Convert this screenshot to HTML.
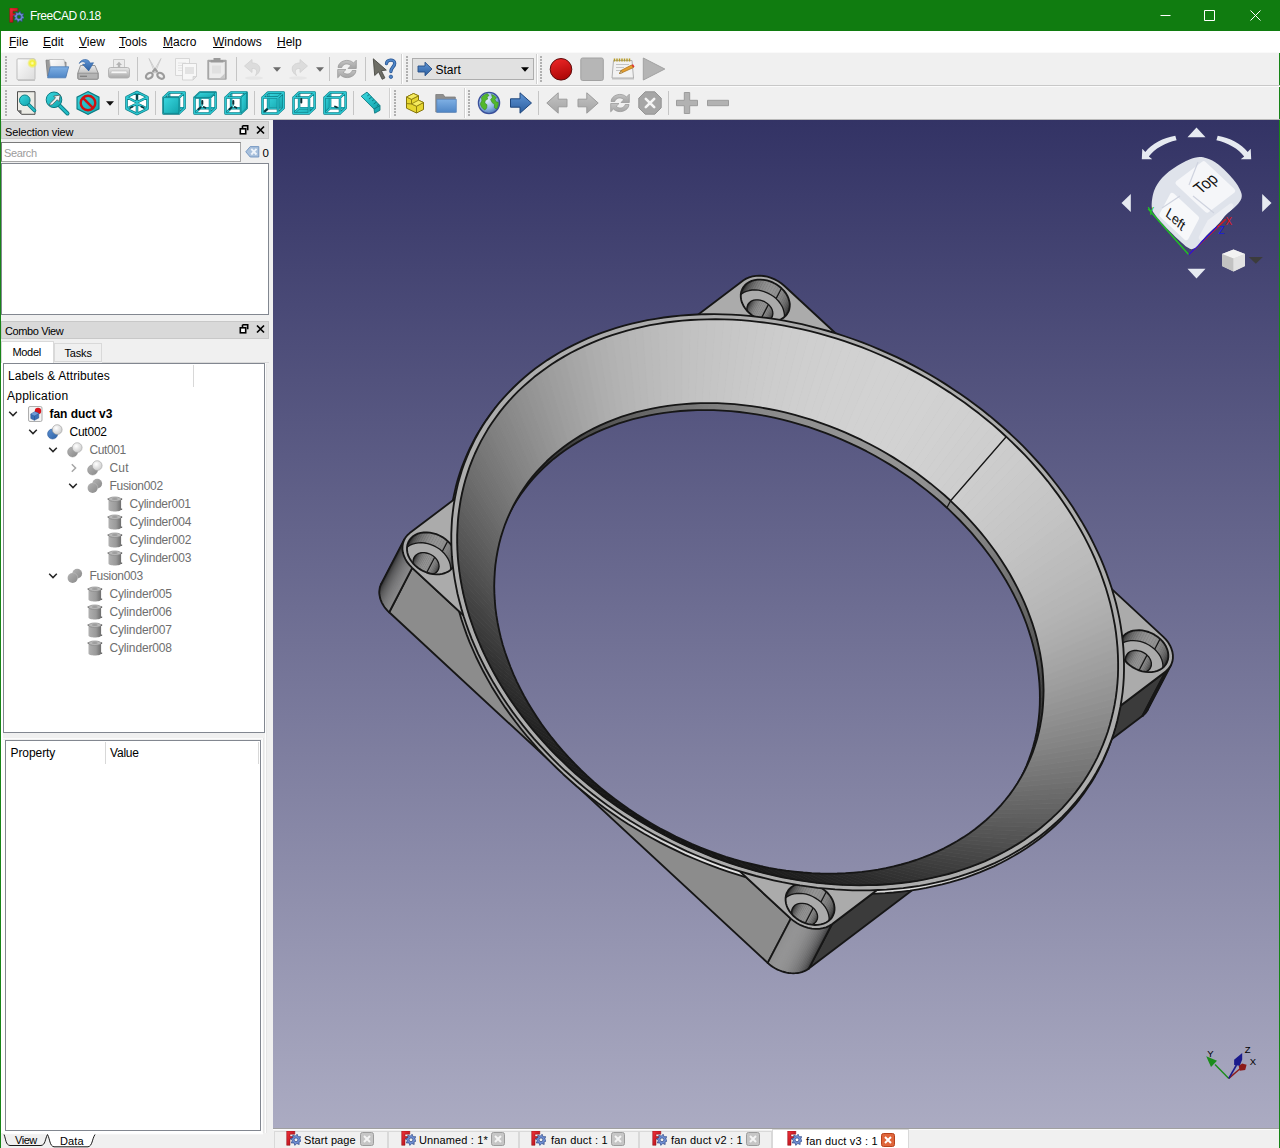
<!DOCTYPE html>
<html><head><meta charset="utf-8"><title>FreeCAD 0.18</title>
<style>
html,body{margin:0;padding:0;}
body{width:1280px;height:1148px;overflow:hidden;background:#f0f0f0;font-family:"Liberation Sans",sans-serif;font-size:12px;color:#000;position:relative;}
.a{position:absolute;}
.t{position:absolute;white-space:nowrap;line-height:14px;height:14px;}
#vp{position:absolute;left:0;top:0;width:1280px;height:1148px;}
u{text-decoration:underline;text-underline-offset:1px;}
.g{color:#6e6e6e;}
.sep{position:absolute;width:1px;background:#c5c5c5;}
.tbsep{position:absolute;width:1px;background:#d0d0d0;box-shadow:1px 0 0 #fff;}
.grip{position:absolute;width:3px;background-image:radial-gradient(circle at 1px 1px,#b0b0b0 0.9px,transparent 1.1px);background-size:3px 3px;}
.ic{position:absolute;width:24px;height:24px;overflow:visible;}
.dock{position:absolute;left:1px;width:268px;height:18px;background:#d9d9d9;border:1px solid #c8c8c8;box-sizing:border-box;}
.frame{position:absolute;background:#fff;border:1px solid #828790;box-sizing:border-box;}
.cl{position:absolute;width:13px;height:13px;top:1132px;border:1px solid #9b9b9b;border-radius:2px;background:#c9c9c9;box-sizing:border-box;}
</style></head><body>
<svg width="0" height="0" style="position:absolute"><defs>
<linearGradient id="gF" x1="0" y1="0" x2="1" y2="1"><stop offset="0" stop-color="#f0303a"/><stop offset="1" stop-color="#a80c14"/></linearGradient>
<radialGradient id="gW" cx="0.4" cy="0.35" r="0.7"><stop offset="0" stop-color="#ffffff"/><stop offset="1" stop-color="#c9c9c9"/></radialGradient>
<linearGradient id="gB" x1="0" y1="0" x2="1" y2="1"><stop offset="0" stop-color="#5b8fd0"/><stop offset="1" stop-color="#2e62a6"/></linearGradient>
<linearGradient id="gG" x1="0" y1="0" x2="1" y2="1"><stop offset="0" stop-color="#b4b4b4"/><stop offset="1" stop-color="#8a8a8a"/></linearGradient>
<linearGradient id="gC" x1="0" y1="0" x2="1" y2="0"><stop offset="0" stop-color="#b0b0b0"/><stop offset="0.6" stop-color="#9a9a9a"/><stop offset="1" stop-color="#6e6e6e"/></linearGradient>
<symbol id="fc" viewBox="0 0 16 16" overflow="visible"><path d="M1.700 0h8.100v3.200H5v2.300h3.600v2.600H5v6.200H1.700z" fill="url(#gF)" stroke="#8a0a12" stroke-width="0.500"/><path d="M12.11 3.21L13.06 5.72L15.74 5.63L14.63 8.08L16.59 9.91L14.08 10.86L14.17 13.54L11.72 12.43L9.89 14.39L8.94 11.88L6.26 11.97L7.37 9.52L5.41 7.69L7.92 6.74L7.83 4.06L10.28 5.17ZM9.10 8.80a1.9 1.9 0 1 0 3.8 0a1.9 1.9 0 1 0 -3.8 0Z" fill="#6f8fd4" fill-rule="evenodd" stroke="#2c4684" stroke-width="0.700" stroke-linejoin="round"/></symbol>
<symbol id="cutc" viewBox="0 0 16 16"><circle cx="5.6" cy="10" r="5" fill="url(#gB)" stroke="#2a5a9c" stroke-width="0.6"/><circle cx="10.2" cy="5.6" r="4.9" fill="url(#gW)" stroke="#9a9a9a" stroke-width="0.6"/></symbol>
<symbol id="cutg" viewBox="0 0 16 16"><circle cx="5.6" cy="10" r="5" fill="url(#gG)" stroke="#8a8a8a" stroke-width="0.5"/><circle cx="10.2" cy="5.6" r="4.9" fill="url(#gW)" stroke="#a4a4a4" stroke-width="0.6"/></symbol>
<symbol id="fus" viewBox="0 0 16 16"><circle cx="5.6" cy="10" r="5" fill="url(#gG)"/><circle cx="10.2" cy="5.6" r="4.9" fill="url(#gG)"/><path d="M5.8 4.9a5 5 0 0 1 5 5.6" stroke="#b8b8b8" stroke-width="0.7" fill="none"/></symbol>
<symbol id="cyl" viewBox="0 0 16 16"><path d="M1.5 3.2v10.2c0 1.3 2.9 2 6.3 2s6.3-.7 6.3-2V3.2z" fill="url(#gC)"/><ellipse cx="7.8" cy="3.2" rx="6.3" ry="2.2" fill="#b9b9b9" stroke="#858585" stroke-width="0.7"/><path d="M1.2 2.2v1.6M14.6 2.2v1.8M14.6 12.5v1.5" stroke="#666" stroke-width="1.1"/><ellipse cx="7.8" cy="3" rx="3" ry="1" fill="#9d9d9d"/></symbol>
</defs></svg>
<!-- 3D view + model -->
<svg id="vp" width="1280" height="1148" viewBox="0 0 1280 1148">
<defs><linearGradient id="bg" gradientUnits="userSpaceOnUse" x1="0" y1="120" x2="0" y2="1128"><stop offset="0" stop-color="#333365"/><stop offset="1" stop-color="#ababc2"/></linearGradient></defs>
<rect x="273" y="120" width="1006" height="1008" fill="url(#bg)"/>
<g>
<path d="M412.2,567.9 L790.8,918.6 L767.7,962.9 L389.2,612.3Z" fill="#8c8c8c" stroke="#161616" stroke-width="1.85" stroke-linejoin="round" stroke-linecap="round"/>
<path d="M831.9,924.2 L1165.7,671.4 L1142.6,715.8 L808.8,968.6Z" fill="#3b3b3b" stroke="#161616" stroke-width="1.85" stroke-linejoin="round" stroke-linecap="round"/>
<path d="M404.4,539.3 L403.8,540.7 L380.7,585.1 L381.3,583.7Z" fill="#111111" stroke="#111111" stroke-width="0.6" stroke-linejoin="round" stroke-linecap="round"/>
<path d="M403.8,540.7 L403.2,542.2 L380.1,586.6 L380.7,585.1Z" fill="#1b1b1b" stroke="#1b1b1b" stroke-width="0.6" stroke-linejoin="round" stroke-linecap="round"/>
<path d="M403.2,542.2 L402.8,543.8 L379.7,588.1 L380.1,586.6Z" fill="#242424" stroke="#242424" stroke-width="0.6" stroke-linejoin="round" stroke-linecap="round"/>
<path d="M402.8,543.8 L402.5,545.3 L379.5,589.7 L379.7,588.1Z" fill="#2d2d2d" stroke="#2d2d2d" stroke-width="0.6" stroke-linejoin="round" stroke-linecap="round"/>
<path d="M402.5,545.3 L402.4,547.0 L379.3,591.3 L379.5,589.7Z" fill="#353535" stroke="#353535" stroke-width="0.6" stroke-linejoin="round" stroke-linecap="round"/>
<path d="M402.4,547.0 L402.4,548.6 L379.3,593.0 L379.3,591.3Z" fill="#3e3e3e" stroke="#3e3e3e" stroke-width="0.6" stroke-linejoin="round" stroke-linecap="round"/>
<path d="M402.4,548.6 L402.5,550.3 L379.5,594.7 L379.3,593.0Z" fill="#474747" stroke="#474747" stroke-width="0.6" stroke-linejoin="round" stroke-linecap="round"/>
<path d="M402.5,550.3 L402.8,552.0 L379.7,596.4 L379.5,594.7Z" fill="#4f4f4f" stroke="#4f4f4f" stroke-width="0.6" stroke-linejoin="round" stroke-linecap="round"/>
<path d="M402.8,552.0 L403.2,553.7 L380.1,598.1 L379.7,596.4Z" fill="#575757" stroke="#575757" stroke-width="0.6" stroke-linejoin="round" stroke-linecap="round"/>
<path d="M403.2,553.7 L403.7,555.4 L380.6,599.7 L380.1,598.1Z" fill="#5e5e5e" stroke="#5e5e5e" stroke-width="0.6" stroke-linejoin="round" stroke-linecap="round"/>
<path d="M403.7,555.4 L404.4,557.1 L381.3,601.4 L380.6,599.7Z" fill="#656565" stroke="#656565" stroke-width="0.6" stroke-linejoin="round" stroke-linecap="round"/>
<path d="M404.4,557.1 L405.2,558.7 L382.1,603.1 L381.3,601.4Z" fill="#6c6c6c" stroke="#6c6c6c" stroke-width="0.6" stroke-linejoin="round" stroke-linecap="round"/>
<path d="M405.2,558.7 L406.1,560.4 L383.0,604.7 L382.1,603.1Z" fill="#727272" stroke="#727272" stroke-width="0.6" stroke-linejoin="round" stroke-linecap="round"/>
<path d="M406.1,560.4 L407.1,562.0 L384.0,606.4 L383.0,604.7Z" fill="#787878" stroke="#787878" stroke-width="0.6" stroke-linejoin="round" stroke-linecap="round"/>
<path d="M407.1,562.0 L408.2,563.5 L385.1,607.9 L384.0,606.4Z" fill="#7d7d7d" stroke="#7d7d7d" stroke-width="0.6" stroke-linejoin="round" stroke-linecap="round"/>
<path d="M408.2,563.5 L409.5,565.1 L386.4,609.4 L385.1,607.9Z" fill="#828282" stroke="#828282" stroke-width="0.6" stroke-linejoin="round" stroke-linecap="round"/>
<path d="M409.5,565.1 L410.8,566.5 L387.7,610.9 L386.4,609.4Z" fill="#868686" stroke="#868686" stroke-width="0.6" stroke-linejoin="round" stroke-linecap="round"/>
<path d="M410.8,566.5 L412.2,567.9 L389.2,612.3 L387.7,610.9Z" fill="#8a8a8a" stroke="#8a8a8a" stroke-width="0.6" stroke-linejoin="round" stroke-linecap="round"/>
<path d="M381.3,583.7 L380.7,585.0 L380.2,586.3 L379.8,587.7 L379.6,589.1 L379.4,590.5 L379.3,592.0 L379.3,593.5 L379.5,595.0 L379.8,596.5 L380.1,598.1 L380.6,599.6 L381.2,601.1 L381.8,602.6 L382.6,604.1 L383.5,605.6 L384.4,607.0 L385.5,608.4 L386.6,609.7 L387.9,611.1 L389.2,612.3" fill="none" stroke="#161616" stroke-width="1.85" stroke-linejoin="round" stroke-linecap="round"/>
<path d="M404.4,539.3 L381.3,583.7" fill="none" stroke="#161616" stroke-width="1.85" stroke-linejoin="round" stroke-linecap="round"/>
<path d="M412.2,567.9 L389.2,612.3" fill="none" stroke="#161616" stroke-width="1.85" stroke-linejoin="round" stroke-linecap="round"/>
<path d="M790.8,918.6 L792.3,919.9 L769.2,964.3 L767.7,962.9Z" fill="#8d8d8d" stroke="#8d8d8d" stroke-width="0.6" stroke-linejoin="round" stroke-linecap="round"/>
<path d="M792.3,919.9 L793.9,921.2 L770.9,965.6 L769.2,964.3Z" fill="#909090" stroke="#909090" stroke-width="0.6" stroke-linejoin="round" stroke-linecap="round"/>
<path d="M793.9,921.2 L795.6,922.4 L772.6,966.8 L770.9,965.6Z" fill="#929292" stroke="#929292" stroke-width="0.6" stroke-linejoin="round" stroke-linecap="round"/>
<path d="M795.6,922.4 L797.4,923.5 L774.3,967.9 L772.6,966.8Z" fill="#939393" stroke="#939393" stroke-width="0.6" stroke-linejoin="round" stroke-linecap="round"/>
<path d="M797.4,923.5 L799.2,924.5 L776.1,968.9 L774.3,967.9Z" fill="#949494" stroke="#949494" stroke-width="0.6" stroke-linejoin="round" stroke-linecap="round"/>
<path d="M799.2,924.5 L801.1,925.4 L778.0,969.8 L776.1,968.9Z" fill="#949494" stroke="#949494" stroke-width="0.6" stroke-linejoin="round" stroke-linecap="round"/>
<path d="M801.1,925.4 L803.0,926.2 L779.9,970.6 L778.0,969.8Z" fill="#939393" stroke="#939393" stroke-width="0.6" stroke-linejoin="round" stroke-linecap="round"/>
<path d="M803.0,926.2 L804.9,926.9 L781.9,971.3 L779.9,970.6Z" fill="#929292" stroke="#929292" stroke-width="0.6" stroke-linejoin="round" stroke-linecap="round"/>
<path d="M804.9,926.9 L806.9,927.6 L783.8,971.9 L781.9,971.3Z" fill="#909090" stroke="#909090" stroke-width="0.6" stroke-linejoin="round" stroke-linecap="round"/>
<path d="M806.9,927.6 L808.9,928.0 L785.8,972.4 L783.8,971.9Z" fill="#8e8e8e" stroke="#8e8e8e" stroke-width="0.6" stroke-linejoin="round" stroke-linecap="round"/>
<path d="M808.9,928.0 L810.9,928.4 L787.8,972.8 L785.8,972.4Z" fill="#8b8b8b" stroke="#8b8b8b" stroke-width="0.6" stroke-linejoin="round" stroke-linecap="round"/>
<path d="M810.9,928.4 L812.9,928.7 L789.8,973.1 L787.8,972.8Z" fill="#878787" stroke="#878787" stroke-width="0.6" stroke-linejoin="round" stroke-linecap="round"/>
<path d="M812.9,928.7 L814.8,928.9 L791.7,973.2 L789.8,973.1Z" fill="#838383" stroke="#838383" stroke-width="0.6" stroke-linejoin="round" stroke-linecap="round"/>
<path d="M814.8,928.9 L816.8,928.9 L793.7,973.3 L791.7,973.2Z" fill="#7e7e7e" stroke="#7e7e7e" stroke-width="0.6" stroke-linejoin="round" stroke-linecap="round"/>
<path d="M816.8,928.9 L818.7,928.8 L795.6,973.2 L793.7,973.3Z" fill="#797979" stroke="#797979" stroke-width="0.6" stroke-linejoin="round" stroke-linecap="round"/>
<path d="M818.7,928.8 L820.6,928.6 L797.5,973.0 L795.6,973.2Z" fill="#737373" stroke="#737373" stroke-width="0.6" stroke-linejoin="round" stroke-linecap="round"/>
<path d="M820.6,928.6 L822.4,928.3 L799.3,972.7 L797.5,973.0Z" fill="#6d6d6d" stroke="#6d6d6d" stroke-width="0.6" stroke-linejoin="round" stroke-linecap="round"/>
<path d="M822.4,928.3 L824.2,927.9 L801.1,972.3 L799.3,972.7Z" fill="#666666" stroke="#666666" stroke-width="0.6" stroke-linejoin="round" stroke-linecap="round"/>
<path d="M824.2,927.9 L825.9,927.4 L802.8,971.8 L801.1,972.3Z" fill="#5f5f5f" stroke="#5f5f5f" stroke-width="0.6" stroke-linejoin="round" stroke-linecap="round"/>
<path d="M825.9,927.4 L827.5,926.7 L804.4,971.1 L802.8,971.8Z" fill="#575757" stroke="#575757" stroke-width="0.6" stroke-linejoin="round" stroke-linecap="round"/>
<path d="M827.5,926.7 L829.0,926.0 L806.0,970.4 L804.4,971.1Z" fill="#4f4f4f" stroke="#4f4f4f" stroke-width="0.6" stroke-linejoin="round" stroke-linecap="round"/>
<path d="M829.0,926.0 L830.5,925.1 L807.4,969.5 L806.0,970.4Z" fill="#474747" stroke="#474747" stroke-width="0.6" stroke-linejoin="round" stroke-linecap="round"/>
<path d="M830.5,925.1 L831.9,924.2 L808.8,968.6 L807.4,969.5Z" fill="#3f3f3f" stroke="#3f3f3f" stroke-width="0.6" stroke-linejoin="round" stroke-linecap="round"/>
<path d="M767.7,962.9 L769.5,964.5 L771.4,965.9 L773.3,967.3 L775.4,968.5 L777.5,969.6 L779.7,970.5 L782.0,971.4 L784.2,972.0 L786.5,972.6 L788.8,973.0 L791.1,973.2 L793.3,973.3 L795.5,973.2 L797.7,973.0 L799.8,972.6 L801.8,972.1 L803.7,971.4 L805.5,970.6 L807.2,969.7 L808.8,968.6" fill="none" stroke="#161616" stroke-width="1.85" stroke-linejoin="round" stroke-linecap="round"/>
<path d="M790.8,918.6 L767.7,962.9" fill="none" stroke="#161616" stroke-width="1.85" stroke-linejoin="round" stroke-linecap="round"/>
<path d="M831.9,924.2 L808.8,968.6" fill="none" stroke="#161616" stroke-width="1.85" stroke-linejoin="round" stroke-linecap="round"/>
<path d="M1165.7,671.4 L1166.9,670.3 L1143.9,714.7 L1142.6,715.8Z" fill="#363636" stroke="#363636" stroke-width="0.6" stroke-linejoin="round" stroke-linecap="round"/>
<path d="M1166.9,670.3 L1168.1,669.2 L1145.0,713.6 L1143.9,714.7Z" fill="#2d2d2d" stroke="#2d2d2d" stroke-width="0.6" stroke-linejoin="round" stroke-linecap="round"/>
<path d="M1168.1,669.2 L1169.2,668.0 L1146.1,712.3 L1145.0,713.6Z" fill="#242424" stroke="#242424" stroke-width="0.6" stroke-linejoin="round" stroke-linecap="round"/>
<path d="M1169.2,668.0 L1170.1,666.6 L1147.0,711.0 L1146.1,712.3Z" fill="#1b1b1b" stroke="#1b1b1b" stroke-width="0.6" stroke-linejoin="round" stroke-linecap="round"/>
<path d="M1170.1,666.6 L1170.9,665.2 L1147.8,709.6 L1147.0,711.0Z" fill="#111111" stroke="#111111" stroke-width="0.6" stroke-linejoin="round" stroke-linecap="round"/>
<path d="M1142.6,715.8 L1142.9,715.5 L1143.2,715.3 L1143.6,715.0 L1143.9,714.7 L1144.2,714.4 L1144.5,714.2 L1144.8,713.9 L1145.0,713.6 L1145.3,713.3 L1145.6,713.0 L1145.8,712.6 L1146.1,712.3 L1146.3,712.0 L1146.6,711.7 L1146.8,711.4 L1147.0,711.0 L1147.2,710.7 L1147.4,710.3 L1147.6,710.0 L1147.8,709.6" fill="none" stroke="#161616" stroke-width="1.85" stroke-linejoin="round" stroke-linecap="round"/>
<path d="M1165.7,671.4 L1142.6,715.8" fill="none" stroke="#161616" stroke-width="1.85" stroke-linejoin="round" stroke-linecap="round"/>
<path d="M1170.9,665.2 L1147.8,709.6" fill="none" stroke="#161616" stroke-width="1.85" stroke-linejoin="round" stroke-linecap="round"/>
<linearGradient id="slg" gradientUnits="userSpaceOnUse" x1="515" y1="724" x2="1107" y2="785"><stop offset="0" stop-color="#9c9c9c"/><stop offset="0.35" stop-color="#e2e2e2"/><stop offset="0.7" stop-color="#dcdcdc"/><stop offset="1" stop-color="#8c8c8c"/></linearGradient>
<path d="M1008.8,436.7 L1002.1,430.6 L995.3,424.7 L988.3,418.9 L981.2,413.2 L973.9,407.6 L966.5,402.2 L959.0,396.9 L951.4,391.7 L943.7,386.7 L935.8,381.9 L927.9,377.2 L919.8,372.6 L911.7,368.3 L903.5,364.0 L895.2,360.0 L886.8,356.1 L878.3,352.4 L869.8,348.8 L861.2,345.5 L852.6,342.3 L844.0,339.3 L835.3,336.5 L826.5,333.8 L817.7,331.4 L809.0,329.1 L800.1,327.0 L791.3,325.1 L782.5,323.4 L773.7,321.9 L764.9,320.6 L756.1,319.5 L747.3,318.6 L738.6,317.9 L729.9,317.4 L721.2,317.0 L712.6,316.9 L704.0,317.0 L695.4,317.3 L687.0,317.7 L678.6,318.4 L670.3,319.2 L662.0,320.3 L653.9,321.6 L645.8,323.0 L637.8,324.6 L630.0,326.5 L622.2,328.5 L614.6,330.7 L607.0,333.1 L599.6,335.7 L592.3,338.5 L585.2,341.4 L578.2,344.6 L571.3,347.9 L564.6,351.4 L558.0,355.0 L551.6,358.9 L545.3,362.9 L539.3,367.1 L533.3,371.4 L527.6,375.9 L522.0,380.6 L516.6,385.4 L511.4,390.3 L506.4,395.4 L501.6,400.7 L497.0,406.1 L492.5,411.6 L488.3,417.3 L484.3,423.1 L480.5,429.0 L476.8,435.0 L473.5,441.2 L470.3,447.4 L467.3,453.8 L464.6,460.3 L462.0,466.9 L459.7,473.5 L457.6,480.3 L455.8,487.1 L454.2,494.1 L452.7,501.1 L451.6,508.1 L450.6,515.3 L449.9,522.5 L449.4,529.8 L449.2,537.1 L449.1,544.4 L449.4,551.8 L449.8,559.3 L450.5,566.7 L451.4,574.2 L452.5,581.8 L453.8,589.3 L455.4,596.8 L457.2,604.4 L459.3,611.9 L461.5,619.5 L464.0,627.0 L466.7,634.6 L469.6,642.1 L472.8,649.5 L476.1,657.0 L479.7,664.4 L483.5,671.8 L487.5,679.1 L491.6,686.4 L496.0,693.6 L500.6,700.8 L505.4,707.9 L510.4,714.9 L515.5,721.8 L520.9,728.7 L526.4,735.5 L532.1,742.2 L538.0,748.8 L544.1,755.3 L550.3,761.7 L556.7,768.0 L563.2,774.2 L569.9,780.3 L576.7,786.2 L583.7,792.0 L590.8,797.7 L598.1,803.3 L605.5,808.7 L613.0,814.0 L620.6,819.2 L628.3,824.2 L636.2,829.0 L644.1,833.7 L652.2,838.2 L660.3,842.6 L668.6,846.8 L676.9,850.9 L685.2,854.8 L693.7,858.5 L702.2,862.0 L710.8,865.4 L719.4,868.6 L728.1,871.6 L736.8,874.4 L745.5,877.1 L754.3,879.5 L763.1,881.8 L771.9,883.9 L780.7,885.7 L789.5,887.4 L798.3,888.9 L807.1,890.2 L815.9,891.4 L824.7,892.3 L833.4,893.0 L842.2,893.5 L850.8,893.8 L859.5,894.0 L868.1,893.9 L876.6,893.6 L885.0,893.2 L893.4,892.5 L901.8,891.6 L910.0,890.6 L918.2,889.3 L926.2,887.9 L934.2,886.2 L942.1,884.4 L949.8,882.4 L957.5,880.2 L965.0,877.8 L972.4,875.2 L979.7,872.4 L986.8,869.4 L993.9,866.3 L1000.7,863.0 L1007.4,859.5 L1014.0,855.8 L1020.4,852.0 L1026.7,848.0 L1032.8,843.8 L1038.7,839.5 L1044.4,835.0 L1050.0,830.3 L1055.4,825.5 L1060.6,820.6 L1065.6,815.4 L1070.4,810.2 L1075.1,804.8 L1079.5,799.3 L1083.7,793.6 L1087.7,787.8 L1091.6,781.9 L1095.2,775.9 L1098.6,769.7 L1101.8,763.5 L1104.7,757.1 L1107.5,750.6 L1110.0,744.0 L1112.3,737.4 L1114.4,730.6 L1116.2,723.7 L1117.9,716.8 L1119.3,709.8 L1120.4,702.7 L1121.4,695.6 L1122.1,688.4 L1122.6,681.1 L1122.9,673.8 L1122.9,666.4 L1122.7,659.0 L1122.2,651.6 L1121.6,644.1 L1120.7,636.6 L1119.5,629.1 L1118.2,621.6 L1116.6,614.0 L1114.8,606.5 L1112.8,598.9 L1110.5,591.4 L1108.0,583.8 L1105.3,576.3 L1102.4,568.8 L1099.2,561.3 L1095.9,553.9 L1092.3,546.5 L1088.6,539.1 L1084.6,531.8 L1080.4,524.5 L1076.0,517.3 L1071.4,510.1 L1066.6,503.0 L1061.6,496.0 L1056.5,489.0 L1051.1,482.2 L1045.6,475.4 L1039.9,468.7 L1034.0,462.1 L1028.0,455.6 L1021.7,449.2 L1015.4,442.9 L1008.8,436.7Z" fill="url(#slg)" stroke="#161616" stroke-width="1.85" stroke-linejoin="round" stroke-linecap="round"/>
<path d="M784.5,286.0 L781.5,283.5 L778.2,281.2 L774.7,279.4 L771.0,277.8 L767.3,276.7 L763.5,276.0 L759.7,275.6 L756.0,275.8 L752.5,276.3 L749.2,277.3 L746.2,278.6 L743.5,280.3 L409.7,533.1 L407.3,535.2 L405.4,537.6 L404.0,540.3 L403.0,543.1 L402.5,546.2 L402.4,549.4 L402.9,552.6 L403.9,555.9 L405.4,559.1 L407.2,562.2 L409.6,565.2 L412.2,567.9 L790.8,918.6 L793.8,921.1 L797.1,923.3 L800.6,925.2 L804.3,926.7 L808.1,927.9 L811.9,928.6 L815.6,928.9 L819.3,928.8 L822.8,928.2 L826.1,927.3 L829.2,925.9 L831.9,924.2 L1165.7,671.4 L1168.0,669.3 L1169.9,666.9 L1171.4,664.3 L1172.4,661.4 L1172.9,658.3 L1172.9,655.2 L1172.4,651.9 L1171.4,648.7 L1170.0,645.4 L1168.1,642.3 L1165.8,639.4 L1163.1,636.6Z" fill="#ababab" stroke="#161616" stroke-width="1.85" stroke-linejoin="round" stroke-linecap="round"/>
<clipPath id="hc1"><path d="M781.5,288.3 L779.0,286.2 L776.2,284.3 L773.2,282.7 L770.1,281.4 L767.0,280.4 L763.7,279.8 L760.6,279.6 L757.5,279.7 L754.5,280.1 L751.7,280.9 L749.2,282.1 L746.9,283.5 L744.9,285.3 L743.3,287.3 L742.1,289.5 L741.2,291.9 L740.8,294.5 L740.8,297.2 L741.2,299.9 L742.0,302.7 L743.3,305.4 L744.9,308.0 L746.8,310.5 L749.1,312.8 L751.6,315.0 L754.4,316.8 L757.3,318.4 L760.4,319.7 L763.6,320.7 L766.8,321.3 L770.0,321.5 L773.1,321.4 L776.1,321.0 L778.9,320.2 L781.4,319.0 L783.7,317.6 L785.6,315.8 L787.2,313.8 L788.5,311.6 L789.3,309.2 L789.7,306.6 L789.8,303.9 L789.3,301.2 L788.5,298.4 L787.3,295.7 L785.7,293.1 L783.8,290.6 L781.5,288.3Z"/></clipPath>
<g clip-path="url(#hc1)">
<path d="M781.5,288.3 L779.0,286.2 L776.2,284.3 L773.2,282.7 L770.1,281.4 L767.0,280.4 L763.7,279.8 L760.6,279.6 L757.5,279.7 L754.5,280.1 L751.7,280.9 L749.2,282.1 L746.9,283.5 L744.9,285.3 L743.3,287.3 L742.1,289.5 L741.2,291.9 L740.8,294.5 L740.8,297.2 L741.2,299.9 L742.0,302.7 L743.3,305.4 L744.9,308.0 L746.8,310.5 L749.1,312.8 L751.6,315.0 L754.4,316.8 L757.3,318.4 L760.4,319.7 L763.6,320.7 L766.8,321.3 L770.0,321.5 L773.1,321.4 L776.1,321.0 L778.9,320.2 L781.4,319.0 L783.7,317.6 L785.6,315.8 L787.2,313.8 L788.5,311.6 L789.3,309.2 L789.7,306.6 L789.8,303.9 L789.3,301.2 L788.5,298.4 L787.3,295.7 L785.7,293.1 L783.8,290.6 L781.5,288.3Z" fill="#191919"/>
<path d="M788.1,312.4 L788.9,310.5 L782.6,322.6 L781.8,324.5Z" fill="#141414" stroke="#141414" stroke-width="0.6" stroke-linejoin="round" stroke-linecap="round"/>
<path d="M788.9,310.5 L789.5,308.5 L783.2,320.7 L782.6,322.6Z" fill="#222222" stroke="#222222" stroke-width="0.6" stroke-linejoin="round" stroke-linecap="round"/>
<path d="M789.5,308.5 L789.8,306.5 L783.5,318.6 L783.2,320.7Z" fill="#303030" stroke="#303030" stroke-width="0.6" stroke-linejoin="round" stroke-linecap="round"/>
<path d="M789.8,306.5 L789.8,304.3 L783.5,316.4 L783.5,318.6Z" fill="#3d3d3d" stroke="#3d3d3d" stroke-width="0.6" stroke-linejoin="round" stroke-linecap="round"/>
<path d="M789.8,304.3 L789.5,302.2 L783.2,314.3 L783.5,316.4Z" fill="#4a4a4a" stroke="#4a4a4a" stroke-width="0.6" stroke-linejoin="round" stroke-linecap="round"/>
<path d="M789.5,302.2 L789.0,300.0 L782.7,312.1 L783.2,314.3Z" fill="#565656" stroke="#565656" stroke-width="0.6" stroke-linejoin="round" stroke-linecap="round"/>
<path d="M789.0,300.0 L788.3,297.8 L782.0,309.9 L782.7,312.1Z" fill="#626262" stroke="#626262" stroke-width="0.6" stroke-linejoin="round" stroke-linecap="round"/>
<path d="M788.3,297.8 L787.2,295.6 L780.9,307.7 L782.0,309.9Z" fill="#6c6c6c" stroke="#6c6c6c" stroke-width="0.6" stroke-linejoin="round" stroke-linecap="round"/>
<path d="M787.2,295.6 L786.0,293.5 L779.7,305.6 L780.9,307.7Z" fill="#767676" stroke="#767676" stroke-width="0.6" stroke-linejoin="round" stroke-linecap="round"/>
<path d="M786.0,293.5 L784.5,291.5 L778.2,303.6 L779.7,305.6Z" fill="#7e7e7e" stroke="#7e7e7e" stroke-width="0.6" stroke-linejoin="round" stroke-linecap="round"/>
<path d="M784.5,291.5 L782.8,289.5 L776.5,301.6 L778.2,303.6Z" fill="#858585" stroke="#858585" stroke-width="0.6" stroke-linejoin="round" stroke-linecap="round"/>
<path d="M782.8,289.5 L780.9,287.7 L774.6,299.8 L776.5,301.6Z" fill="#8b8b8b" stroke="#8b8b8b" stroke-width="0.6" stroke-linejoin="round" stroke-linecap="round"/>
<path d="M780.9,287.7 L778.8,286.1 L772.5,298.2 L774.6,299.8Z" fill="#8f8f8f" stroke="#8f8f8f" stroke-width="0.6" stroke-linejoin="round" stroke-linecap="round"/>
<path d="M778.8,286.1 L776.6,284.6 L770.3,296.7 L772.5,298.2Z" fill="#929292" stroke="#929292" stroke-width="0.6" stroke-linejoin="round" stroke-linecap="round"/>
<path d="M776.6,284.6 L774.3,283.2 L768.0,295.3 L770.3,296.7Z" fill="#949494" stroke="#949494" stroke-width="0.6" stroke-linejoin="round" stroke-linecap="round"/>
<path d="M774.3,283.2 L771.9,282.1 L765.6,294.2 L768.0,295.3Z" fill="#949494" stroke="#949494" stroke-width="0.6" stroke-linejoin="round" stroke-linecap="round"/>
<path d="M771.9,282.1 L769.4,281.1 L763.1,293.2 L765.6,294.2Z" fill="#929292" stroke="#929292" stroke-width="0.6" stroke-linejoin="round" stroke-linecap="round"/>
<path d="M769.4,281.1 L766.8,280.4 L760.5,292.5 L763.1,293.2Z" fill="#8f8f8f" stroke="#8f8f8f" stroke-width="0.6" stroke-linejoin="round" stroke-linecap="round"/>
<path d="M766.8,280.4 L764.2,279.9 L757.9,292.0 L760.5,292.5Z" fill="#8b8b8b" stroke="#8b8b8b" stroke-width="0.6" stroke-linejoin="round" stroke-linecap="round"/>
<path d="M764.2,279.9 L761.7,279.6 L755.4,291.7 L757.9,292.0Z" fill="#858585" stroke="#858585" stroke-width="0.6" stroke-linejoin="round" stroke-linecap="round"/>
<path d="M761.7,279.6 L759.2,279.6 L752.9,291.7 L755.4,291.7Z" fill="#7e7e7e" stroke="#7e7e7e" stroke-width="0.6" stroke-linejoin="round" stroke-linecap="round"/>
<path d="M759.2,279.6 L756.7,279.7 L750.4,291.8 L752.9,291.7Z" fill="#767676" stroke="#767676" stroke-width="0.6" stroke-linejoin="round" stroke-linecap="round"/>
<path d="M756.7,279.7 L754.4,280.1 L748.1,292.3 L750.4,291.8Z" fill="#6c6c6c" stroke="#6c6c6c" stroke-width="0.6" stroke-linejoin="round" stroke-linecap="round"/>
<path d="M754.4,280.1 L752.1,280.8 L745.8,292.9 L748.1,292.3Z" fill="#626262" stroke="#626262" stroke-width="0.6" stroke-linejoin="round" stroke-linecap="round"/>
<path d="M752.1,280.8 L750.0,281.6 L743.7,293.7 L745.8,292.9Z" fill="#565656" stroke="#565656" stroke-width="0.6" stroke-linejoin="round" stroke-linecap="round"/>
<path d="M750.0,281.6 L748.1,282.7 L741.8,294.8 L743.7,293.7Z" fill="#4a4a4a" stroke="#4a4a4a" stroke-width="0.6" stroke-linejoin="round" stroke-linecap="round"/>
<path d="M748.1,282.7 L746.4,283.9 L740.1,296.0 L741.8,294.8Z" fill="#3d3d3d" stroke="#3d3d3d" stroke-width="0.6" stroke-linejoin="round" stroke-linecap="round"/>
<path d="M746.4,283.9 L744.9,285.4 L738.6,297.5 L740.1,296.0Z" fill="#303030" stroke="#303030" stroke-width="0.6" stroke-linejoin="round" stroke-linecap="round"/>
<path d="M744.9,285.4 L743.5,287.0 L737.3,299.1 L738.6,297.5Z" fill="#222222" stroke="#222222" stroke-width="0.6" stroke-linejoin="round" stroke-linecap="round"/>
<path d="M743.5,287.0 L742.5,288.7 L736.2,300.8 L737.3,299.1Z" fill="#141414" stroke="#141414" stroke-width="0.6" stroke-linejoin="round" stroke-linecap="round"/>
<path d="M781.5,288.3 L776.1,298.6" fill="none" stroke="#161616" stroke-width="1.2" stroke-linejoin="round" stroke-linecap="round"/>
<path d="M776.1,298.6 L773.6,296.5 L770.8,294.7 L767.8,293.1 L764.7,291.8 L761.6,290.8 L758.4,290.2 L755.2,289.9 L752.1,290.0 L749.1,290.5 L746.3,291.3 L743.8,292.4 L741.5,293.9 L739.5,295.6 L737.9,297.7 L736.7,299.9 L735.9,302.3 L735.4,304.9 L735.4,307.6 L735.8,310.3 L736.6,313.0 L737.9,315.8 L739.5,318.4 L741.4,320.9 L743.7,323.2 L746.2,325.3 L749.0,327.2 L751.9,328.8 L755.0,330.1 L758.2,331.0 L761.4,331.7 L764.6,331.9 L767.7,331.8 L770.7,331.4 L773.5,330.6 L776.0,329.4 L778.3,328.0 L780.2,326.2 L781.9,324.2 L783.1,322.0 L783.9,319.5 L784.4,317.0 L784.4,314.3 L783.9,311.6 L783.1,308.8 L781.9,306.1 L780.3,303.5 L778.4,301.0 L776.1,298.6Z" fill="#ababab" stroke="#161616" stroke-width="1.3" stroke-linejoin="round" stroke-linecap="round"/>
<clipPath id="tc1"><path d="M768.5,304.4 L766.6,303.0 L764.6,301.7 L762.5,300.8 L760.2,300.2 L757.9,299.8 L755.8,299.9 L753.7,300.2 L751.8,300.9 L750.2,301.9 L748.8,303.2 L747.8,304.7 L747.2,306.4 L746.9,308.2 L747.1,310.1 L747.6,312.1 L748.5,314.0 L749.7,315.8 L751.3,317.4 L753.1,318.9 L755.2,320.1 L757.3,321.1 L759.6,321.7 L761.8,322.0 L764.0,322.0 L766.1,321.6 L768.0,320.9 L769.6,319.9 L771.0,318.7 L772.0,317.2 L772.6,315.5 L772.9,313.7 L772.7,311.7 L772.2,309.8 L771.3,307.9 L770.0,306.1 L768.5,304.4Z"/></clipPath>
<g clip-path="url(#tc1)">
<path d="M768.5,304.4 L766.6,303.0 L764.6,301.7 L762.5,300.8 L760.2,300.2 L757.9,299.8 L755.8,299.9 L753.7,300.2 L751.8,300.9 L750.2,301.9 L748.8,303.2 L747.8,304.7 L747.2,306.4 L746.9,308.2 L747.1,310.1 L747.6,312.1 L748.5,314.0 L749.7,315.8 L751.3,317.4 L753.1,318.9 L755.2,320.1 L757.3,321.1 L759.6,321.7 L761.8,322.0 L764.0,322.0 L766.1,321.6 L768.0,320.9 L769.6,319.9 L771.0,318.7 L772.0,317.2 L772.6,315.5 L772.9,313.7 L772.7,311.7 L772.2,309.8 L771.3,307.9 L770.0,306.1 L768.5,304.4Z" fill="#111111"/>
<path d="M772.0,317.2 L772.5,316.0 L754.8,350.0 L754.3,351.2Z" fill="#161616" stroke="#161616" stroke-width="0.6" stroke-linejoin="round" stroke-linecap="round"/>
<path d="M772.5,316.0 L772.8,314.6 L755.1,348.6 L754.8,350.0Z" fill="#272727" stroke="#272727" stroke-width="0.6" stroke-linejoin="round" stroke-linecap="round"/>
<path d="M772.8,314.6 L772.9,313.2 L755.2,347.2 L755.1,348.6Z" fill="#383838" stroke="#383838" stroke-width="0.6" stroke-linejoin="round" stroke-linecap="round"/>
<path d="M772.9,313.2 L772.7,311.8 L755.0,345.8 L755.2,347.2Z" fill="#484848" stroke="#484848" stroke-width="0.6" stroke-linejoin="round" stroke-linecap="round"/>
<path d="M772.7,311.8 L772.4,310.3 L754.7,344.3 L755.0,345.8Z" fill="#585858" stroke="#585858" stroke-width="0.6" stroke-linejoin="round" stroke-linecap="round"/>
<path d="M772.4,310.3 L771.8,308.9 L754.1,342.9 L754.7,344.3Z" fill="#666666" stroke="#666666" stroke-width="0.6" stroke-linejoin="round" stroke-linecap="round"/>
<path d="M771.8,308.9 L771.0,307.5 L753.3,341.5 L754.1,342.9Z" fill="#727272" stroke="#727272" stroke-width="0.6" stroke-linejoin="round" stroke-linecap="round"/>
<path d="M771.0,307.5 L770.1,306.1 L752.4,340.1 L753.3,341.5Z" fill="#7d7d7d" stroke="#7d7d7d" stroke-width="0.6" stroke-linejoin="round" stroke-linecap="round"/>
<path d="M770.1,306.1 L768.9,304.9 L751.2,338.9 L752.4,340.1Z" fill="#868686" stroke="#868686" stroke-width="0.6" stroke-linejoin="round" stroke-linecap="round"/>
<path d="M768.9,304.9 L767.6,303.7 L749.9,337.7 L751.2,338.9Z" fill="#8d8d8d" stroke="#8d8d8d" stroke-width="0.6" stroke-linejoin="round" stroke-linecap="round"/>
<path d="M767.6,303.7 L766.2,302.7 L748.5,336.7 L749.9,337.7Z" fill="#919191" stroke="#919191" stroke-width="0.6" stroke-linejoin="round" stroke-linecap="round"/>
<path d="M766.2,302.7 L764.7,301.8 L747.0,335.8 L748.5,336.7Z" fill="#939393" stroke="#939393" stroke-width="0.6" stroke-linejoin="round" stroke-linecap="round"/>
<path d="M764.7,301.8 L763.0,301.0 L745.4,335.0 L747.0,335.8Z" fill="#939393" stroke="#939393" stroke-width="0.6" stroke-linejoin="round" stroke-linecap="round"/>
<path d="M763.0,301.0 L761.4,300.4 L743.7,334.5 L745.4,335.0Z" fill="#919191" stroke="#919191" stroke-width="0.6" stroke-linejoin="round" stroke-linecap="round"/>
<path d="M761.4,300.4 L759.7,300.1 L742.0,334.1 L743.7,334.5Z" fill="#8d8d8d" stroke="#8d8d8d" stroke-width="0.6" stroke-linejoin="round" stroke-linecap="round"/>
<path d="M759.7,300.1 L758.0,299.8 L740.3,333.9 L742.0,334.1Z" fill="#868686" stroke="#868686" stroke-width="0.6" stroke-linejoin="round" stroke-linecap="round"/>
<path d="M758.0,299.8 L756.3,299.8 L738.6,333.8 L740.3,333.9Z" fill="#7d7d7d" stroke="#7d7d7d" stroke-width="0.6" stroke-linejoin="round" stroke-linecap="round"/>
<path d="M756.3,299.8 L754.7,300.0 L737.0,334.0 L738.6,333.8Z" fill="#727272" stroke="#727272" stroke-width="0.6" stroke-linejoin="round" stroke-linecap="round"/>
<path d="M754.7,300.0 L753.2,300.4 L735.5,334.4 L737.0,334.0Z" fill="#666666" stroke="#666666" stroke-width="0.6" stroke-linejoin="round" stroke-linecap="round"/>
<path d="M753.2,300.4 L751.8,300.9 L734.1,334.9 L735.5,334.4Z" fill="#585858" stroke="#585858" stroke-width="0.6" stroke-linejoin="round" stroke-linecap="round"/>
<path d="M751.8,300.9 L750.6,301.6 L732.9,335.6 L734.1,334.9Z" fill="#484848" stroke="#484848" stroke-width="0.6" stroke-linejoin="round" stroke-linecap="round"/>
<path d="M750.6,301.6 L749.5,302.5 L731.8,336.5 L732.9,335.6Z" fill="#383838" stroke="#383838" stroke-width="0.6" stroke-linejoin="round" stroke-linecap="round"/>
<path d="M749.5,302.5 L748.5,303.5 L730.9,337.5 L731.8,336.5Z" fill="#272727" stroke="#272727" stroke-width="0.6" stroke-linejoin="round" stroke-linecap="round"/>
<path d="M748.5,303.5 L747.8,304.7 L730.1,338.7 L730.9,337.5Z" fill="#161616" stroke="#161616" stroke-width="0.6" stroke-linejoin="round" stroke-linecap="round"/>
<path d="M768.5,304.4 L750.8,338.4" fill="none" stroke="#161616" stroke-width="1.2" stroke-linejoin="round" stroke-linecap="round"/>
</g>
<path d="M768.5,304.4 L766.6,303.0 L764.6,301.7 L762.5,300.8 L760.2,300.2 L757.9,299.8 L755.8,299.9 L753.7,300.2 L751.8,300.9 L750.2,301.9 L748.8,303.2 L747.8,304.7 L747.2,306.4 L746.9,308.2 L747.1,310.1 L747.6,312.1 L748.5,314.0 L749.7,315.8 L751.3,317.4 L753.1,318.9 L755.2,320.1 L757.3,321.1 L759.6,321.7 L761.8,322.0 L764.0,322.0 L766.1,321.6 L768.0,320.9 L769.6,319.9 L771.0,318.7 L772.0,317.2 L772.6,315.5 L772.9,313.7 L772.7,311.7 L772.2,309.8 L771.3,307.9 L770.0,306.1 L768.5,304.4Z" fill="none" stroke="#161616" stroke-width="1.3" stroke-linejoin="round" stroke-linecap="round"/>
</g>
<path d="M781.5,288.3 L779.0,286.2 L776.2,284.3 L773.2,282.7 L770.1,281.4 L767.0,280.4 L763.7,279.8 L760.6,279.6 L757.5,279.7 L754.5,280.1 L751.7,280.9 L749.2,282.1 L746.9,283.5 L744.9,285.3 L743.3,287.3 L742.1,289.5 L741.2,291.9 L740.8,294.5 L740.8,297.2 L741.2,299.9 L742.0,302.7 L743.3,305.4 L744.9,308.0 L746.8,310.5 L749.1,312.8 L751.6,315.0 L754.4,316.8 L757.3,318.4 L760.4,319.7 L763.6,320.7 L766.8,321.3 L770.0,321.5 L773.1,321.4 L776.1,321.0 L778.9,320.2 L781.4,319.0 L783.7,317.6 L785.6,315.8 L787.2,313.8 L788.5,311.6 L789.3,309.2 L789.7,306.6 L789.8,303.9 L789.3,301.2 L788.5,298.4 L787.3,295.7 L785.7,293.1 L783.8,290.6 L781.5,288.3Z" fill="none" stroke="#161616" stroke-width="1.85" stroke-linejoin="round" stroke-linecap="round"/>
<clipPath id="hc2"><path d="M447.7,541.1 L445.2,539.0 L442.4,537.1 L439.4,535.5 L436.3,534.2 L433.2,533.3 L429.9,532.6 L426.8,532.4 L423.7,532.5 L420.7,532.9 L417.9,533.7 L415.4,534.9 L413.1,536.3 L411.1,538.1 L409.5,540.1 L408.3,542.3 L407.4,544.8 L407.0,547.3 L407.0,550.0 L407.4,552.7 L408.2,555.5 L409.5,558.2 L411.1,560.8 L413.0,563.3 L415.3,565.6 L417.8,567.8 L420.6,569.6 L423.5,571.2 L426.6,572.5 L429.8,573.5 L433.0,574.1 L436.2,574.4 L439.3,574.3 L442.3,573.8 L445.1,573.0 L447.6,571.9 L449.9,570.4 L451.8,568.6 L453.4,566.6 L454.7,564.4 L455.5,562.0 L455.9,559.4 L456.0,556.7 L455.5,554.0 L454.7,551.2 L453.5,548.5 L451.9,545.9 L450.0,543.4 L447.7,541.1Z"/></clipPath>
<g clip-path="url(#hc2)">
<path d="M447.7,541.1 L445.2,539.0 L442.4,537.1 L439.4,535.5 L436.3,534.2 L433.2,533.3 L429.9,532.6 L426.8,532.4 L423.7,532.5 L420.7,532.9 L417.9,533.7 L415.4,534.9 L413.1,536.3 L411.1,538.1 L409.5,540.1 L408.3,542.3 L407.4,544.8 L407.0,547.3 L407.0,550.0 L407.4,552.7 L408.2,555.5 L409.5,558.2 L411.1,560.8 L413.0,563.3 L415.3,565.6 L417.8,567.8 L420.6,569.6 L423.5,571.2 L426.6,572.5 L429.8,573.5 L433.0,574.1 L436.2,574.4 L439.3,574.3 L442.3,573.8 L445.1,573.0 L447.6,571.9 L449.9,570.4 L451.8,568.6 L453.4,566.6 L454.7,564.4 L455.5,562.0 L455.9,559.4 L456.0,556.7 L455.5,554.0 L454.7,551.2 L453.5,548.5 L451.9,545.9 L450.0,543.4 L447.7,541.1Z" fill="#191919"/>
<path d="M454.3,565.2 L455.1,563.3 L448.8,575.4 L448.0,577.3Z" fill="#141414" stroke="#141414" stroke-width="0.6" stroke-linejoin="round" stroke-linecap="round"/>
<path d="M455.1,563.3 L455.7,561.4 L449.4,573.5 L448.8,575.4Z" fill="#222222" stroke="#222222" stroke-width="0.6" stroke-linejoin="round" stroke-linecap="round"/>
<path d="M455.7,561.4 L456.0,559.3 L449.7,571.4 L449.4,573.5Z" fill="#303030" stroke="#303030" stroke-width="0.6" stroke-linejoin="round" stroke-linecap="round"/>
<path d="M456.0,559.3 L456.0,557.1 L449.7,569.2 L449.7,571.4Z" fill="#3d3d3d" stroke="#3d3d3d" stroke-width="0.6" stroke-linejoin="round" stroke-linecap="round"/>
<path d="M456.0,557.1 L455.7,555.0 L449.4,567.1 L449.7,569.2Z" fill="#4a4a4a" stroke="#4a4a4a" stroke-width="0.6" stroke-linejoin="round" stroke-linecap="round"/>
<path d="M455.7,555.0 L455.2,552.8 L448.9,564.9 L449.4,567.1Z" fill="#565656" stroke="#565656" stroke-width="0.6" stroke-linejoin="round" stroke-linecap="round"/>
<path d="M455.2,552.8 L454.5,550.6 L448.2,562.7 L448.9,564.9Z" fill="#626262" stroke="#626262" stroke-width="0.6" stroke-linejoin="round" stroke-linecap="round"/>
<path d="M454.5,550.6 L453.4,548.4 L447.1,560.5 L448.2,562.7Z" fill="#6c6c6c" stroke="#6c6c6c" stroke-width="0.6" stroke-linejoin="round" stroke-linecap="round"/>
<path d="M453.4,548.4 L452.2,546.3 L445.9,558.4 L447.1,560.5Z" fill="#767676" stroke="#767676" stroke-width="0.6" stroke-linejoin="round" stroke-linecap="round"/>
<path d="M452.2,546.3 L450.7,544.3 L444.4,556.4 L445.9,558.4Z" fill="#7e7e7e" stroke="#7e7e7e" stroke-width="0.6" stroke-linejoin="round" stroke-linecap="round"/>
<path d="M450.7,544.3 L449.0,542.4 L442.7,554.5 L444.4,556.4Z" fill="#858585" stroke="#858585" stroke-width="0.6" stroke-linejoin="round" stroke-linecap="round"/>
<path d="M449.0,542.4 L447.1,540.5 L440.8,552.6 L442.7,554.5Z" fill="#8b8b8b" stroke="#8b8b8b" stroke-width="0.6" stroke-linejoin="round" stroke-linecap="round"/>
<path d="M447.1,540.5 L445.0,538.9 L438.7,551.0 L440.8,552.6Z" fill="#8f8f8f" stroke="#8f8f8f" stroke-width="0.6" stroke-linejoin="round" stroke-linecap="round"/>
<path d="M445.0,538.9 L442.8,537.4 L436.5,549.5 L438.7,551.0Z" fill="#929292" stroke="#929292" stroke-width="0.6" stroke-linejoin="round" stroke-linecap="round"/>
<path d="M442.8,537.4 L440.5,536.0 L434.2,548.1 L436.5,549.5Z" fill="#949494" stroke="#949494" stroke-width="0.6" stroke-linejoin="round" stroke-linecap="round"/>
<path d="M440.5,536.0 L438.1,534.9 L431.8,547.0 L434.2,548.1Z" fill="#949494" stroke="#949494" stroke-width="0.6" stroke-linejoin="round" stroke-linecap="round"/>
<path d="M438.1,534.9 L435.6,533.9 L429.3,546.0 L431.8,547.0Z" fill="#929292" stroke="#929292" stroke-width="0.6" stroke-linejoin="round" stroke-linecap="round"/>
<path d="M435.6,533.9 L433.0,533.2 L426.7,545.3 L429.3,546.0Z" fill="#8f8f8f" stroke="#8f8f8f" stroke-width="0.6" stroke-linejoin="round" stroke-linecap="round"/>
<path d="M433.0,533.2 L430.4,532.7 L424.1,544.8 L426.7,545.3Z" fill="#8b8b8b" stroke="#8b8b8b" stroke-width="0.6" stroke-linejoin="round" stroke-linecap="round"/>
<path d="M430.4,532.7 L427.9,532.4 L421.6,544.5 L424.1,544.8Z" fill="#858585" stroke="#858585" stroke-width="0.6" stroke-linejoin="round" stroke-linecap="round"/>
<path d="M427.9,532.4 L425.4,532.4 L419.1,544.5 L421.6,544.5Z" fill="#7e7e7e" stroke="#7e7e7e" stroke-width="0.6" stroke-linejoin="round" stroke-linecap="round"/>
<path d="M425.4,532.4 L422.9,532.5 L416.6,544.7 L419.1,544.5Z" fill="#767676" stroke="#767676" stroke-width="0.6" stroke-linejoin="round" stroke-linecap="round"/>
<path d="M422.9,532.5 L420.6,533.0 L414.3,545.1 L416.6,544.7Z" fill="#6c6c6c" stroke="#6c6c6c" stroke-width="0.6" stroke-linejoin="round" stroke-linecap="round"/>
<path d="M420.6,533.0 L418.3,533.6 L412.0,545.7 L414.3,545.1Z" fill="#626262" stroke="#626262" stroke-width="0.6" stroke-linejoin="round" stroke-linecap="round"/>
<path d="M418.3,533.6 L416.2,534.4 L409.9,546.5 L412.0,545.7Z" fill="#565656" stroke="#565656" stroke-width="0.6" stroke-linejoin="round" stroke-linecap="round"/>
<path d="M416.2,534.4 L414.3,535.5 L408.0,547.6 L409.9,546.5Z" fill="#4a4a4a" stroke="#4a4a4a" stroke-width="0.6" stroke-linejoin="round" stroke-linecap="round"/>
<path d="M414.3,535.5 L412.6,536.7 L406.3,548.8 L408.0,547.6Z" fill="#3d3d3d" stroke="#3d3d3d" stroke-width="0.6" stroke-linejoin="round" stroke-linecap="round"/>
<path d="M412.6,536.7 L411.1,538.2 L404.8,550.3 L406.3,548.8Z" fill="#303030" stroke="#303030" stroke-width="0.6" stroke-linejoin="round" stroke-linecap="round"/>
<path d="M411.1,538.2 L409.7,539.8 L403.5,551.9 L404.8,550.3Z" fill="#222222" stroke="#222222" stroke-width="0.6" stroke-linejoin="round" stroke-linecap="round"/>
<path d="M409.7,539.8 L408.7,541.5 L402.4,553.6 L403.5,551.9Z" fill="#141414" stroke="#141414" stroke-width="0.6" stroke-linejoin="round" stroke-linecap="round"/>
<path d="M447.7,541.1 L442.3,551.5" fill="none" stroke="#161616" stroke-width="1.2" stroke-linejoin="round" stroke-linecap="round"/>
<path d="M442.3,551.5 L439.8,549.3 L437.0,547.5 L434.0,545.9 L430.9,544.6 L427.8,543.6 L424.6,543.0 L421.4,542.7 L418.3,542.8 L415.3,543.3 L412.5,544.1 L410.0,545.2 L407.7,546.7 L405.7,548.5 L404.1,550.5 L402.9,552.7 L402.1,555.1 L401.6,557.7 L401.6,560.4 L402.0,563.1 L402.9,565.9 L404.1,568.6 L405.7,571.2 L407.6,573.7 L409.9,576.0 L412.4,578.1 L415.2,580.0 L418.1,581.6 L421.2,582.9 L424.4,583.9 L427.6,584.5 L430.8,584.7 L433.9,584.6 L436.9,584.2 L439.7,583.4 L442.2,582.2 L444.5,580.8 L446.4,579.0 L448.1,577.0 L449.3,574.8 L450.1,572.3 L450.6,569.8 L450.6,567.1 L450.2,564.4 L449.3,561.6 L448.1,558.9 L446.5,556.3 L444.6,553.8 L442.3,551.5Z" fill="#ababab" stroke="#161616" stroke-width="1.3" stroke-linejoin="round" stroke-linecap="round"/>
<clipPath id="tc2"><path d="M434.7,557.2 L432.9,555.8 L430.8,554.5 L428.7,553.6 L426.4,553.0 L424.2,552.7 L422.0,552.7 L419.9,553.0 L418.0,553.7 L416.4,554.7 L415.0,556.0 L414.0,557.5 L413.4,559.2 L413.1,561.0 L413.3,562.9 L413.8,564.9 L414.7,566.8 L415.9,568.6 L417.5,570.2 L419.3,571.7 L421.4,572.9 L423.5,573.9 L425.8,574.5 L428.0,574.8 L430.2,574.8 L432.3,574.4 L434.2,573.7 L435.8,572.8 L437.2,571.5 L438.2,570.0 L438.8,568.3 L439.1,566.5 L438.9,564.6 L438.4,562.6 L437.5,560.7 L436.2,558.9 L434.7,557.2Z"/></clipPath>
<g clip-path="url(#tc2)">
<path d="M434.7,557.2 L432.9,555.8 L430.8,554.5 L428.7,553.6 L426.4,553.0 L424.2,552.7 L422.0,552.7 L419.9,553.0 L418.0,553.7 L416.4,554.7 L415.0,556.0 L414.0,557.5 L413.4,559.2 L413.1,561.0 L413.3,562.9 L413.8,564.9 L414.7,566.8 L415.9,568.6 L417.5,570.2 L419.3,571.7 L421.4,572.9 L423.5,573.9 L425.8,574.5 L428.0,574.8 L430.2,574.8 L432.3,574.4 L434.2,573.7 L435.8,572.8 L437.2,571.5 L438.2,570.0 L438.8,568.3 L439.1,566.5 L438.9,564.6 L438.4,562.6 L437.5,560.7 L436.2,558.9 L434.7,557.2Z" fill="#111111"/>
<path d="M438.2,570.0 L438.7,568.8 L421.0,602.8 L420.5,604.0Z" fill="#161616" stroke="#161616" stroke-width="0.6" stroke-linejoin="round" stroke-linecap="round"/>
<path d="M438.7,568.8 L439.0,567.4 L421.3,601.4 L421.0,602.8Z" fill="#272727" stroke="#272727" stroke-width="0.6" stroke-linejoin="round" stroke-linecap="round"/>
<path d="M439.0,567.4 L439.1,566.0 L421.4,600.0 L421.3,601.4Z" fill="#383838" stroke="#383838" stroke-width="0.6" stroke-linejoin="round" stroke-linecap="round"/>
<path d="M439.1,566.0 L438.9,564.6 L421.2,598.6 L421.4,600.0Z" fill="#484848" stroke="#484848" stroke-width="0.6" stroke-linejoin="round" stroke-linecap="round"/>
<path d="M438.9,564.6 L438.6,563.1 L420.9,597.1 L421.2,598.6Z" fill="#585858" stroke="#585858" stroke-width="0.6" stroke-linejoin="round" stroke-linecap="round"/>
<path d="M438.6,563.1 L438.0,561.7 L420.3,595.7 L420.9,597.1Z" fill="#666666" stroke="#666666" stroke-width="0.6" stroke-linejoin="round" stroke-linecap="round"/>
<path d="M438.0,561.7 L437.2,560.3 L419.5,594.3 L420.3,595.7Z" fill="#727272" stroke="#727272" stroke-width="0.6" stroke-linejoin="round" stroke-linecap="round"/>
<path d="M437.2,560.3 L436.3,558.9 L418.6,592.9 L419.5,594.3Z" fill="#7d7d7d" stroke="#7d7d7d" stroke-width="0.6" stroke-linejoin="round" stroke-linecap="round"/>
<path d="M436.3,558.9 L435.1,557.7 L417.4,591.7 L418.6,592.9Z" fill="#868686" stroke="#868686" stroke-width="0.6" stroke-linejoin="round" stroke-linecap="round"/>
<path d="M435.1,557.7 L433.8,556.5 L416.1,590.5 L417.4,591.7Z" fill="#8d8d8d" stroke="#8d8d8d" stroke-width="0.6" stroke-linejoin="round" stroke-linecap="round"/>
<path d="M433.8,556.5 L432.4,555.5 L414.7,589.5 L416.1,590.5Z" fill="#919191" stroke="#919191" stroke-width="0.6" stroke-linejoin="round" stroke-linecap="round"/>
<path d="M432.4,555.5 L430.9,554.6 L413.2,588.6 L414.7,589.5Z" fill="#939393" stroke="#939393" stroke-width="0.6" stroke-linejoin="round" stroke-linecap="round"/>
<path d="M430.9,554.6 L429.2,553.8 L411.6,587.8 L413.2,588.6Z" fill="#939393" stroke="#939393" stroke-width="0.6" stroke-linejoin="round" stroke-linecap="round"/>
<path d="M429.2,553.8 L427.6,553.3 L409.9,587.3 L411.6,587.8Z" fill="#919191" stroke="#919191" stroke-width="0.6" stroke-linejoin="round" stroke-linecap="round"/>
<path d="M427.6,553.3 L425.9,552.9 L408.2,586.9 L409.9,587.3Z" fill="#8d8d8d" stroke="#8d8d8d" stroke-width="0.6" stroke-linejoin="round" stroke-linecap="round"/>
<path d="M425.9,552.9 L424.2,552.7 L406.5,586.7 L408.2,586.9Z" fill="#868686" stroke="#868686" stroke-width="0.6" stroke-linejoin="round" stroke-linecap="round"/>
<path d="M424.2,552.7 L422.5,552.6 L404.8,586.7 L406.5,586.7Z" fill="#7d7d7d" stroke="#7d7d7d" stroke-width="0.6" stroke-linejoin="round" stroke-linecap="round"/>
<path d="M422.5,552.6 L420.9,552.8 L403.2,586.8 L404.8,586.7Z" fill="#727272" stroke="#727272" stroke-width="0.6" stroke-linejoin="round" stroke-linecap="round"/>
<path d="M420.9,552.8 L419.4,553.2 L401.7,587.2 L403.2,586.8Z" fill="#666666" stroke="#666666" stroke-width="0.6" stroke-linejoin="round" stroke-linecap="round"/>
<path d="M419.4,553.2 L418.0,553.7 L400.3,587.7 L401.7,587.2Z" fill="#585858" stroke="#585858" stroke-width="0.6" stroke-linejoin="round" stroke-linecap="round"/>
<path d="M418.0,553.7 L416.8,554.4 L399.1,588.4 L400.3,587.7Z" fill="#484848" stroke="#484848" stroke-width="0.6" stroke-linejoin="round" stroke-linecap="round"/>
<path d="M416.8,554.4 L415.7,555.3 L398.0,589.3 L399.1,588.4Z" fill="#383838" stroke="#383838" stroke-width="0.6" stroke-linejoin="round" stroke-linecap="round"/>
<path d="M415.7,555.3 L414.7,556.3 L397.1,590.3 L398.0,589.3Z" fill="#272727" stroke="#272727" stroke-width="0.6" stroke-linejoin="round" stroke-linecap="round"/>
<path d="M414.7,556.3 L414.0,557.5 L396.3,591.5 L397.1,590.3Z" fill="#161616" stroke="#161616" stroke-width="0.6" stroke-linejoin="round" stroke-linecap="round"/>
<path d="M434.7,557.2 L417.0,591.2" fill="none" stroke="#161616" stroke-width="1.2" stroke-linejoin="round" stroke-linecap="round"/>
</g>
<path d="M434.7,557.2 L432.9,555.8 L430.8,554.5 L428.7,553.6 L426.4,553.0 L424.2,552.7 L422.0,552.7 L419.9,553.0 L418.0,553.7 L416.4,554.7 L415.0,556.0 L414.0,557.5 L413.4,559.2 L413.1,561.0 L413.3,562.9 L413.8,564.9 L414.7,566.8 L415.9,568.6 L417.5,570.2 L419.3,571.7 L421.4,572.9 L423.5,573.9 L425.8,574.5 L428.0,574.8 L430.2,574.8 L432.3,574.4 L434.2,573.7 L435.8,572.8 L437.2,571.5 L438.2,570.0 L438.8,568.3 L439.1,566.5 L438.9,564.6 L438.4,562.6 L437.5,560.7 L436.2,558.9 L434.7,557.2Z" fill="none" stroke="#161616" stroke-width="1.3" stroke-linejoin="round" stroke-linecap="round"/>
</g>
<path d="M447.7,541.1 L445.2,539.0 L442.4,537.1 L439.4,535.5 L436.3,534.2 L433.2,533.3 L429.9,532.6 L426.8,532.4 L423.7,532.5 L420.7,532.9 L417.9,533.7 L415.4,534.9 L413.1,536.3 L411.1,538.1 L409.5,540.1 L408.3,542.3 L407.4,544.8 L407.0,547.3 L407.0,550.0 L407.4,552.7 L408.2,555.5 L409.5,558.2 L411.1,560.8 L413.0,563.3 L415.3,565.6 L417.8,567.8 L420.6,569.6 L423.5,571.2 L426.6,572.5 L429.8,573.5 L433.0,574.1 L436.2,574.4 L439.3,574.3 L442.3,573.8 L445.1,573.0 L447.6,571.9 L449.9,570.4 L451.8,568.6 L453.4,566.6 L454.7,564.4 L455.5,562.0 L455.9,559.4 L456.0,556.7 L455.5,554.0 L454.7,551.2 L453.5,548.5 L451.9,545.9 L450.0,543.4 L447.7,541.1Z" fill="none" stroke="#161616" stroke-width="1.85" stroke-linejoin="round" stroke-linecap="round"/>
<clipPath id="hc3"><path d="M826.3,891.7 L823.7,889.6 L820.9,887.7 L818.0,886.1 L814.9,884.8 L811.7,883.9 L808.5,883.3 L805.3,883.0 L802.2,883.1 L799.3,883.5 L796.5,884.4 L793.9,885.5 L791.6,887.0 L789.7,888.7 L788.1,890.7 L786.8,892.9 L786.0,895.4 L785.6,897.9 L785.6,900.6 L786.0,903.4 L786.8,906.1 L788.0,908.8 L789.6,911.4 L791.6,913.9 L793.8,916.3 L796.4,918.4 L799.1,920.3 L802.1,921.9 L805.2,923.1 L808.4,924.1 L811.6,924.7 L814.8,925.0 L817.9,924.9 L820.8,924.4 L823.6,923.6 L826.2,922.5 L828.4,921.0 L830.4,919.3 L832.0,917.3 L833.2,915.0 L834.1,912.6 L834.5,910.0 L834.5,907.3 L834.1,904.6 L833.3,901.9 L832.1,899.2 L830.5,896.5 L828.5,894.0 L826.3,891.7Z"/></clipPath>
<g clip-path="url(#hc3)">
<path d="M826.3,891.7 L823.7,889.6 L820.9,887.7 L818.0,886.1 L814.9,884.8 L811.7,883.9 L808.5,883.3 L805.3,883.0 L802.2,883.1 L799.3,883.5 L796.5,884.4 L793.9,885.5 L791.6,887.0 L789.7,888.7 L788.1,890.7 L786.8,892.9 L786.0,895.4 L785.6,897.9 L785.6,900.6 L786.0,903.4 L786.8,906.1 L788.0,908.8 L789.6,911.4 L791.6,913.9 L793.8,916.3 L796.4,918.4 L799.1,920.3 L802.1,921.9 L805.2,923.1 L808.4,924.1 L811.6,924.7 L814.8,925.0 L817.9,924.9 L820.8,924.4 L823.6,923.6 L826.2,922.5 L828.4,921.0 L830.4,919.3 L832.0,917.3 L833.2,915.0 L834.1,912.6 L834.5,910.0 L834.5,907.3 L834.1,904.6 L833.3,901.9 L832.1,899.2 L830.5,896.5 L828.5,894.0 L826.3,891.7Z" fill="#191919"/>
<path d="M832.8,915.8 L833.7,914.0 L827.4,926.1 L826.5,927.9Z" fill="#141414" stroke="#141414" stroke-width="0.6" stroke-linejoin="round" stroke-linecap="round"/>
<path d="M833.7,914.0 L834.2,912.0 L827.9,924.1 L827.4,926.1Z" fill="#222222" stroke="#222222" stroke-width="0.6" stroke-linejoin="round" stroke-linecap="round"/>
<path d="M834.2,912.0 L834.5,909.9 L828.2,922.0 L827.9,924.1Z" fill="#303030" stroke="#303030" stroke-width="0.6" stroke-linejoin="round" stroke-linecap="round"/>
<path d="M834.5,909.9 L834.5,907.8 L828.2,919.9 L828.2,922.0Z" fill="#3d3d3d" stroke="#3d3d3d" stroke-width="0.6" stroke-linejoin="round" stroke-linecap="round"/>
<path d="M834.5,907.8 L834.3,905.6 L828.0,917.7 L828.2,919.9Z" fill="#4a4a4a" stroke="#4a4a4a" stroke-width="0.6" stroke-linejoin="round" stroke-linecap="round"/>
<path d="M834.3,905.6 L833.8,903.4 L827.5,915.5 L828.0,917.7Z" fill="#565656" stroke="#565656" stroke-width="0.6" stroke-linejoin="round" stroke-linecap="round"/>
<path d="M833.8,903.4 L833.0,901.2 L826.7,913.3 L827.5,915.5Z" fill="#626262" stroke="#626262" stroke-width="0.6" stroke-linejoin="round" stroke-linecap="round"/>
<path d="M833.0,901.2 L832.0,899.0 L825.7,911.1 L826.7,913.3Z" fill="#6c6c6c" stroke="#6c6c6c" stroke-width="0.6" stroke-linejoin="round" stroke-linecap="round"/>
<path d="M832.0,899.0 L830.7,896.9 L824.4,909.0 L825.7,911.1Z" fill="#767676" stroke="#767676" stroke-width="0.6" stroke-linejoin="round" stroke-linecap="round"/>
<path d="M830.7,896.9 L829.2,894.9 L822.9,907.0 L824.4,909.0Z" fill="#7e7e7e" stroke="#7e7e7e" stroke-width="0.6" stroke-linejoin="round" stroke-linecap="round"/>
<path d="M829.2,894.9 L827.5,893.0 L821.3,905.1 L822.9,907.0Z" fill="#858585" stroke="#858585" stroke-width="0.6" stroke-linejoin="round" stroke-linecap="round"/>
<path d="M827.5,893.0 L825.7,891.2 L819.4,903.3 L821.3,905.1Z" fill="#8b8b8b" stroke="#8b8b8b" stroke-width="0.6" stroke-linejoin="round" stroke-linecap="round"/>
<path d="M825.7,891.2 L823.6,889.5 L817.3,901.6 L819.4,903.3Z" fill="#8f8f8f" stroke="#8f8f8f" stroke-width="0.6" stroke-linejoin="round" stroke-linecap="round"/>
<path d="M823.6,889.5 L821.4,888.0 L815.1,900.1 L817.3,901.6Z" fill="#929292" stroke="#929292" stroke-width="0.6" stroke-linejoin="round" stroke-linecap="round"/>
<path d="M821.4,888.0 L819.0,886.7 L812.8,898.8 L815.1,900.1Z" fill="#949494" stroke="#949494" stroke-width="0.6" stroke-linejoin="round" stroke-linecap="round"/>
<path d="M819.0,886.7 L816.6,885.5 L810.3,897.6 L812.8,898.8Z" fill="#949494" stroke="#949494" stroke-width="0.6" stroke-linejoin="round" stroke-linecap="round"/>
<path d="M816.6,885.5 L814.1,884.6 L807.8,896.7 L810.3,897.6Z" fill="#929292" stroke="#929292" stroke-width="0.6" stroke-linejoin="round" stroke-linecap="round"/>
<path d="M814.1,884.6 L811.6,883.8 L805.3,895.9 L807.8,896.7Z" fill="#8f8f8f" stroke="#8f8f8f" stroke-width="0.6" stroke-linejoin="round" stroke-linecap="round"/>
<path d="M811.6,883.8 L809.0,883.3 L802.7,895.4 L805.3,895.9Z" fill="#8b8b8b" stroke="#8b8b8b" stroke-width="0.6" stroke-linejoin="round" stroke-linecap="round"/>
<path d="M809.0,883.3 L806.4,883.0 L800.1,895.2 L802.7,895.4Z" fill="#858585" stroke="#858585" stroke-width="0.6" stroke-linejoin="round" stroke-linecap="round"/>
<path d="M806.4,883.0 L803.9,883.0 L797.6,895.1 L800.1,895.2Z" fill="#7e7e7e" stroke="#7e7e7e" stroke-width="0.6" stroke-linejoin="round" stroke-linecap="round"/>
<path d="M803.9,883.0 L801.5,883.2 L795.2,895.3 L797.6,895.1Z" fill="#767676" stroke="#767676" stroke-width="0.6" stroke-linejoin="round" stroke-linecap="round"/>
<path d="M801.5,883.2 L799.1,883.6 L792.8,895.7 L795.2,895.3Z" fill="#6c6c6c" stroke="#6c6c6c" stroke-width="0.6" stroke-linejoin="round" stroke-linecap="round"/>
<path d="M799.1,883.6 L796.9,884.2 L790.6,896.3 L792.8,895.7Z" fill="#626262" stroke="#626262" stroke-width="0.6" stroke-linejoin="round" stroke-linecap="round"/>
<path d="M796.9,884.2 L794.8,885.1 L788.5,897.2 L790.6,896.3Z" fill="#565656" stroke="#565656" stroke-width="0.6" stroke-linejoin="round" stroke-linecap="round"/>
<path d="M794.8,885.1 L792.9,886.1 L786.6,898.2 L788.5,897.2Z" fill="#4a4a4a" stroke="#4a4a4a" stroke-width="0.6" stroke-linejoin="round" stroke-linecap="round"/>
<path d="M792.9,886.1 L791.1,887.4 L784.8,899.5 L786.6,898.2Z" fill="#3d3d3d" stroke="#3d3d3d" stroke-width="0.6" stroke-linejoin="round" stroke-linecap="round"/>
<path d="M791.1,887.4 L789.6,888.8 L783.3,900.9 L784.8,899.5Z" fill="#303030" stroke="#303030" stroke-width="0.6" stroke-linejoin="round" stroke-linecap="round"/>
<path d="M789.6,888.8 L788.3,890.4 L782.0,902.5 L783.3,900.9Z" fill="#222222" stroke="#222222" stroke-width="0.6" stroke-linejoin="round" stroke-linecap="round"/>
<path d="M788.3,890.4 L787.2,892.1 L780.9,904.2 L782.0,902.5Z" fill="#141414" stroke="#141414" stroke-width="0.6" stroke-linejoin="round" stroke-linecap="round"/>
<path d="M826.3,891.7 L820.9,902.1" fill="none" stroke="#161616" stroke-width="1.2" stroke-linejoin="round" stroke-linecap="round"/>
<path d="M820.9,902.1 L818.3,900.0 L815.5,898.1 L812.6,896.5 L809.5,895.2 L806.3,894.2 L803.1,893.6 L799.9,893.4 L796.8,893.5 L793.9,893.9 L791.1,894.7 L788.5,895.9 L786.3,897.3 L784.3,899.1 L782.7,901.1 L781.4,903.3 L780.6,905.7 L780.2,908.3 L780.2,911.0 L780.6,913.7 L781.4,916.5 L782.6,919.2 L784.2,921.8 L786.2,924.3 L788.4,926.6 L791.0,928.8 L793.7,930.6 L796.7,932.2 L799.8,933.5 L803.0,934.5 L806.2,935.1 L809.4,935.4 L812.5,935.3 L815.4,934.8 L818.2,934.0 L820.8,932.9 L823.0,931.4 L825.0,929.6 L826.6,927.6 L827.8,925.4 L828.7,923.0 L829.1,920.4 L829.1,917.7 L828.7,915.0 L827.9,912.2 L826.7,909.5 L825.1,906.9 L823.1,904.4 L820.9,902.1Z" fill="#ababab" stroke="#161616" stroke-width="1.3" stroke-linejoin="round" stroke-linecap="round"/>
<clipPath id="tc3"><path d="M813.2,907.9 L811.4,906.4 L809.4,905.2 L807.2,904.2 L805.0,903.6 L802.7,903.3 L800.5,903.3 L798.4,903.7 L796.5,904.4 L794.9,905.3 L793.6,906.6 L792.6,908.1 L791.9,909.8 L791.7,911.6 L791.8,913.5 L792.3,915.5 L793.2,917.4 L794.5,919.2 L796.1,920.9 L797.9,922.3 L799.9,923.6 L802.1,924.5 L804.3,925.1 L806.6,925.4 L808.8,925.4 L810.9,925.1 L812.7,924.4 L814.4,923.4 L815.7,922.1 L816.7,920.6 L817.4,918.9 L817.6,917.1 L817.5,915.2 L816.9,913.2 L816.0,911.3 L814.8,909.5 L813.2,907.9Z"/></clipPath>
<g clip-path="url(#tc3)">
<path d="M813.2,907.9 L811.4,906.4 L809.4,905.2 L807.2,904.2 L805.0,903.6 L802.7,903.3 L800.5,903.3 L798.4,903.7 L796.5,904.4 L794.9,905.3 L793.6,906.6 L792.6,908.1 L791.9,909.8 L791.7,911.6 L791.8,913.5 L792.3,915.5 L793.2,917.4 L794.5,919.2 L796.1,920.9 L797.9,922.3 L799.9,923.6 L802.1,924.5 L804.3,925.1 L806.6,925.4 L808.8,925.4 L810.9,925.1 L812.7,924.4 L814.4,923.4 L815.7,922.1 L816.7,920.6 L817.4,918.9 L817.6,917.1 L817.5,915.2 L816.9,913.2 L816.0,911.3 L814.8,909.5 L813.2,907.9Z" fill="#111111"/>
<path d="M816.7,920.6 L817.2,919.4 L799.5,953.4 L799.0,954.6Z" fill="#161616" stroke="#161616" stroke-width="0.6" stroke-linejoin="round" stroke-linecap="round"/>
<path d="M817.2,919.4 L817.5,918.0 L799.8,952.1 L799.5,953.4Z" fill="#272727" stroke="#272727" stroke-width="0.6" stroke-linejoin="round" stroke-linecap="round"/>
<path d="M817.5,918.0 L817.6,916.6 L799.9,950.7 L799.8,952.1Z" fill="#383838" stroke="#383838" stroke-width="0.6" stroke-linejoin="round" stroke-linecap="round"/>
<path d="M817.6,916.6 L817.5,915.2 L799.8,949.2 L799.9,950.7Z" fill="#484848" stroke="#484848" stroke-width="0.6" stroke-linejoin="round" stroke-linecap="round"/>
<path d="M817.5,915.2 L817.1,913.8 L799.4,947.8 L799.8,949.2Z" fill="#585858" stroke="#585858" stroke-width="0.6" stroke-linejoin="round" stroke-linecap="round"/>
<path d="M817.1,913.8 L816.5,912.3 L798.9,946.3 L799.4,947.8Z" fill="#666666" stroke="#666666" stroke-width="0.6" stroke-linejoin="round" stroke-linecap="round"/>
<path d="M816.5,912.3 L815.8,910.9 L798.1,944.9 L798.9,946.3Z" fill="#727272" stroke="#727272" stroke-width="0.6" stroke-linejoin="round" stroke-linecap="round"/>
<path d="M815.8,910.9 L814.8,909.6 L797.1,943.6 L798.1,944.9Z" fill="#7d7d7d" stroke="#7d7d7d" stroke-width="0.6" stroke-linejoin="round" stroke-linecap="round"/>
<path d="M814.8,909.6 L813.7,908.3 L796.0,942.3 L797.1,943.6Z" fill="#868686" stroke="#868686" stroke-width="0.6" stroke-linejoin="round" stroke-linecap="round"/>
<path d="M813.7,908.3 L812.4,907.1 L794.7,941.1 L796.0,942.3Z" fill="#8d8d8d" stroke="#8d8d8d" stroke-width="0.6" stroke-linejoin="round" stroke-linecap="round"/>
<path d="M812.4,907.1 L810.9,906.1 L793.3,940.1 L794.7,941.1Z" fill="#919191" stroke="#919191" stroke-width="0.6" stroke-linejoin="round" stroke-linecap="round"/>
<path d="M810.9,906.1 L809.4,905.2 L791.7,939.2 L793.3,940.1Z" fill="#939393" stroke="#939393" stroke-width="0.6" stroke-linejoin="round" stroke-linecap="round"/>
<path d="M809.4,905.2 L807.8,904.4 L790.1,938.5 L791.7,939.2Z" fill="#939393" stroke="#939393" stroke-width="0.6" stroke-linejoin="round" stroke-linecap="round"/>
<path d="M807.8,904.4 L806.1,903.9 L788.4,937.9 L790.1,938.5Z" fill="#919191" stroke="#919191" stroke-width="0.6" stroke-linejoin="round" stroke-linecap="round"/>
<path d="M806.1,903.9 L804.4,903.5 L786.7,937.5 L788.4,937.9Z" fill="#8d8d8d" stroke="#8d8d8d" stroke-width="0.6" stroke-linejoin="round" stroke-linecap="round"/>
<path d="M804.4,903.5 L802.7,903.3 L785.1,937.3 L786.7,937.5Z" fill="#868686" stroke="#868686" stroke-width="0.6" stroke-linejoin="round" stroke-linecap="round"/>
<path d="M802.7,903.3 L801.1,903.3 L783.4,937.3 L785.1,937.3Z" fill="#7d7d7d" stroke="#7d7d7d" stroke-width="0.6" stroke-linejoin="round" stroke-linecap="round"/>
<path d="M801.1,903.3 L799.5,903.4 L781.8,937.4 L783.4,937.3Z" fill="#727272" stroke="#727272" stroke-width="0.6" stroke-linejoin="round" stroke-linecap="round"/>
<path d="M799.5,903.4 L798.0,903.8 L780.3,937.8 L781.8,937.4Z" fill="#666666" stroke="#666666" stroke-width="0.6" stroke-linejoin="round" stroke-linecap="round"/>
<path d="M798.0,903.8 L796.6,904.3 L778.9,938.3 L780.3,937.8Z" fill="#585858" stroke="#585858" stroke-width="0.6" stroke-linejoin="round" stroke-linecap="round"/>
<path d="M796.6,904.3 L795.3,905.1 L777.6,939.1 L778.9,938.3Z" fill="#484848" stroke="#484848" stroke-width="0.6" stroke-linejoin="round" stroke-linecap="round"/>
<path d="M795.3,905.1 L794.2,905.9 L776.5,939.9 L777.6,939.1Z" fill="#383838" stroke="#383838" stroke-width="0.6" stroke-linejoin="round" stroke-linecap="round"/>
<path d="M794.2,905.9 L793.3,906.9 L775.6,941.0 L776.5,939.9Z" fill="#272727" stroke="#272727" stroke-width="0.6" stroke-linejoin="round" stroke-linecap="round"/>
<path d="M793.3,906.9 L792.6,908.1 L774.9,942.1 L775.6,941.0Z" fill="#161616" stroke="#161616" stroke-width="0.6" stroke-linejoin="round" stroke-linecap="round"/>
<path d="M813.2,907.9 L795.5,941.9" fill="none" stroke="#161616" stroke-width="1.2" stroke-linejoin="round" stroke-linecap="round"/>
</g>
<path d="M813.2,907.9 L811.4,906.4 L809.4,905.2 L807.2,904.2 L805.0,903.6 L802.7,903.3 L800.5,903.3 L798.4,903.7 L796.5,904.4 L794.9,905.3 L793.6,906.6 L792.6,908.1 L791.9,909.8 L791.7,911.6 L791.8,913.5 L792.3,915.5 L793.2,917.4 L794.5,919.2 L796.1,920.9 L797.9,922.3 L799.9,923.6 L802.1,924.5 L804.3,925.1 L806.6,925.4 L808.8,925.4 L810.9,925.1 L812.7,924.4 L814.4,923.4 L815.7,922.1 L816.7,920.6 L817.4,918.9 L817.6,917.1 L817.5,915.2 L816.9,913.2 L816.0,911.3 L814.8,909.5 L813.2,907.9Z" fill="none" stroke="#161616" stroke-width="1.3" stroke-linejoin="round" stroke-linecap="round"/>
</g>
<path d="M826.3,891.7 L823.7,889.6 L820.9,887.7 L818.0,886.1 L814.9,884.8 L811.7,883.9 L808.5,883.3 L805.3,883.0 L802.2,883.1 L799.3,883.5 L796.5,884.4 L793.9,885.5 L791.6,887.0 L789.7,888.7 L788.1,890.7 L786.8,892.9 L786.0,895.4 L785.6,897.9 L785.6,900.6 L786.0,903.4 L786.8,906.1 L788.0,908.8 L789.6,911.4 L791.6,913.9 L793.8,916.3 L796.4,918.4 L799.1,920.3 L802.1,921.9 L805.2,923.1 L808.4,924.1 L811.6,924.7 L814.8,925.0 L817.9,924.9 L820.8,924.4 L823.6,923.6 L826.2,922.5 L828.4,921.0 L830.4,919.3 L832.0,917.3 L833.2,915.0 L834.1,912.6 L834.5,910.0 L834.5,907.3 L834.1,904.6 L833.3,901.9 L832.1,899.2 L830.5,896.5 L828.5,894.0 L826.3,891.7Z" fill="none" stroke="#161616" stroke-width="1.85" stroke-linejoin="round" stroke-linecap="round"/>
<clipPath id="hc4"><path d="M1160.1,638.9 L1157.5,636.8 L1154.7,634.9 L1151.8,633.3 L1148.7,632.0 L1145.5,631.1 L1142.3,630.4 L1139.1,630.2 L1136.0,630.3 L1133.1,630.7 L1130.3,631.5 L1127.7,632.7 L1125.4,634.1 L1123.5,635.9 L1121.9,637.9 L1120.6,640.1 L1119.8,642.6 L1119.4,645.1 L1119.4,647.8 L1119.8,650.6 L1120.6,653.3 L1121.8,656.0 L1123.4,658.6 L1125.4,661.1 L1127.6,663.5 L1130.2,665.6 L1132.9,667.4 L1135.9,669.0 L1139.0,670.3 L1142.2,671.3 L1145.4,671.9 L1148.6,672.2 L1151.7,672.1 L1154.6,671.6 L1157.4,670.8 L1160.0,669.7 L1162.2,668.2 L1164.2,666.5 L1165.8,664.5 L1167.0,662.2 L1167.9,659.8 L1168.3,657.2 L1168.3,654.5 L1167.9,651.8 L1167.1,649.1 L1165.9,646.3 L1164.3,643.7 L1162.3,641.2 L1160.1,638.9Z"/></clipPath>
<g clip-path="url(#hc4)">
<path d="M1160.1,638.9 L1157.5,636.8 L1154.7,634.9 L1151.8,633.3 L1148.7,632.0 L1145.5,631.1 L1142.3,630.4 L1139.1,630.2 L1136.0,630.3 L1133.1,630.7 L1130.3,631.5 L1127.7,632.7 L1125.4,634.1 L1123.5,635.9 L1121.9,637.9 L1120.6,640.1 L1119.8,642.6 L1119.4,645.1 L1119.4,647.8 L1119.8,650.6 L1120.6,653.3 L1121.8,656.0 L1123.4,658.6 L1125.4,661.1 L1127.6,663.5 L1130.2,665.6 L1132.9,667.4 L1135.9,669.0 L1139.0,670.3 L1142.2,671.3 L1145.4,671.9 L1148.6,672.2 L1151.7,672.1 L1154.6,671.6 L1157.4,670.8 L1160.0,669.7 L1162.2,668.2 L1164.2,666.5 L1165.8,664.5 L1167.0,662.2 L1167.9,659.8 L1168.3,657.2 L1168.3,654.5 L1167.9,651.8 L1167.1,649.1 L1165.9,646.3 L1164.3,643.7 L1162.3,641.2 L1160.1,638.9Z" fill="#191919"/>
<path d="M1166.6,663.0 L1167.5,661.2 L1161.2,673.3 L1160.3,675.1Z" fill="#141414" stroke="#141414" stroke-width="0.6" stroke-linejoin="round" stroke-linecap="round"/>
<path d="M1167.5,661.2 L1168.0,659.2 L1161.7,671.3 L1161.2,673.3Z" fill="#222222" stroke="#222222" stroke-width="0.6" stroke-linejoin="round" stroke-linecap="round"/>
<path d="M1168.0,659.2 L1168.3,657.1 L1162.0,669.2 L1161.7,671.3Z" fill="#303030" stroke="#303030" stroke-width="0.6" stroke-linejoin="round" stroke-linecap="round"/>
<path d="M1168.3,657.1 L1168.3,655.0 L1162.0,667.1 L1162.0,669.2Z" fill="#3d3d3d" stroke="#3d3d3d" stroke-width="0.6" stroke-linejoin="round" stroke-linecap="round"/>
<path d="M1168.3,655.0 L1168.1,652.8 L1161.8,664.9 L1162.0,667.1Z" fill="#4a4a4a" stroke="#4a4a4a" stroke-width="0.6" stroke-linejoin="round" stroke-linecap="round"/>
<path d="M1168.1,652.8 L1167.6,650.6 L1161.3,662.7 L1161.8,664.9Z" fill="#565656" stroke="#565656" stroke-width="0.6" stroke-linejoin="round" stroke-linecap="round"/>
<path d="M1167.6,650.6 L1166.8,648.4 L1160.5,660.5 L1161.3,662.7Z" fill="#626262" stroke="#626262" stroke-width="0.6" stroke-linejoin="round" stroke-linecap="round"/>
<path d="M1166.8,648.4 L1165.8,646.2 L1159.5,658.3 L1160.5,660.5Z" fill="#6c6c6c" stroke="#6c6c6c" stroke-width="0.6" stroke-linejoin="round" stroke-linecap="round"/>
<path d="M1165.8,646.2 L1164.5,644.1 L1158.2,656.2 L1159.5,658.3Z" fill="#767676" stroke="#767676" stroke-width="0.6" stroke-linejoin="round" stroke-linecap="round"/>
<path d="M1164.5,644.1 L1163.0,642.1 L1156.7,654.2 L1158.2,656.2Z" fill="#7e7e7e" stroke="#7e7e7e" stroke-width="0.6" stroke-linejoin="round" stroke-linecap="round"/>
<path d="M1163.0,642.1 L1161.3,640.2 L1155.1,652.3 L1156.7,654.2Z" fill="#858585" stroke="#858585" stroke-width="0.6" stroke-linejoin="round" stroke-linecap="round"/>
<path d="M1161.3,640.2 L1159.5,638.4 L1153.2,650.5 L1155.1,652.3Z" fill="#8b8b8b" stroke="#8b8b8b" stroke-width="0.6" stroke-linejoin="round" stroke-linecap="round"/>
<path d="M1159.5,638.4 L1157.4,636.7 L1151.1,648.8 L1153.2,650.5Z" fill="#8f8f8f" stroke="#8f8f8f" stroke-width="0.6" stroke-linejoin="round" stroke-linecap="round"/>
<path d="M1157.4,636.7 L1155.2,635.2 L1148.9,647.3 L1151.1,648.8Z" fill="#929292" stroke="#929292" stroke-width="0.6" stroke-linejoin="round" stroke-linecap="round"/>
<path d="M1155.2,635.2 L1152.8,633.8 L1146.6,645.9 L1148.9,647.3Z" fill="#949494" stroke="#949494" stroke-width="0.6" stroke-linejoin="round" stroke-linecap="round"/>
<path d="M1152.8,633.8 L1150.4,632.7 L1144.1,644.8 L1146.6,645.9Z" fill="#949494" stroke="#949494" stroke-width="0.6" stroke-linejoin="round" stroke-linecap="round"/>
<path d="M1150.4,632.7 L1147.9,631.8 L1141.6,643.9 L1144.1,644.8Z" fill="#929292" stroke="#929292" stroke-width="0.6" stroke-linejoin="round" stroke-linecap="round"/>
<path d="M1147.9,631.8 L1145.4,631.0 L1139.1,643.1 L1141.6,643.9Z" fill="#8f8f8f" stroke="#8f8f8f" stroke-width="0.6" stroke-linejoin="round" stroke-linecap="round"/>
<path d="M1145.4,631.0 L1142.8,630.5 L1136.5,642.6 L1139.1,643.1Z" fill="#8b8b8b" stroke="#8b8b8b" stroke-width="0.6" stroke-linejoin="round" stroke-linecap="round"/>
<path d="M1142.8,630.5 L1140.2,630.2 L1133.9,642.3 L1136.5,642.6Z" fill="#858585" stroke="#858585" stroke-width="0.6" stroke-linejoin="round" stroke-linecap="round"/>
<path d="M1140.2,630.2 L1137.7,630.2 L1131.4,642.3 L1133.9,642.3Z" fill="#7e7e7e" stroke="#7e7e7e" stroke-width="0.6" stroke-linejoin="round" stroke-linecap="round"/>
<path d="M1137.7,630.2 L1135.3,630.4 L1129.0,642.5 L1131.4,642.3Z" fill="#767676" stroke="#767676" stroke-width="0.6" stroke-linejoin="round" stroke-linecap="round"/>
<path d="M1135.3,630.4 L1132.9,630.8 L1126.6,642.9 L1129.0,642.5Z" fill="#6c6c6c" stroke="#6c6c6c" stroke-width="0.6" stroke-linejoin="round" stroke-linecap="round"/>
<path d="M1132.9,630.8 L1130.7,631.4 L1124.4,643.5 L1126.6,642.9Z" fill="#626262" stroke="#626262" stroke-width="0.6" stroke-linejoin="round" stroke-linecap="round"/>
<path d="M1130.7,631.4 L1128.6,632.2 L1122.3,644.3 L1124.4,643.5Z" fill="#565656" stroke="#565656" stroke-width="0.6" stroke-linejoin="round" stroke-linecap="round"/>
<path d="M1128.6,632.2 L1126.7,633.3 L1120.4,645.4 L1122.3,644.3Z" fill="#4a4a4a" stroke="#4a4a4a" stroke-width="0.6" stroke-linejoin="round" stroke-linecap="round"/>
<path d="M1126.7,633.3 L1124.9,634.5 L1118.6,646.6 L1120.4,645.4Z" fill="#3d3d3d" stroke="#3d3d3d" stroke-width="0.6" stroke-linejoin="round" stroke-linecap="round"/>
<path d="M1124.9,634.5 L1123.4,636.0 L1117.1,648.1 L1118.6,646.6Z" fill="#303030" stroke="#303030" stroke-width="0.6" stroke-linejoin="round" stroke-linecap="round"/>
<path d="M1123.4,636.0 L1122.1,637.6 L1115.8,649.7 L1117.1,648.1Z" fill="#222222" stroke="#222222" stroke-width="0.6" stroke-linejoin="round" stroke-linecap="round"/>
<path d="M1122.1,637.6 L1121.0,639.3 L1114.7,651.4 L1115.8,649.7Z" fill="#141414" stroke="#141414" stroke-width="0.6" stroke-linejoin="round" stroke-linecap="round"/>
<path d="M1160.1,638.9 L1154.7,649.3" fill="none" stroke="#161616" stroke-width="1.2" stroke-linejoin="round" stroke-linecap="round"/>
<path d="M1154.7,649.3 L1152.1,647.2 L1149.3,645.3 L1146.4,643.7 L1143.3,642.4 L1140.1,641.4 L1136.9,640.8 L1133.7,640.6 L1130.6,640.7 L1127.7,641.1 L1124.9,641.9 L1122.3,643.1 L1120.1,644.5 L1118.1,646.3 L1116.5,648.3 L1115.2,650.5 L1114.4,652.9 L1114.0,655.5 L1114.0,658.2 L1114.4,660.9 L1115.2,663.7 L1116.4,666.4 L1118.0,669.0 L1120.0,671.5 L1122.2,673.8 L1124.8,676.0 L1127.5,677.8 L1130.5,679.4 L1133.6,680.7 L1136.8,681.7 L1140.0,682.3 L1143.2,682.5 L1146.3,682.4 L1149.2,682.0 L1152.0,681.2 L1154.6,680.0 L1156.8,678.6 L1158.8,676.8 L1160.4,674.8 L1161.6,672.6 L1162.5,670.2 L1162.9,667.6 L1162.9,664.9 L1162.5,662.2 L1161.7,659.4 L1160.5,656.7 L1158.9,654.1 L1156.9,651.6 L1154.7,649.3Z" fill="#ababab" stroke="#161616" stroke-width="1.3" stroke-linejoin="round" stroke-linecap="round"/>
<clipPath id="tc4"><path d="M1147.0,655.1 L1145.2,653.6 L1143.2,652.4 L1141.0,651.4 L1138.8,650.8 L1136.5,650.5 L1134.3,650.5 L1132.2,650.9 L1130.3,651.5 L1128.7,652.5 L1127.4,653.8 L1126.4,655.3 L1125.7,657.0 L1125.5,658.8 L1125.6,660.7 L1126.1,662.7 L1127.0,664.6 L1128.3,666.4 L1129.9,668.1 L1131.7,669.5 L1133.7,670.7 L1135.9,671.7 L1138.1,672.3 L1140.4,672.6 L1142.6,672.6 L1144.7,672.2 L1146.5,671.6 L1148.2,670.6 L1149.5,669.3 L1150.5,667.8 L1151.2,666.1 L1151.4,664.3 L1151.3,662.4 L1150.7,660.4 L1149.8,658.5 L1148.6,656.7 L1147.0,655.1Z"/></clipPath>
<g clip-path="url(#tc4)">
<path d="M1147.0,655.1 L1145.2,653.6 L1143.2,652.4 L1141.0,651.4 L1138.8,650.8 L1136.5,650.5 L1134.3,650.5 L1132.2,650.9 L1130.3,651.5 L1128.7,652.5 L1127.4,653.8 L1126.4,655.3 L1125.7,657.0 L1125.5,658.8 L1125.6,660.7 L1126.1,662.7 L1127.0,664.6 L1128.3,666.4 L1129.9,668.1 L1131.7,669.5 L1133.7,670.7 L1135.9,671.7 L1138.1,672.3 L1140.4,672.6 L1142.6,672.6 L1144.7,672.2 L1146.5,671.6 L1148.2,670.6 L1149.5,669.3 L1150.5,667.8 L1151.2,666.1 L1151.4,664.3 L1151.3,662.4 L1150.7,660.4 L1149.8,658.5 L1148.6,656.7 L1147.0,655.1Z" fill="#111111"/>
<path d="M1150.5,667.8 L1151.0,666.6 L1133.3,700.6 L1132.8,701.8Z" fill="#161616" stroke="#161616" stroke-width="0.6" stroke-linejoin="round" stroke-linecap="round"/>
<path d="M1151.0,666.6 L1151.3,665.2 L1133.6,699.2 L1133.3,700.6Z" fill="#272727" stroke="#272727" stroke-width="0.6" stroke-linejoin="round" stroke-linecap="round"/>
<path d="M1151.3,665.2 L1151.4,663.8 L1133.7,697.8 L1133.6,699.2Z" fill="#383838" stroke="#383838" stroke-width="0.6" stroke-linejoin="round" stroke-linecap="round"/>
<path d="M1151.4,663.8 L1151.3,662.4 L1133.6,696.4 L1133.7,697.8Z" fill="#484848" stroke="#484848" stroke-width="0.6" stroke-linejoin="round" stroke-linecap="round"/>
<path d="M1151.3,662.4 L1150.9,660.9 L1133.2,695.0 L1133.6,696.4Z" fill="#585858" stroke="#585858" stroke-width="0.6" stroke-linejoin="round" stroke-linecap="round"/>
<path d="M1150.9,660.9 L1150.3,659.5 L1132.7,693.5 L1133.2,695.0Z" fill="#666666" stroke="#666666" stroke-width="0.6" stroke-linejoin="round" stroke-linecap="round"/>
<path d="M1150.3,659.5 L1149.6,658.1 L1131.9,692.1 L1132.7,693.5Z" fill="#727272" stroke="#727272" stroke-width="0.6" stroke-linejoin="round" stroke-linecap="round"/>
<path d="M1149.6,658.1 L1148.6,656.7 L1130.9,690.8 L1131.9,692.1Z" fill="#7d7d7d" stroke="#7d7d7d" stroke-width="0.6" stroke-linejoin="round" stroke-linecap="round"/>
<path d="M1148.6,656.7 L1147.5,655.5 L1129.8,689.5 L1130.9,690.8Z" fill="#868686" stroke="#868686" stroke-width="0.6" stroke-linejoin="round" stroke-linecap="round"/>
<path d="M1147.5,655.5 L1146.2,654.3 L1128.5,688.3 L1129.8,689.5Z" fill="#8d8d8d" stroke="#8d8d8d" stroke-width="0.6" stroke-linejoin="round" stroke-linecap="round"/>
<path d="M1146.2,654.3 L1144.7,653.3 L1127.1,687.3 L1128.5,688.3Z" fill="#919191" stroke="#919191" stroke-width="0.6" stroke-linejoin="round" stroke-linecap="round"/>
<path d="M1144.7,653.3 L1143.2,652.4 L1125.5,686.4 L1127.1,687.3Z" fill="#939393" stroke="#939393" stroke-width="0.6" stroke-linejoin="round" stroke-linecap="round"/>
<path d="M1143.2,652.4 L1141.6,651.6 L1123.9,685.6 L1125.5,686.4Z" fill="#939393" stroke="#939393" stroke-width="0.6" stroke-linejoin="round" stroke-linecap="round"/>
<path d="M1141.6,651.6 L1139.9,651.1 L1122.2,685.1 L1123.9,685.6Z" fill="#919191" stroke="#919191" stroke-width="0.6" stroke-linejoin="round" stroke-linecap="round"/>
<path d="M1139.9,651.1 L1138.2,650.7 L1120.5,684.7 L1122.2,685.1Z" fill="#8d8d8d" stroke="#8d8d8d" stroke-width="0.6" stroke-linejoin="round" stroke-linecap="round"/>
<path d="M1138.2,650.7 L1136.5,650.5 L1118.9,684.5 L1120.5,684.7Z" fill="#868686" stroke="#868686" stroke-width="0.6" stroke-linejoin="round" stroke-linecap="round"/>
<path d="M1136.5,650.5 L1134.9,650.5 L1117.2,684.5 L1118.9,684.5Z" fill="#7d7d7d" stroke="#7d7d7d" stroke-width="0.6" stroke-linejoin="round" stroke-linecap="round"/>
<path d="M1134.9,650.5 L1133.3,650.6 L1115.6,684.6 L1117.2,684.5Z" fill="#727272" stroke="#727272" stroke-width="0.6" stroke-linejoin="round" stroke-linecap="round"/>
<path d="M1133.3,650.6 L1131.8,651.0 L1114.1,685.0 L1115.6,684.6Z" fill="#666666" stroke="#666666" stroke-width="0.6" stroke-linejoin="round" stroke-linecap="round"/>
<path d="M1131.8,651.0 L1130.4,651.5 L1112.7,685.5 L1114.1,685.0Z" fill="#585858" stroke="#585858" stroke-width="0.6" stroke-linejoin="round" stroke-linecap="round"/>
<path d="M1130.4,651.5 L1129.1,652.2 L1111.4,686.3 L1112.7,685.5Z" fill="#484848" stroke="#484848" stroke-width="0.6" stroke-linejoin="round" stroke-linecap="round"/>
<path d="M1129.1,652.2 L1128.0,653.1 L1110.3,687.1 L1111.4,686.3Z" fill="#383838" stroke="#383838" stroke-width="0.6" stroke-linejoin="round" stroke-linecap="round"/>
<path d="M1128.0,653.1 L1127.1,654.1 L1109.4,688.1 L1110.3,687.1Z" fill="#272727" stroke="#272727" stroke-width="0.6" stroke-linejoin="round" stroke-linecap="round"/>
<path d="M1127.1,654.1 L1126.4,655.3 L1108.7,689.3 L1109.4,688.1Z" fill="#161616" stroke="#161616" stroke-width="0.6" stroke-linejoin="round" stroke-linecap="round"/>
<path d="M1147.0,655.1 L1129.3,689.1" fill="none" stroke="#161616" stroke-width="1.2" stroke-linejoin="round" stroke-linecap="round"/>
</g>
<path d="M1147.0,655.1 L1145.2,653.6 L1143.2,652.4 L1141.0,651.4 L1138.8,650.8 L1136.5,650.5 L1134.3,650.5 L1132.2,650.9 L1130.3,651.5 L1128.7,652.5 L1127.4,653.8 L1126.4,655.3 L1125.7,657.0 L1125.5,658.8 L1125.6,660.7 L1126.1,662.7 L1127.0,664.6 L1128.3,666.4 L1129.9,668.1 L1131.7,669.5 L1133.7,670.7 L1135.9,671.7 L1138.1,672.3 L1140.4,672.6 L1142.6,672.6 L1144.7,672.2 L1146.5,671.6 L1148.2,670.6 L1149.5,669.3 L1150.5,667.8 L1151.2,666.1 L1151.4,664.3 L1151.3,662.4 L1150.7,660.4 L1149.8,658.5 L1148.6,656.7 L1147.0,655.1Z" fill="none" stroke="#161616" stroke-width="1.3" stroke-linejoin="round" stroke-linecap="round"/>
</g>
<path d="M1160.1,638.9 L1157.5,636.8 L1154.7,634.9 L1151.8,633.3 L1148.7,632.0 L1145.5,631.1 L1142.3,630.4 L1139.1,630.2 L1136.0,630.3 L1133.1,630.7 L1130.3,631.5 L1127.7,632.7 L1125.4,634.1 L1123.5,635.9 L1121.9,637.9 L1120.6,640.1 L1119.8,642.6 L1119.4,645.1 L1119.4,647.8 L1119.8,650.6 L1120.6,653.3 L1121.8,656.0 L1123.4,658.6 L1125.4,661.1 L1127.6,663.5 L1130.2,665.6 L1132.9,667.4 L1135.9,669.0 L1139.0,670.3 L1142.2,671.3 L1145.4,671.9 L1148.6,672.2 L1151.7,672.1 L1154.6,671.6 L1157.4,670.8 L1160.0,669.7 L1162.2,668.2 L1164.2,666.5 L1165.8,664.5 L1167.0,662.2 L1167.9,659.8 L1168.3,657.2 L1168.3,654.5 L1167.9,651.8 L1167.1,649.1 L1165.9,646.3 L1164.3,643.7 L1162.3,641.2 L1160.1,638.9Z" fill="none" stroke="#161616" stroke-width="1.85" stroke-linejoin="round" stroke-linecap="round"/>
<path d="M1010.2,433.8 L1003.5,427.7 L996.6,421.8 L989.7,415.9 L982.6,410.3 L975.3,404.7 L967.9,399.3 L960.4,394.0 L952.8,388.9 L945.1,383.9 L937.3,379.0 L929.3,374.3 L921.3,369.8 L913.2,365.4 L904.9,361.2 L896.7,357.2 L888.3,353.3 L879.8,349.6 L871.3,346.0 L862.8,342.7 L854.2,339.5 L845.5,336.5 L836.8,333.7 L828.1,331.0 L819.3,328.6 L810.6,326.3 L801.8,324.2 L793.0,322.4 L784.2,320.7 L775.4,319.2 L766.6,317.9 L757.8,316.8 L749.0,315.8 L740.3,315.1 L731.6,314.6 L722.9,314.3 L714.3,314.2 L705.7,314.2 L697.2,314.5 L688.8,315.0 L680.4,315.6 L672.1,316.5 L663.8,317.5 L655.7,318.8 L647.6,320.2 L639.7,321.9 L631.8,323.7 L624.1,325.7 L616.4,327.9 L608.9,330.3 L601.5,332.9 L594.3,335.7 L587.1,338.6 L580.1,341.8 L573.3,345.1 L566.5,348.6 L560.0,352.2 L553.6,356.1 L547.3,360.1 L541.3,364.2 L535.3,368.6 L529.6,373.1 L524.0,377.7 L518.7,382.5 L513.5,387.5 L508.5,392.6 L503.6,397.8 L499.0,403.2 L494.6,408.7 L490.4,414.4 L486.4,420.1 L482.5,426.0 L478.9,432.1 L475.5,438.2 L472.4,444.5 L469.4,450.8 L466.7,457.3 L464.1,463.9 L461.8,470.5 L459.8,477.3 L457.9,484.1 L456.3,491.1 L454.9,498.0 L453.7,505.1 L452.8,512.2 L452.0,519.4 L451.6,526.7 L451.3,534.0 L451.3,541.3 L451.5,548.7 L451.9,556.2 L452.6,563.6 L453.5,571.1 L454.6,578.6 L456.0,586.2 L457.5,593.7 L459.4,601.2 L461.4,608.8 L463.6,616.3 L466.1,623.8 L468.8,631.4 L471.7,638.8 L474.9,646.3 L478.2,653.8 L481.8,661.2 L485.5,668.5 L489.5,675.8 L493.7,683.1 L498.1,690.3 L502.7,697.5 L507.4,704.5 L512.4,711.6 L517.6,718.5 L522.9,725.4 L528.4,732.1 L534.1,738.8 L540.0,745.4 L546.1,751.9 L552.3,758.3 L558.6,764.6 L565.2,770.8 L571.9,776.8 L578.7,782.8 L585.7,788.6 L592.8,794.3 L600.0,799.8 L607.4,805.3 L614.9,810.5 L622.5,815.7 L630.2,820.7 L638.1,825.5 L646.0,830.2 L654.0,834.7 L662.2,839.1 L670.4,843.3 L678.7,847.4 L687.0,851.3 L695.5,855.0 L704.0,858.5 L712.5,861.9 L721.1,865.1 L729.8,868.1 L738.5,870.9 L747.2,873.5 L756.0,876.0 L764.7,878.2 L773.5,880.3 L782.3,882.2 L791.2,883.9 L800.0,885.4 L808.8,886.7 L817.5,887.8 L826.3,888.7 L835.0,889.4 L843.7,889.9 L852.4,890.3 L861.0,890.4 L869.6,890.3 L878.1,890.0 L886.5,889.6 L894.9,888.9 L903.2,888.1 L911.5,887.0 L919.6,885.8 L927.7,884.3 L935.6,882.7 L943.5,880.8 L951.2,878.8 L958.9,876.6 L966.4,874.2 L973.8,871.6 L981.1,868.9 L988.2,865.9 L995.2,862.8 L1002.1,859.5 L1008.8,856.0 L1015.3,852.3 L1021.7,848.5 L1028.0,844.5 L1034.1,840.3 L1040.0,836.0 L1045.7,831.5 L1051.3,826.8 L1056.7,822.0 L1061.9,817.1 L1066.9,812.0 L1071.7,806.7 L1076.3,801.4 L1080.7,795.8 L1084.9,790.2 L1089.0,784.4 L1092.8,778.5 L1096.4,772.5 L1099.8,766.3 L1103.0,760.1 L1105.9,753.7 L1108.7,747.2 L1111.2,740.7 L1113.5,734.0 L1115.6,727.2 L1117.4,720.4 L1119.0,713.5 L1120.5,706.5 L1121.6,699.4 L1122.6,692.3 L1123.3,685.1 L1123.8,677.8 L1124.0,670.5 L1124.0,663.2 L1123.8,655.8 L1123.4,648.4 L1122.7,640.9 L1121.8,633.4 L1120.7,625.9 L1119.4,618.4 L1117.8,610.9 L1116.0,603.3 L1113.9,595.8 L1111.7,588.2 L1109.2,580.7 L1106.5,573.2 L1103.6,565.7 L1100.5,558.2 L1097.1,550.8 L1093.5,543.4 L1089.8,536.0 L1085.8,528.7 L1081.6,521.4 L1077.2,514.2 L1072.7,507.1 L1067.9,500.0 L1062.9,493.0 L1057.7,486.0 L1052.4,479.2 L1046.9,472.4 L1041.2,465.7 L1035.3,459.1 L1029.3,452.6 L1023.1,446.2 L1016.7,439.9 L1010.2,433.8Z" fill="#adadad" stroke="#161616" stroke-width="1.85" stroke-linejoin="round" stroke-linecap="round"/>
<path d="M1006.2,436.7 L999.7,430.8 L945.1,495.8 L950.6,500.8Z" fill="#cecece" stroke="#cecece" stroke-width="0.7" stroke-linejoin="round" stroke-linecap="round"/>
<path d="M999.7,430.8 L993.0,424.9 L939.5,491.0 L945.1,495.8Z" fill="#cecece" stroke="#cecece" stroke-width="0.7" stroke-linejoin="round" stroke-linecap="round"/>
<path d="M993.0,424.9 L986.1,419.2 L933.8,486.2 L939.5,491.0Z" fill="#cfcfcf" stroke="#cfcfcf" stroke-width="0.7" stroke-linejoin="round" stroke-linecap="round"/>
<path d="M986.1,419.2 L979.1,413.6 L928.0,481.6 L933.8,486.2Z" fill="#cfcfcf" stroke="#cfcfcf" stroke-width="0.7" stroke-linejoin="round" stroke-linecap="round"/>
<path d="M979.1,413.6 L972.0,408.2 L922.1,477.0 L928.0,481.6Z" fill="#d0d0d0" stroke="#d0d0d0" stroke-width="0.7" stroke-linejoin="round" stroke-linecap="round"/>
<path d="M972.0,408.2 L964.8,402.8 L916.1,472.6 L922.1,477.0Z" fill="#d0d0d0" stroke="#d0d0d0" stroke-width="0.7" stroke-linejoin="round" stroke-linecap="round"/>
<path d="M964.8,402.8 L957.4,397.7 L910.0,468.3 L916.1,472.6Z" fill="#d1d1d1" stroke="#d1d1d1" stroke-width="0.7" stroke-linejoin="round" stroke-linecap="round"/>
<path d="M957.4,397.7 L949.9,392.6 L903.8,464.1 L910.0,468.3Z" fill="#d1d1d1" stroke="#d1d1d1" stroke-width="0.7" stroke-linejoin="round" stroke-linecap="round"/>
<path d="M949.9,392.6 L942.3,387.7 L897.4,460.0 L903.8,464.1Z" fill="#d1d1d1" stroke="#d1d1d1" stroke-width="0.7" stroke-linejoin="round" stroke-linecap="round"/>
<path d="M942.3,387.7 L934.6,382.9 L891.1,456.1 L897.4,460.0Z" fill="#d2d2d2" stroke="#d2d2d2" stroke-width="0.7" stroke-linejoin="round" stroke-linecap="round"/>
<path d="M934.6,382.9 L926.8,378.3 L884.6,452.2 L891.1,456.1Z" fill="#d2d2d2" stroke="#d2d2d2" stroke-width="0.7" stroke-linejoin="round" stroke-linecap="round"/>
<path d="M926.8,378.3 L918.9,373.9 L878.0,448.5 L884.6,452.2Z" fill="#d2d2d2" stroke="#d2d2d2" stroke-width="0.7" stroke-linejoin="round" stroke-linecap="round"/>
<path d="M918.9,373.9 L911.0,369.6 L871.4,445.0 L878.0,448.5Z" fill="#d2d2d2" stroke="#d2d2d2" stroke-width="0.7" stroke-linejoin="round" stroke-linecap="round"/>
<path d="M911.0,369.6 L902.9,365.4 L864.7,441.5 L871.4,445.0Z" fill="#d2d2d2" stroke="#d2d2d2" stroke-width="0.7" stroke-linejoin="round" stroke-linecap="round"/>
<path d="M902.9,365.4 L894.7,361.5 L857.9,438.2 L864.7,441.5Z" fill="#d2d2d2" stroke="#d2d2d2" stroke-width="0.7" stroke-linejoin="round" stroke-linecap="round"/>
<path d="M894.7,361.5 L886.5,357.7 L851.1,435.0 L857.9,438.2Z" fill="#d2d2d2" stroke="#d2d2d2" stroke-width="0.7" stroke-linejoin="round" stroke-linecap="round"/>
<path d="M886.5,357.7 L878.2,354.0 L844.2,432.0 L851.1,435.0Z" fill="#d2d2d2" stroke="#d2d2d2" stroke-width="0.7" stroke-linejoin="round" stroke-linecap="round"/>
<path d="M878.2,354.0 L869.9,350.5 L837.2,429.1 L844.2,432.0Z" fill="#d1d1d1" stroke="#d1d1d1" stroke-width="0.7" stroke-linejoin="round" stroke-linecap="round"/>
<path d="M869.9,350.5 L861.5,347.2 L830.2,426.4 L837.2,429.1Z" fill="#d1d1d1" stroke="#d1d1d1" stroke-width="0.7" stroke-linejoin="round" stroke-linecap="round"/>
<path d="M861.5,347.2 L853.0,344.1 L823.2,423.8 L830.2,426.4Z" fill="#d1d1d1" stroke="#d1d1d1" stroke-width="0.7" stroke-linejoin="round" stroke-linecap="round"/>
<path d="M853.0,344.1 L844.5,341.2 L816.1,421.3 L823.2,423.8Z" fill="#d1d1d1" stroke="#d1d1d1" stroke-width="0.7" stroke-linejoin="round" stroke-linecap="round"/>
<path d="M844.5,341.2 L836.0,338.4 L809.0,419.0 L816.1,421.3Z" fill="#d0d0d0" stroke="#d0d0d0" stroke-width="0.7" stroke-linejoin="round" stroke-linecap="round"/>
<path d="M836.0,338.4 L827.4,335.8 L801.9,416.9 L809.0,419.0Z" fill="#d0d0d0" stroke="#d0d0d0" stroke-width="0.7" stroke-linejoin="round" stroke-linecap="round"/>
<path d="M827.4,335.8 L818.8,333.4 L794.8,414.9 L801.9,416.9Z" fill="#cfcfcf" stroke="#cfcfcf" stroke-width="0.7" stroke-linejoin="round" stroke-linecap="round"/>
<path d="M818.8,333.4 L810.2,331.2 L787.6,413.0 L794.8,414.9Z" fill="#cfcfcf" stroke="#cfcfcf" stroke-width="0.7" stroke-linejoin="round" stroke-linecap="round"/>
<path d="M810.2,331.2 L801.5,329.1 L780.4,411.3 L787.6,413.0Z" fill="#cecece" stroke="#cecece" stroke-width="0.7" stroke-linejoin="round" stroke-linecap="round"/>
<path d="M801.5,329.1 L792.9,327.3 L773.2,409.8 L780.4,411.3Z" fill="#cdcdcd" stroke="#cdcdcd" stroke-width="0.7" stroke-linejoin="round" stroke-linecap="round"/>
<path d="M792.9,327.3 L784.2,325.6 L766.0,408.4 L773.2,409.8Z" fill="#cdcdcd" stroke="#cdcdcd" stroke-width="0.7" stroke-linejoin="round" stroke-linecap="round"/>
<path d="M784.2,325.6 L775.6,324.1 L758.9,407.2 L766.0,408.4Z" fill="#cccccc" stroke="#cccccc" stroke-width="0.7" stroke-linejoin="round" stroke-linecap="round"/>
<path d="M775.6,324.1 L766.9,322.9 L751.7,406.1 L758.9,407.2Z" fill="#cbcbcb" stroke="#cbcbcb" stroke-width="0.7" stroke-linejoin="round" stroke-linecap="round"/>
<path d="M766.9,322.9 L758.3,321.8 L744.5,405.2 L751.7,406.1Z" fill="#cacaca" stroke="#cacaca" stroke-width="0.7" stroke-linejoin="round" stroke-linecap="round"/>
<path d="M758.3,321.8 L749.7,320.9 L737.4,404.5 L744.5,405.2Z" fill="#c9c9c9" stroke="#c9c9c9" stroke-width="0.7" stroke-linejoin="round" stroke-linecap="round"/>
<path d="M749.7,320.9 L741.1,320.2 L730.2,403.9 L737.4,404.5Z" fill="#c8c8c8" stroke="#c8c8c8" stroke-width="0.7" stroke-linejoin="round" stroke-linecap="round"/>
<path d="M741.1,320.2 L732.6,319.7 L723.1,403.5 L730.2,403.9Z" fill="#c7c7c7" stroke="#c7c7c7" stroke-width="0.7" stroke-linejoin="round" stroke-linecap="round"/>
<path d="M732.6,319.7 L724.1,319.3 L716.0,403.2 L723.1,403.5Z" fill="#c6c6c6" stroke="#c6c6c6" stroke-width="0.7" stroke-linejoin="round" stroke-linecap="round"/>
<path d="M724.1,319.3 L715.6,319.2 L709.0,403.1 L716.0,403.2Z" fill="#c5c5c5" stroke="#c5c5c5" stroke-width="0.7" stroke-linejoin="round" stroke-linecap="round"/>
<path d="M715.6,319.2 L707.2,319.3 L702.0,403.2 L709.0,403.1Z" fill="#c4c4c4" stroke="#c4c4c4" stroke-width="0.7" stroke-linejoin="round" stroke-linecap="round"/>
<path d="M707.2,319.3 L698.8,319.6 L695.1,403.4 L702.0,403.2Z" fill="#c3c3c3" stroke="#c3c3c3" stroke-width="0.7" stroke-linejoin="round" stroke-linecap="round"/>
<path d="M698.8,319.6 L690.5,320.0 L688.2,403.8 L695.1,403.4Z" fill="#c2c2c2" stroke="#c2c2c2" stroke-width="0.7" stroke-linejoin="round" stroke-linecap="round"/>
<path d="M690.5,320.0 L682.3,320.7 L681.3,404.3 L688.2,403.8Z" fill="#c1c1c1" stroke="#c1c1c1" stroke-width="0.7" stroke-linejoin="round" stroke-linecap="round"/>
<path d="M682.3,320.7 L674.1,321.5 L674.5,405.0 L681.3,404.3Z" fill="#bfbfbf" stroke="#bfbfbf" stroke-width="0.7" stroke-linejoin="round" stroke-linecap="round"/>
<path d="M674.1,321.5 L666.0,322.5 L667.8,405.9 L674.5,405.0Z" fill="#bebebe" stroke="#bebebe" stroke-width="0.7" stroke-linejoin="round" stroke-linecap="round"/>
<path d="M666.0,322.5 L658.0,323.8 L661.2,406.9 L667.8,405.9Z" fill="#bdbdbd" stroke="#bdbdbd" stroke-width="0.7" stroke-linejoin="round" stroke-linecap="round"/>
<path d="M658.0,323.8 L650.1,325.2 L654.6,408.1 L661.2,406.9Z" fill="#bbbbbb" stroke="#bbbbbb" stroke-width="0.7" stroke-linejoin="round" stroke-linecap="round"/>
<path d="M650.1,325.2 L642.3,326.8 L648.1,409.4 L654.6,408.1Z" fill="#bababa" stroke="#bababa" stroke-width="0.7" stroke-linejoin="round" stroke-linecap="round"/>
<path d="M642.3,326.8 L634.6,328.6 L641.7,410.9 L648.1,409.4Z" fill="#b8b8b8" stroke="#b8b8b8" stroke-width="0.7" stroke-linejoin="round" stroke-linecap="round"/>
<path d="M634.6,328.6 L627.0,330.6 L635.3,412.6 L641.7,410.9Z" fill="#b7b7b7" stroke="#b7b7b7" stroke-width="0.7" stroke-linejoin="round" stroke-linecap="round"/>
<path d="M627.0,330.6 L619.5,332.8 L629.1,414.4 L635.3,412.6Z" fill="#b5b5b5" stroke="#b5b5b5" stroke-width="0.7" stroke-linejoin="round" stroke-linecap="round"/>
<path d="M619.5,332.8 L612.1,335.1 L623.0,416.3 L629.1,414.4Z" fill="#b4b4b4" stroke="#b4b4b4" stroke-width="0.7" stroke-linejoin="round" stroke-linecap="round"/>
<path d="M612.1,335.1 L604.8,337.7 L616.9,418.4 L623.0,416.3Z" fill="#b2b2b2" stroke="#b2b2b2" stroke-width="0.7" stroke-linejoin="round" stroke-linecap="round"/>
<path d="M604.8,337.7 L597.7,340.4 L611.0,420.7 L616.9,418.4Z" fill="#b0b0b0" stroke="#b0b0b0" stroke-width="0.7" stroke-linejoin="round" stroke-linecap="round"/>
<path d="M597.7,340.4 L590.6,343.3 L605.1,423.1 L611.0,420.7Z" fill="#aeaeae" stroke="#aeaeae" stroke-width="0.7" stroke-linejoin="round" stroke-linecap="round"/>
<path d="M590.6,343.3 L583.8,346.4 L599.4,425.7 L605.1,423.1Z" fill="#acacac" stroke="#acacac" stroke-width="0.7" stroke-linejoin="round" stroke-linecap="round"/>
<path d="M583.8,346.4 L577.0,349.6 L593.8,428.4 L599.4,425.7Z" fill="#a9a9a9" stroke="#a9a9a9" stroke-width="0.7" stroke-linejoin="round" stroke-linecap="round"/>
<path d="M577.0,349.6 L570.4,353.0 L588.4,431.2 L593.8,428.4Z" fill="#a7a7a7" stroke="#a7a7a7" stroke-width="0.7" stroke-linejoin="round" stroke-linecap="round"/>
<path d="M570.4,353.0 L564.0,356.6 L583.0,434.2 L588.4,431.2Z" fill="#a5a5a5" stroke="#a5a5a5" stroke-width="0.7" stroke-linejoin="round" stroke-linecap="round"/>
<path d="M564.0,356.6 L557.7,360.4 L577.8,437.3 L583.0,434.2Z" fill="#a2a2a2" stroke="#a2a2a2" stroke-width="0.7" stroke-linejoin="round" stroke-linecap="round"/>
<path d="M557.7,360.4 L551.6,364.3 L572.7,440.6 L577.8,437.3Z" fill="#a0a0a0" stroke="#a0a0a0" stroke-width="0.7" stroke-linejoin="round" stroke-linecap="round"/>
<path d="M551.6,364.3 L545.6,368.4 L567.7,444.0 L572.7,440.6Z" fill="#9e9e9e" stroke="#9e9e9e" stroke-width="0.7" stroke-linejoin="round" stroke-linecap="round"/>
<path d="M545.6,368.4 L539.8,372.7 L562.9,447.5 L567.7,444.0Z" fill="#9b9b9b" stroke="#9b9b9b" stroke-width="0.7" stroke-linejoin="round" stroke-linecap="round"/>
<path d="M539.8,372.7 L534.1,377.1 L558.2,451.2 L562.9,447.5Z" fill="#999999" stroke="#999999" stroke-width="0.7" stroke-linejoin="round" stroke-linecap="round"/>
<path d="M534.1,377.1 L528.7,381.7 L553.7,455.0 L558.2,451.2Z" fill="#969696" stroke="#969696" stroke-width="0.7" stroke-linejoin="round" stroke-linecap="round"/>
<path d="M528.7,381.7 L523.4,386.4 L549.3,458.9 L553.7,455.0Z" fill="#949494" stroke="#949494" stroke-width="0.7" stroke-linejoin="round" stroke-linecap="round"/>
<path d="M523.4,386.4 L518.3,391.2 L545.0,463.0 L549.3,458.9Z" fill="#919191" stroke="#919191" stroke-width="0.7" stroke-linejoin="round" stroke-linecap="round"/>
<path d="M518.3,391.2 L513.4,396.2 L540.9,467.1 L545.0,463.0Z" fill="#8f8f8f" stroke="#8f8f8f" stroke-width="0.7" stroke-linejoin="round" stroke-linecap="round"/>
<path d="M513.4,396.2 L508.6,401.4 L537.0,471.4 L540.9,467.1Z" fill="#8c8c8c" stroke="#8c8c8c" stroke-width="0.7" stroke-linejoin="round" stroke-linecap="round"/>
<path d="M508.6,401.4 L504.1,406.7 L533.2,475.8 L537.0,471.4Z" fill="#8a8a8a" stroke="#8a8a8a" stroke-width="0.7" stroke-linejoin="round" stroke-linecap="round"/>
<path d="M504.1,406.7 L499.7,412.1 L529.6,480.3 L533.2,475.8Z" fill="#878787" stroke="#878787" stroke-width="0.7" stroke-linejoin="round" stroke-linecap="round"/>
<path d="M499.7,412.1 L495.6,417.7 L526.2,484.9 L529.6,480.3Z" fill="#858585" stroke="#858585" stroke-width="0.7" stroke-linejoin="round" stroke-linecap="round"/>
<path d="M495.6,417.7 L491.7,423.3 L522.9,489.6 L526.2,484.9Z" fill="#828282" stroke="#828282" stroke-width="0.7" stroke-linejoin="round" stroke-linecap="round"/>
<path d="M491.7,423.3 L487.9,429.1 L519.8,494.5 L522.9,489.6Z" fill="#808080" stroke="#808080" stroke-width="0.7" stroke-linejoin="round" stroke-linecap="round"/>
<path d="M487.9,429.1 L484.4,435.1 L516.8,499.4 L519.8,494.5Z" fill="#7d7d7d" stroke="#7d7d7d" stroke-width="0.7" stroke-linejoin="round" stroke-linecap="round"/>
<path d="M484.4,435.1 L481.0,441.1 L514.1,504.4 L516.8,499.4Z" fill="#7a7a7a" stroke="#7a7a7a" stroke-width="0.7" stroke-linejoin="round" stroke-linecap="round"/>
<path d="M481.0,441.1 L477.9,447.3 L511.5,509.5 L514.1,504.4Z" fill="#787878" stroke="#787878" stroke-width="0.7" stroke-linejoin="round" stroke-linecap="round"/>
<path d="M477.9,447.3 L475.0,453.5 L509.0,514.7 L511.5,509.5Z" fill="#757575" stroke="#757575" stroke-width="0.7" stroke-linejoin="round" stroke-linecap="round"/>
<path d="M475.0,453.5 L472.3,459.9 L506.8,520.0 L509.0,514.7Z" fill="#737373" stroke="#737373" stroke-width="0.7" stroke-linejoin="round" stroke-linecap="round"/>
<path d="M472.3,459.9 L469.8,466.3 L504.7,525.4 L506.8,520.0Z" fill="#707070" stroke="#707070" stroke-width="0.7" stroke-linejoin="round" stroke-linecap="round"/>
<path d="M469.8,466.3 L467.6,472.9 L502.9,530.8 L504.7,525.4Z" fill="#6e6e6e" stroke="#6e6e6e" stroke-width="0.7" stroke-linejoin="round" stroke-linecap="round"/>
<path d="M467.6,472.9 L465.5,479.5 L501.2,536.3 L502.9,530.8Z" fill="#6b6b6b" stroke="#6b6b6b" stroke-width="0.7" stroke-linejoin="round" stroke-linecap="round"/>
<path d="M465.5,479.5 L463.7,486.2 L499.6,541.9 L501.2,536.3Z" fill="#686868" stroke="#686868" stroke-width="0.7" stroke-linejoin="round" stroke-linecap="round"/>
<path d="M463.7,486.2 L462.1,493.0 L498.3,547.5 L499.6,541.9Z" fill="#666666" stroke="#666666" stroke-width="0.7" stroke-linejoin="round" stroke-linecap="round"/>
<path d="M462.1,493.0 L460.7,499.9 L497.2,553.3 L498.3,547.5Z" fill="#636363" stroke="#636363" stroke-width="0.7" stroke-linejoin="round" stroke-linecap="round"/>
<path d="M460.7,499.9 L459.6,506.8 L496.2,559.0 L497.2,553.3Z" fill="#616161" stroke="#616161" stroke-width="0.7" stroke-linejoin="round" stroke-linecap="round"/>
<path d="M459.6,506.8 L458.6,513.8 L495.4,564.8 L496.2,559.0Z" fill="#5e5e5e" stroke="#5e5e5e" stroke-width="0.7" stroke-linejoin="round" stroke-linecap="round"/>
<path d="M458.6,513.8 L457.9,520.9 L494.9,570.7 L495.4,564.8Z" fill="#5c5c5c" stroke="#5c5c5c" stroke-width="0.7" stroke-linejoin="round" stroke-linecap="round"/>
<path d="M457.9,520.9 L457.5,528.0 L494.5,576.6 L494.9,570.7Z" fill="#595959" stroke="#595959" stroke-width="0.7" stroke-linejoin="round" stroke-linecap="round"/>
<path d="M457.5,528.0 L457.2,535.2 L494.3,582.6 L494.5,576.6Z" fill="#575757" stroke="#575757" stroke-width="0.7" stroke-linejoin="round" stroke-linecap="round"/>
<path d="M457.2,535.2 L457.2,542.4 L494.2,588.6 L494.3,582.6Z" fill="#555555" stroke="#555555" stroke-width="0.7" stroke-linejoin="round" stroke-linecap="round"/>
<path d="M457.2,542.4 L457.4,549.7 L494.4,594.6 L494.2,588.6Z" fill="#525252" stroke="#525252" stroke-width="0.7" stroke-linejoin="round" stroke-linecap="round"/>
<path d="M457.4,549.7 L457.8,557.0 L494.8,600.7 L494.4,594.6Z" fill="#505050" stroke="#505050" stroke-width="0.7" stroke-linejoin="round" stroke-linecap="round"/>
<path d="M457.8,557.0 L458.5,564.3 L495.3,606.8 L494.8,600.7Z" fill="#4e4e4e" stroke="#4e4e4e" stroke-width="0.7" stroke-linejoin="round" stroke-linecap="round"/>
<path d="M458.5,564.3 L459.4,571.7 L496.0,612.9 L495.3,606.8Z" fill="#4b4b4b" stroke="#4b4b4b" stroke-width="0.7" stroke-linejoin="round" stroke-linecap="round"/>
<path d="M459.4,571.7 L460.5,579.0 L497.0,619.0 L496.0,612.9Z" fill="#494949" stroke="#494949" stroke-width="0.7" stroke-linejoin="round" stroke-linecap="round"/>
<path d="M460.5,579.0 L461.8,586.4 L498.1,625.2 L497.0,619.0Z" fill="#474747" stroke="#474747" stroke-width="0.7" stroke-linejoin="round" stroke-linecap="round"/>
<path d="M461.8,586.4 L463.3,593.8 L499.4,631.3 L498.1,625.2Z" fill="#444444" stroke="#444444" stroke-width="0.7" stroke-linejoin="round" stroke-linecap="round"/>
<path d="M463.3,593.8 L465.1,601.2 L500.8,637.5 L499.4,631.3Z" fill="#424242" stroke="#424242" stroke-width="0.7" stroke-linejoin="round" stroke-linecap="round"/>
<path d="M465.1,601.2 L467.1,608.7 L502.5,643.7 L500.8,637.5Z" fill="#404040" stroke="#404040" stroke-width="0.7" stroke-linejoin="round" stroke-linecap="round"/>
<path d="M467.1,608.7 L469.3,616.1 L504.3,649.8 L502.5,643.7Z" fill="#3e3e3e" stroke="#3e3e3e" stroke-width="0.7" stroke-linejoin="round" stroke-linecap="round"/>
<path d="M469.3,616.1 L471.8,623.5 L506.4,656.0 L504.3,649.8Z" fill="#3c3c3c" stroke="#3c3c3c" stroke-width="0.7" stroke-linejoin="round" stroke-linecap="round"/>
<path d="M471.8,623.5 L474.4,630.8 L508.6,662.1 L506.4,656.0Z" fill="#3a3a3a" stroke="#3a3a3a" stroke-width="0.7" stroke-linejoin="round" stroke-linecap="round"/>
<path d="M474.4,630.8 L477.3,638.2 L510.9,668.2 L508.6,662.1Z" fill="#383838" stroke="#383838" stroke-width="0.7" stroke-linejoin="round" stroke-linecap="round"/>
<path d="M477.3,638.2 L480.4,645.5 L513.5,674.3 L510.9,668.2Z" fill="#363636" stroke="#363636" stroke-width="0.7" stroke-linejoin="round" stroke-linecap="round"/>
<path d="M480.4,645.5 L483.7,652.8 L516.2,680.4 L513.5,674.3Z" fill="#343434" stroke="#343434" stroke-width="0.7" stroke-linejoin="round" stroke-linecap="round"/>
<path d="M483.7,652.8 L487.2,660.1 L519.1,686.4 L516.2,680.4Z" fill="#323232" stroke="#323232" stroke-width="0.7" stroke-linejoin="round" stroke-linecap="round"/>
<path d="M487.2,660.1 L490.9,667.4 L522.2,692.4 L519.1,686.4Z" fill="#313131" stroke="#313131" stroke-width="0.7" stroke-linejoin="round" stroke-linecap="round"/>
<path d="M490.9,667.4 L494.8,674.5 L525.5,698.4 L522.2,692.4Z" fill="#2f2f2f" stroke="#2f2f2f" stroke-width="0.7" stroke-linejoin="round" stroke-linecap="round"/>
<path d="M494.8,674.5 L498.9,681.7 L528.9,704.4 L525.5,698.4Z" fill="#2d2d2d" stroke="#2d2d2d" stroke-width="0.7" stroke-linejoin="round" stroke-linecap="round"/>
<path d="M498.9,681.7 L503.2,688.8 L532.5,710.2 L528.9,704.4Z" fill="#2c2c2c" stroke="#2c2c2c" stroke-width="0.7" stroke-linejoin="round" stroke-linecap="round"/>
<path d="M503.2,688.8 L507.7,695.8 L536.2,716.1 L532.5,710.2Z" fill="#2a2a2a" stroke="#2a2a2a" stroke-width="0.7" stroke-linejoin="round" stroke-linecap="round"/>
<path d="M507.7,695.8 L512.4,702.8 L540.1,721.9 L536.2,716.1Z" fill="#282828" stroke="#282828" stroke-width="0.7" stroke-linejoin="round" stroke-linecap="round"/>
<path d="M512.4,702.8 L517.3,709.6 L544.2,727.6 L540.1,721.9Z" fill="#272727" stroke="#272727" stroke-width="0.7" stroke-linejoin="round" stroke-linecap="round"/>
<path d="M517.3,709.6 L522.3,716.5 L548.4,733.3 L544.2,727.6Z" fill="#262626" stroke="#262626" stroke-width="0.7" stroke-linejoin="round" stroke-linecap="round"/>
<path d="M522.3,716.5 L527.6,723.2 L552.7,738.9 L548.4,733.3Z" fill="#242424" stroke="#242424" stroke-width="0.7" stroke-linejoin="round" stroke-linecap="round"/>
<path d="M527.6,723.2 L533.0,729.9 L557.2,744.4 L552.7,738.9Z" fill="#232323" stroke="#232323" stroke-width="0.7" stroke-linejoin="round" stroke-linecap="round"/>
<path d="M533.0,729.9 L538.6,736.4 L561.9,749.9 L557.2,744.4Z" fill="#222222" stroke="#222222" stroke-width="0.7" stroke-linejoin="round" stroke-linecap="round"/>
<path d="M538.6,736.4 L544.4,742.9 L566.7,755.2 L561.9,749.9Z" fill="#202020" stroke="#202020" stroke-width="0.7" stroke-linejoin="round" stroke-linecap="round"/>
<path d="M544.4,742.9 L550.3,749.3 L571.6,760.5 L566.7,755.2Z" fill="#1f1f1f" stroke="#1f1f1f" stroke-width="0.7" stroke-linejoin="round" stroke-linecap="round"/>
<path d="M550.3,749.3 L556.4,755.6 L576.7,765.8 L571.6,760.5Z" fill="#1e1e1e" stroke="#1e1e1e" stroke-width="0.7" stroke-linejoin="round" stroke-linecap="round"/>
<path d="M556.4,755.6 L562.7,761.7 L581.9,770.9 L576.7,765.8Z" fill="#1d1d1d" stroke="#1d1d1d" stroke-width="0.7" stroke-linejoin="round" stroke-linecap="round"/>
<path d="M562.7,761.7 L569.1,767.8 L587.2,775.9 L581.9,770.9Z" fill="#1c1c1c" stroke="#1c1c1c" stroke-width="0.7" stroke-linejoin="round" stroke-linecap="round"/>
<path d="M569.1,767.8 L575.6,773.8 L592.7,780.9 L587.2,775.9Z" fill="#1b1b1b" stroke="#1b1b1b" stroke-width="0.7" stroke-linejoin="round" stroke-linecap="round"/>
<path d="M575.6,773.8 L582.4,779.6 L598.3,785.7 L592.7,780.9Z" fill="#1b1b1b" stroke="#1b1b1b" stroke-width="0.7" stroke-linejoin="round" stroke-linecap="round"/>
<path d="M582.4,779.6 L589.2,785.3 L604.0,790.5 L598.3,785.7Z" fill="#1a1a1a" stroke="#1a1a1a" stroke-width="0.7" stroke-linejoin="round" stroke-linecap="round"/>
<path d="M589.2,785.3 L596.2,790.9 L609.8,795.1 L604.0,790.5Z" fill="#191919" stroke="#191919" stroke-width="0.7" stroke-linejoin="round" stroke-linecap="round"/>
<path d="M596.2,790.9 L603.3,796.4 L615.7,799.7 L609.8,795.1Z" fill="#191919" stroke="#191919" stroke-width="0.7" stroke-linejoin="round" stroke-linecap="round"/>
<path d="M603.3,796.4 L610.6,801.7 L621.7,804.1 L615.7,799.7Z" fill="#181818" stroke="#181818" stroke-width="0.7" stroke-linejoin="round" stroke-linecap="round"/>
<path d="M610.6,801.7 L617.9,806.9 L627.8,808.4 L621.7,804.1Z" fill="#181818" stroke="#181818" stroke-width="0.7" stroke-linejoin="round" stroke-linecap="round"/>
<path d="M617.9,806.9 L625.4,811.9 L634.0,812.6 L627.8,808.4Z" fill="#171717" stroke="#171717" stroke-width="0.7" stroke-linejoin="round" stroke-linecap="round"/>
<path d="M625.4,811.9 L633.0,816.8 L640.3,816.7 L634.0,812.6Z" fill="#171717" stroke="#171717" stroke-width="0.7" stroke-linejoin="round" stroke-linecap="round"/>
<path d="M633.0,816.8 L640.7,821.6 L646.7,820.6 L640.3,816.7Z" fill="#161616" stroke="#161616" stroke-width="0.7" stroke-linejoin="round" stroke-linecap="round"/>
<path d="M640.7,821.6 L648.5,826.2 L653.2,824.5 L646.7,820.6Z" fill="#161616" stroke="#161616" stroke-width="0.7" stroke-linejoin="round" stroke-linecap="round"/>
<path d="M648.5,826.2 L656.4,830.7 L659.8,828.2 L653.2,824.5Z" fill="#161616" stroke="#161616" stroke-width="0.7" stroke-linejoin="round" stroke-linecap="round"/>
<path d="M656.4,830.7 L664.4,835.0 L666.4,831.7 L659.8,828.2Z" fill="#161616" stroke="#161616" stroke-width="0.7" stroke-linejoin="round" stroke-linecap="round"/>
<path d="M664.4,835.0 L672.4,839.1 L673.1,835.2 L666.4,831.7Z" fill="#161616" stroke="#161616" stroke-width="0.7" stroke-linejoin="round" stroke-linecap="round"/>
<path d="M672.4,839.1 L680.6,843.1 L679.9,838.5 L673.1,835.2Z" fill="#161616" stroke="#161616" stroke-width="0.7" stroke-linejoin="round" stroke-linecap="round"/>
<path d="M680.6,843.1 L688.8,846.9 L686.7,841.7 L679.9,838.5Z" fill="#161616" stroke="#161616" stroke-width="0.7" stroke-linejoin="round" stroke-linecap="round"/>
<path d="M688.8,846.9 L697.1,850.5 L693.6,844.7 L686.7,841.7Z" fill="#161616" stroke="#161616" stroke-width="0.7" stroke-linejoin="round" stroke-linecap="round"/>
<path d="M697.1,850.5 L705.4,854.0 L700.6,847.6 L693.6,844.7Z" fill="#171717" stroke="#171717" stroke-width="0.7" stroke-linejoin="round" stroke-linecap="round"/>
<path d="M705.4,854.0 L713.8,857.3 L707.6,850.3 L700.6,847.6Z" fill="#171717" stroke="#171717" stroke-width="0.7" stroke-linejoin="round" stroke-linecap="round"/>
<path d="M713.8,857.3 L722.3,860.4 L714.6,852.9 L707.6,850.3Z" fill="#171717" stroke="#171717" stroke-width="0.7" stroke-linejoin="round" stroke-linecap="round"/>
<path d="M722.3,860.4 L730.8,863.4 L721.6,855.4 L714.6,852.9Z" fill="#181818" stroke="#181818" stroke-width="0.7" stroke-linejoin="round" stroke-linecap="round"/>
<path d="M730.8,863.4 L739.4,866.2 L728.7,857.7 L721.6,855.4Z" fill="#181818" stroke="#181818" stroke-width="0.7" stroke-linejoin="round" stroke-linecap="round"/>
<path d="M739.4,866.2 L747.9,868.7 L735.9,859.8 L728.7,857.7Z" fill="#191919" stroke="#191919" stroke-width="0.7" stroke-linejoin="round" stroke-linecap="round"/>
<path d="M747.9,868.7 L756.5,871.2 L743.0,861.8 L735.9,859.8Z" fill="#1a1a1a" stroke="#1a1a1a" stroke-width="0.7" stroke-linejoin="round" stroke-linecap="round"/>
<path d="M756.5,871.2 L765.2,873.4 L750.2,863.7 L743.0,861.8Z" fill="#1a1a1a" stroke="#1a1a1a" stroke-width="0.7" stroke-linejoin="round" stroke-linecap="round"/>
<path d="M765.2,873.4 L773.8,875.4 L757.4,865.4 L750.2,863.7Z" fill="#1b1b1b" stroke="#1b1b1b" stroke-width="0.7" stroke-linejoin="round" stroke-linecap="round"/>
<path d="M773.8,875.4 L782.4,877.3 L764.6,866.9 L757.4,865.4Z" fill="#1c1c1c" stroke="#1c1c1c" stroke-width="0.7" stroke-linejoin="round" stroke-linecap="round"/>
<path d="M782.4,877.3 L791.1,878.9 L771.8,868.3 L764.6,866.9Z" fill="#1d1d1d" stroke="#1d1d1d" stroke-width="0.7" stroke-linejoin="round" stroke-linecap="round"/>
<path d="M791.1,878.9 L799.7,880.4 L778.9,869.5 L771.8,868.3Z" fill="#1e1e1e" stroke="#1e1e1e" stroke-width="0.7" stroke-linejoin="round" stroke-linecap="round"/>
<path d="M799.7,880.4 L808.4,881.7 L786.1,870.6 L778.9,869.5Z" fill="#1f1f1f" stroke="#1f1f1f" stroke-width="0.7" stroke-linejoin="round" stroke-linecap="round"/>
<path d="M808.4,881.7 L817.0,882.8 L793.3,871.5 L786.1,870.6Z" fill="#202020" stroke="#202020" stroke-width="0.7" stroke-linejoin="round" stroke-linecap="round"/>
<path d="M817.0,882.8 L825.6,883.7 L800.4,872.2 L793.3,871.5Z" fill="#212121" stroke="#212121" stroke-width="0.7" stroke-linejoin="round" stroke-linecap="round"/>
<path d="M825.6,883.7 L834.2,884.4 L807.6,872.8 L800.4,872.2Z" fill="#222222" stroke="#222222" stroke-width="0.7" stroke-linejoin="round" stroke-linecap="round"/>
<path d="M834.2,884.4 L842.7,884.9 L814.7,873.2 L807.6,872.8Z" fill="#242424" stroke="#242424" stroke-width="0.7" stroke-linejoin="round" stroke-linecap="round"/>
<path d="M842.7,884.9 L851.3,885.2 L821.8,873.5 L814.7,873.2Z" fill="#252525" stroke="#252525" stroke-width="0.7" stroke-linejoin="round" stroke-linecap="round"/>
<path d="M851.3,885.2 L859.7,885.3 L828.8,873.6 L821.8,873.5Z" fill="#262626" stroke="#262626" stroke-width="0.7" stroke-linejoin="round" stroke-linecap="round"/>
<path d="M859.7,885.3 L868.1,885.2 L835.8,873.5 L828.8,873.6Z" fill="#282828" stroke="#282828" stroke-width="0.7" stroke-linejoin="round" stroke-linecap="round"/>
<path d="M868.1,885.2 L876.5,885.0 L842.7,873.3 L835.8,873.5Z" fill="#292929" stroke="#292929" stroke-width="0.7" stroke-linejoin="round" stroke-linecap="round"/>
<path d="M876.5,885.0 L884.8,884.5 L849.6,872.9 L842.7,873.3Z" fill="#2b2b2b" stroke="#2b2b2b" stroke-width="0.7" stroke-linejoin="round" stroke-linecap="round"/>
<path d="M884.8,884.5 L893.0,883.9 L856.5,872.4 L849.6,872.9Z" fill="#2c2c2c" stroke="#2c2c2c" stroke-width="0.7" stroke-linejoin="round" stroke-linecap="round"/>
<path d="M893.0,883.9 L901.2,883.0 L863.3,871.7 L856.5,872.4Z" fill="#2e2e2e" stroke="#2e2e2e" stroke-width="0.7" stroke-linejoin="round" stroke-linecap="round"/>
<path d="M901.2,883.0 L909.3,882.0 L870.0,870.8 L863.3,871.7Z" fill="#303030" stroke="#303030" stroke-width="0.7" stroke-linejoin="round" stroke-linecap="round"/>
<path d="M909.3,882.0 L917.3,880.8 L876.6,869.8 L870.0,870.8Z" fill="#323232" stroke="#323232" stroke-width="0.7" stroke-linejoin="round" stroke-linecap="round"/>
<path d="M917.3,880.8 L925.2,879.3 L883.2,868.6 L876.6,869.8Z" fill="#333333" stroke="#333333" stroke-width="0.7" stroke-linejoin="round" stroke-linecap="round"/>
<path d="M925.2,879.3 L933.0,877.7 L889.7,867.3 L883.2,868.6Z" fill="#353535" stroke="#353535" stroke-width="0.7" stroke-linejoin="round" stroke-linecap="round"/>
<path d="M933.0,877.7 L940.7,875.9 L896.1,865.8 L889.7,867.3Z" fill="#373737" stroke="#373737" stroke-width="0.7" stroke-linejoin="round" stroke-linecap="round"/>
<path d="M940.7,875.9 L948.4,874.0 L902.5,864.2 L896.1,865.8Z" fill="#393939" stroke="#393939" stroke-width="0.7" stroke-linejoin="round" stroke-linecap="round"/>
<path d="M948.4,874.0 L955.9,871.8 L908.7,862.4 L902.5,864.2Z" fill="#3b3b3b" stroke="#3b3b3b" stroke-width="0.7" stroke-linejoin="round" stroke-linecap="round"/>
<path d="M955.9,871.8 L963.3,869.4 L914.8,860.4 L908.7,862.4Z" fill="#3d3d3d" stroke="#3d3d3d" stroke-width="0.7" stroke-linejoin="round" stroke-linecap="round"/>
<path d="M963.3,869.4 L970.5,866.9 L920.9,858.3 L914.8,860.4Z" fill="#3f3f3f" stroke="#3f3f3f" stroke-width="0.7" stroke-linejoin="round" stroke-linecap="round"/>
<path d="M970.5,866.9 L977.7,864.2 L926.8,856.0 L920.9,858.3Z" fill="#414141" stroke="#414141" stroke-width="0.7" stroke-linejoin="round" stroke-linecap="round"/>
<path d="M977.7,864.2 L984.7,861.3 L932.6,853.6 L926.8,856.0Z" fill="#434343" stroke="#434343" stroke-width="0.7" stroke-linejoin="round" stroke-linecap="round"/>
<path d="M984.7,861.3 L991.6,858.2 L938.4,851.1 L932.6,853.6Z" fill="#464646" stroke="#464646" stroke-width="0.7" stroke-linejoin="round" stroke-linecap="round"/>
<path d="M991.6,858.2 L998.3,854.9 L944.0,848.3 L938.4,851.1Z" fill="#484848" stroke="#484848" stroke-width="0.7" stroke-linejoin="round" stroke-linecap="round"/>
<path d="M998.3,854.9 L1004.9,851.5 L949.4,845.5 L944.0,848.3Z" fill="#4a4a4a" stroke="#4a4a4a" stroke-width="0.7" stroke-linejoin="round" stroke-linecap="round"/>
<path d="M1004.9,851.5 L1011.3,847.9 L954.8,842.5 L949.4,845.5Z" fill="#4c4c4c" stroke="#4c4c4c" stroke-width="0.7" stroke-linejoin="round" stroke-linecap="round"/>
<path d="M1011.3,847.9 L1017.6,844.1 L960.0,839.4 L954.8,842.5Z" fill="#4f4f4f" stroke="#4f4f4f" stroke-width="0.7" stroke-linejoin="round" stroke-linecap="round"/>
<path d="M1017.6,844.1 L1023.8,840.2 L965.1,836.1 L960.0,839.4Z" fill="#515151" stroke="#515151" stroke-width="0.7" stroke-linejoin="round" stroke-linecap="round"/>
<path d="M1023.8,840.2 L1029.7,836.1 L970.1,832.7 L965.1,836.1Z" fill="#545454" stroke="#545454" stroke-width="0.7" stroke-linejoin="round" stroke-linecap="round"/>
<path d="M1029.7,836.1 L1035.5,831.9 L974.9,829.2 L970.1,832.7Z" fill="#565656" stroke="#565656" stroke-width="0.7" stroke-linejoin="round" stroke-linecap="round"/>
<path d="M1035.5,831.9 L1041.2,827.5 L979.6,825.5 L974.9,829.2Z" fill="#585858" stroke="#585858" stroke-width="0.7" stroke-linejoin="round" stroke-linecap="round"/>
<path d="M1041.2,827.5 L1046.6,822.9 L984.1,821.7 L979.6,825.5Z" fill="#5b5b5b" stroke="#5b5b5b" stroke-width="0.7" stroke-linejoin="round" stroke-linecap="round"/>
<path d="M1046.6,822.9 L1051.9,818.2 L988.5,817.8 L984.1,821.7Z" fill="#5d5d5d" stroke="#5d5d5d" stroke-width="0.7" stroke-linejoin="round" stroke-linecap="round"/>
<path d="M1051.9,818.2 L1057.0,813.3 L992.8,813.7 L988.5,817.8Z" fill="#606060" stroke="#606060" stroke-width="0.7" stroke-linejoin="round" stroke-linecap="round"/>
<path d="M1057.0,813.3 L1062.0,808.3 L996.9,809.6 L992.8,813.7Z" fill="#626262" stroke="#626262" stroke-width="0.7" stroke-linejoin="round" stroke-linecap="round"/>
<path d="M1062.0,808.3 L1066.7,803.1 L1000.8,805.3 L996.9,809.6Z" fill="#656565" stroke="#656565" stroke-width="0.7" stroke-linejoin="round" stroke-linecap="round"/>
<path d="M1066.7,803.1 L1071.2,797.9 L1004.6,800.9 L1000.8,805.3Z" fill="#676767" stroke="#676767" stroke-width="0.7" stroke-linejoin="round" stroke-linecap="round"/>
<path d="M1071.2,797.9 L1075.6,792.4 L1008.2,796.4 L1004.6,800.9Z" fill="#6a6a6a" stroke="#6a6a6a" stroke-width="0.7" stroke-linejoin="round" stroke-linecap="round"/>
<path d="M1075.6,792.4 L1079.7,786.9 L1011.6,791.8 L1008.2,796.4Z" fill="#6c6c6c" stroke="#6c6c6c" stroke-width="0.7" stroke-linejoin="round" stroke-linecap="round"/>
<path d="M1079.7,786.9 L1083.7,781.2 L1014.9,787.1 L1011.6,791.8Z" fill="#6f6f6f" stroke="#6f6f6f" stroke-width="0.7" stroke-linejoin="round" stroke-linecap="round"/>
<path d="M1083.7,781.2 L1087.4,775.4 L1018.0,782.2 L1014.9,787.1Z" fill="#727272" stroke="#727272" stroke-width="0.7" stroke-linejoin="round" stroke-linecap="round"/>
<path d="M1087.4,775.4 L1091.0,769.5 L1021.0,777.3 L1018.0,782.2Z" fill="#747474" stroke="#747474" stroke-width="0.7" stroke-linejoin="round" stroke-linecap="round"/>
<path d="M1091.0,769.5 L1094.3,763.4 L1023.7,772.3 L1021.0,777.3Z" fill="#777777" stroke="#777777" stroke-width="0.7" stroke-linejoin="round" stroke-linecap="round"/>
<path d="M1094.3,763.4 L1097.4,757.3 L1026.3,767.2 L1023.7,772.3Z" fill="#797979" stroke="#797979" stroke-width="0.7" stroke-linejoin="round" stroke-linecap="round"/>
<path d="M1097.4,757.3 L1100.3,751.0 L1028.8,762.0 L1026.3,767.2Z" fill="#7c7c7c" stroke="#7c7c7c" stroke-width="0.7" stroke-linejoin="round" stroke-linecap="round"/>
<path d="M1100.3,751.0 L1103.0,744.7 L1031.0,756.7 L1028.8,762.0Z" fill="#7e7e7e" stroke="#7e7e7e" stroke-width="0.7" stroke-linejoin="round" stroke-linecap="round"/>
<path d="M1103.0,744.7 L1105.5,738.2 L1033.1,751.4 L1031.0,756.7Z" fill="#818181" stroke="#818181" stroke-width="0.7" stroke-linejoin="round" stroke-linecap="round"/>
<path d="M1105.5,738.2 L1107.8,731.7 L1034.9,745.9 L1033.1,751.4Z" fill="#848484" stroke="#848484" stroke-width="0.7" stroke-linejoin="round" stroke-linecap="round"/>
<path d="M1107.8,731.7 L1109.8,725.1 L1036.6,740.4 L1034.9,745.9Z" fill="#868686" stroke="#868686" stroke-width="0.7" stroke-linejoin="round" stroke-linecap="round"/>
<path d="M1109.8,725.1 L1111.6,718.3 L1038.2,734.8 L1036.6,740.4Z" fill="#898989" stroke="#898989" stroke-width="0.7" stroke-linejoin="round" stroke-linecap="round"/>
<path d="M1111.6,718.3 L1113.2,711.5 L1039.5,729.2 L1038.2,734.8Z" fill="#8b8b8b" stroke="#8b8b8b" stroke-width="0.7" stroke-linejoin="round" stroke-linecap="round"/>
<path d="M1113.2,711.5 L1114.6,704.7 L1040.6,723.5 L1039.5,729.2Z" fill="#8e8e8e" stroke="#8e8e8e" stroke-width="0.7" stroke-linejoin="round" stroke-linecap="round"/>
<path d="M1114.6,704.7 L1115.8,697.7 L1041.6,717.7 L1040.6,723.5Z" fill="#909090" stroke="#909090" stroke-width="0.7" stroke-linejoin="round" stroke-linecap="round"/>
<path d="M1115.8,697.7 L1116.7,690.7 L1042.4,711.9 L1041.6,717.7Z" fill="#939393" stroke="#939393" stroke-width="0.7" stroke-linejoin="round" stroke-linecap="round"/>
<path d="M1116.7,690.7 L1117.4,683.6 L1042.9,706.0 L1042.4,711.9Z" fill="#959595" stroke="#959595" stroke-width="0.7" stroke-linejoin="round" stroke-linecap="round"/>
<path d="M1117.4,683.6 L1117.9,676.5 L1043.3,700.1 L1042.9,706.0Z" fill="#989898" stroke="#989898" stroke-width="0.7" stroke-linejoin="round" stroke-linecap="round"/>
<path d="M1117.9,676.5 L1118.1,669.3 L1043.5,694.1 L1043.3,700.1Z" fill="#9a9a9a" stroke="#9a9a9a" stroke-width="0.7" stroke-linejoin="round" stroke-linecap="round"/>
<path d="M1118.1,669.3 L1118.1,662.1 L1043.6,688.1 L1043.5,694.1Z" fill="#9d9d9d" stroke="#9d9d9d" stroke-width="0.7" stroke-linejoin="round" stroke-linecap="round"/>
<path d="M1118.1,662.1 L1117.9,654.9 L1043.4,682.1 L1043.6,688.1Z" fill="#9f9f9f" stroke="#9f9f9f" stroke-width="0.7" stroke-linejoin="round" stroke-linecap="round"/>
<path d="M1117.9,654.9 L1117.5,647.6 L1043.0,676.0 L1043.4,682.1Z" fill="#a1a1a1" stroke="#a1a1a1" stroke-width="0.7" stroke-linejoin="round" stroke-linecap="round"/>
<path d="M1117.5,647.6 L1116.8,640.2 L1042.5,669.9 L1043.0,676.0Z" fill="#a4a4a4" stroke="#a4a4a4" stroke-width="0.7" stroke-linejoin="round" stroke-linecap="round"/>
<path d="M1116.8,640.2 L1116.0,632.9 L1041.8,663.8 L1042.5,669.9Z" fill="#a6a6a6" stroke="#a6a6a6" stroke-width="0.7" stroke-linejoin="round" stroke-linecap="round"/>
<path d="M1116.0,632.9 L1114.9,625.5 L1040.8,657.7 L1041.8,663.8Z" fill="#a8a8a8" stroke="#a8a8a8" stroke-width="0.7" stroke-linejoin="round" stroke-linecap="round"/>
<path d="M1114.9,625.5 L1113.5,618.1 L1039.7,651.5 L1040.8,657.7Z" fill="#ababab" stroke="#ababab" stroke-width="0.7" stroke-linejoin="round" stroke-linecap="round"/>
<path d="M1113.5,618.1 L1112.0,610.7 L1038.4,645.4 L1039.7,651.5Z" fill="#adadad" stroke="#adadad" stroke-width="0.7" stroke-linejoin="round" stroke-linecap="round"/>
<path d="M1112.0,610.7 L1110.2,603.3 L1037.0,639.2 L1038.4,645.4Z" fill="#afafaf" stroke="#afafaf" stroke-width="0.7" stroke-linejoin="round" stroke-linecap="round"/>
<path d="M1110.2,603.3 L1108.2,595.9 L1035.3,633.0 L1037.0,639.2Z" fill="#b1b1b1" stroke="#b1b1b1" stroke-width="0.7" stroke-linejoin="round" stroke-linecap="round"/>
<path d="M1108.2,595.9 L1106.0,588.5 L1033.5,626.9 L1035.3,633.0Z" fill="#b3b3b3" stroke="#b3b3b3" stroke-width="0.7" stroke-linejoin="round" stroke-linecap="round"/>
<path d="M1106.0,588.5 L1103.5,581.1 L1031.4,620.7 L1033.5,626.9Z" fill="#b5b5b5" stroke="#b5b5b5" stroke-width="0.7" stroke-linejoin="round" stroke-linecap="round"/>
<path d="M1103.5,581.1 L1100.9,573.7 L1029.2,614.6 L1031.4,620.7Z" fill="#b6b6b6" stroke="#b6b6b6" stroke-width="0.7" stroke-linejoin="round" stroke-linecap="round"/>
<path d="M1100.9,573.7 L1098.0,566.3 L1026.9,608.5 L1029.2,614.6Z" fill="#b8b8b8" stroke="#b8b8b8" stroke-width="0.7" stroke-linejoin="round" stroke-linecap="round"/>
<path d="M1098.0,566.3 L1095.0,559.0 L1024.3,602.4 L1026.9,608.5Z" fill="#b9b9b9" stroke="#b9b9b9" stroke-width="0.7" stroke-linejoin="round" stroke-linecap="round"/>
<path d="M1095.0,559.0 L1091.7,551.7 L1021.6,596.3 L1024.3,602.4Z" fill="#bbbbbb" stroke="#bbbbbb" stroke-width="0.7" stroke-linejoin="round" stroke-linecap="round"/>
<path d="M1091.7,551.7 L1088.2,544.4 L1018.7,590.3 L1021.6,596.3Z" fill="#bcbcbc" stroke="#bcbcbc" stroke-width="0.7" stroke-linejoin="round" stroke-linecap="round"/>
<path d="M1088.2,544.4 L1084.5,537.2 L1015.6,584.3 L1018.7,590.3Z" fill="#bdbdbd" stroke="#bdbdbd" stroke-width="0.7" stroke-linejoin="round" stroke-linecap="round"/>
<path d="M1084.5,537.2 L1080.6,530.0 L1012.3,578.3 L1015.6,584.3Z" fill="#bfbfbf" stroke="#bfbfbf" stroke-width="0.7" stroke-linejoin="round" stroke-linecap="round"/>
<path d="M1080.6,530.0 L1076.4,522.9 L1008.9,572.4 L1012.3,578.3Z" fill="#c0c0c0" stroke="#c0c0c0" stroke-width="0.7" stroke-linejoin="round" stroke-linecap="round"/>
<path d="M1076.4,522.9 L1072.1,515.8 L1005.3,566.5 L1008.9,572.4Z" fill="#c1c1c1" stroke="#c1c1c1" stroke-width="0.7" stroke-linejoin="round" stroke-linecap="round"/>
<path d="M1072.1,515.8 L1067.6,508.8 L1001.6,560.6 L1005.3,566.5Z" fill="#c3c3c3" stroke="#c3c3c3" stroke-width="0.7" stroke-linejoin="round" stroke-linecap="round"/>
<path d="M1067.6,508.8 L1062.9,501.8 L997.7,554.8 L1001.6,560.6Z" fill="#c4c4c4" stroke="#c4c4c4" stroke-width="0.7" stroke-linejoin="round" stroke-linecap="round"/>
<path d="M1062.9,501.8 L1058.1,494.9 L993.6,549.1 L997.7,554.8Z" fill="#c5c5c5" stroke="#c5c5c5" stroke-width="0.7" stroke-linejoin="round" stroke-linecap="round"/>
<path d="M1058.1,494.9 L1053.0,488.1 L989.4,543.4 L993.6,549.1Z" fill="#c6c6c6" stroke="#c6c6c6" stroke-width="0.7" stroke-linejoin="round" stroke-linecap="round"/>
<path d="M1053.0,488.1 L1047.8,481.3 L985.1,537.8 L989.4,543.4Z" fill="#c7c7c7" stroke="#c7c7c7" stroke-width="0.7" stroke-linejoin="round" stroke-linecap="round"/>
<path d="M1047.8,481.3 L1042.3,474.7 L980.6,532.3 L985.1,537.8Z" fill="#c8c8c8" stroke="#c8c8c8" stroke-width="0.7" stroke-linejoin="round" stroke-linecap="round"/>
<path d="M1042.3,474.7 L1036.7,468.1 L975.9,526.8 L980.6,532.3Z" fill="#c9c9c9" stroke="#c9c9c9" stroke-width="0.7" stroke-linejoin="round" stroke-linecap="round"/>
<path d="M1036.7,468.1 L1031.0,461.6 L971.1,521.5 L975.9,526.8Z" fill="#cacaca" stroke="#cacaca" stroke-width="0.7" stroke-linejoin="round" stroke-linecap="round"/>
<path d="M1031.0,461.6 L1025.0,455.2 L966.2,516.2 L971.1,521.5Z" fill="#cbcbcb" stroke="#cbcbcb" stroke-width="0.7" stroke-linejoin="round" stroke-linecap="round"/>
<path d="M1025.0,455.2 L1018.9,449.0 L961.1,510.9 L966.2,516.2Z" fill="#cccccc" stroke="#cccccc" stroke-width="0.7" stroke-linejoin="round" stroke-linecap="round"/>
<path d="M1018.9,449.0 L1012.7,442.8 L955.9,505.8 L961.1,510.9Z" fill="#cccccc" stroke="#cccccc" stroke-width="0.7" stroke-linejoin="round" stroke-linecap="round"/>
<path d="M1012.7,442.8 L1006.2,436.7 L950.6,500.8 L955.9,505.8Z" fill="#cdcdcd" stroke="#cdcdcd" stroke-width="0.7" stroke-linejoin="round" stroke-linecap="round"/>
<path d="M1006.2,436.7 L999.7,430.8 L993.0,424.9 L986.1,419.2 L979.1,413.6 L972.0,408.2 L964.8,402.8 L957.4,397.7 L949.9,392.6 L942.3,387.7 L934.6,382.9 L926.8,378.3 L918.9,373.9 L911.0,369.6 L902.9,365.4 L894.7,361.5 L886.5,357.7 L878.2,354.0 L869.9,350.5 L861.5,347.2 L853.0,344.1 L844.5,341.2 L836.0,338.4 L827.4,335.8 L818.8,333.4 L810.2,331.2 L801.5,329.1 L792.9,327.3 L784.2,325.6 L775.6,324.1 L766.9,322.9 L758.3,321.8 L749.7,320.9 L741.1,320.2 L732.6,319.7 L724.1,319.3 L715.6,319.2 L707.2,319.3 L698.8,319.6 L690.5,320.0 L682.3,320.7 L674.1,321.5 L666.0,322.5 L658.0,323.8 L650.1,325.2 L642.3,326.8 L634.6,328.6 L627.0,330.6 L619.5,332.8 L612.1,335.1 L604.8,337.7 L597.7,340.4 L590.6,343.3 L583.8,346.4 L577.0,349.6 L570.4,353.0 L564.0,356.6 L557.7,360.4 L551.6,364.3 L545.6,368.4 L539.8,372.7 L534.1,377.1 L528.7,381.7 L523.4,386.4 L518.3,391.2 L513.4,396.2 L508.6,401.4 L504.1,406.7 L499.7,412.1 L495.6,417.7 L491.7,423.3 L487.9,429.1 L484.4,435.1 L481.0,441.1 L477.9,447.3 L475.0,453.5 L472.3,459.9 L469.8,466.3 L467.6,472.9 L465.5,479.5 L463.7,486.2 L462.1,493.0 L460.7,499.9 L459.6,506.8 L458.6,513.8 L457.9,520.9 L457.5,528.0 L457.2,535.2 L457.2,542.4 L457.4,549.7 L457.8,557.0 L458.5,564.3 L459.4,571.7 L460.5,579.0 L461.8,586.4 L463.3,593.8 L465.1,601.2 L467.1,608.7 L469.3,616.1 L471.8,623.5 L474.4,630.8 L477.3,638.2 L480.4,645.5 L483.7,652.8 L487.2,660.1 L490.9,667.4 L494.8,674.5 L498.9,681.7 L503.2,688.8 L507.7,695.8 L512.4,702.8 L517.3,709.6 L522.3,716.5 L527.6,723.2 L533.0,729.9 L538.6,736.4 L544.4,742.9 L550.3,749.3 L556.4,755.6 L562.7,761.7 L569.1,767.8 L575.6,773.8 L582.4,779.6 L589.2,785.3 L596.2,790.9 L603.3,796.4 L610.6,801.7 L617.9,806.9 L625.4,811.9 L633.0,816.8 L640.7,821.6 L648.5,826.2 L656.4,830.7 L664.4,835.0 L672.4,839.1 L680.6,843.1 L688.8,846.9 L697.1,850.5 L705.4,854.0 L713.8,857.3 L722.3,860.4 L730.8,863.4 L739.4,866.2 L747.9,868.7 L756.5,871.2 L765.2,873.4 L773.8,875.4 L782.4,877.3 L791.1,878.9 L799.7,880.4 L808.4,881.7 L817.0,882.8 L825.6,883.7 L834.2,884.4 L842.7,884.9 L851.3,885.2 L859.7,885.3 L868.1,885.2 L876.5,885.0 L884.8,884.5 L893.0,883.9 L901.2,883.0 L909.3,882.0 L917.3,880.8 L925.2,879.3 L933.0,877.7 L940.7,875.9 L948.4,874.0 L955.9,871.8 L963.3,869.4 L970.5,866.9 L977.7,864.2 L984.7,861.3 L991.6,858.2 L998.3,854.9 L1004.9,851.5 L1011.3,847.9 L1017.6,844.1 L1023.8,840.2 L1029.7,836.1 L1035.5,831.9 L1041.2,827.5 L1046.6,822.9 L1051.9,818.2 L1057.0,813.3 L1062.0,808.3 L1066.7,803.1 L1071.2,797.9 L1075.6,792.4 L1079.7,786.9 L1083.7,781.2 L1087.4,775.4 L1091.0,769.5 L1094.3,763.4 L1097.4,757.3 L1100.3,751.0 L1103.0,744.7 L1105.5,738.2 L1107.8,731.7 L1109.8,725.1 L1111.6,718.3 L1113.2,711.5 L1114.6,704.7 L1115.8,697.7 L1116.7,690.7 L1117.4,683.6 L1117.9,676.5 L1118.1,669.3 L1118.1,662.1 L1117.9,654.9 L1117.5,647.6 L1116.8,640.2 L1116.0,632.9 L1114.9,625.5 L1113.5,618.1 L1112.0,610.7 L1110.2,603.3 L1108.2,595.9 L1106.0,588.5 L1103.5,581.1 L1100.9,573.7 L1098.0,566.3 L1095.0,559.0 L1091.7,551.7 L1088.2,544.4 L1084.5,537.2 L1080.6,530.0 L1076.4,522.9 L1072.1,515.8 L1067.6,508.8 L1062.9,501.8 L1058.1,494.9 L1053.0,488.1 L1047.8,481.3 L1042.3,474.7 L1036.7,468.1 L1031.0,461.6 L1025.0,455.2 L1018.9,449.0 L1012.7,442.8 L1006.2,436.7Z" fill="none" stroke="#161616" stroke-width="1.85" stroke-linejoin="round" stroke-linecap="round"/>
<clipPath id="cC"><path d="M950.6,500.8 L944.0,494.8 L937.3,489.1 L930.4,483.4 L923.3,477.9 L916.1,472.6 L908.7,467.4 L901.2,462.5 L893.6,457.6 L885.9,453.0 L878.0,448.5 L870.0,444.3 L862.0,440.2 L853.8,436.3 L845.6,432.6 L837.2,429.1 L828.8,425.9 L820.4,422.8 L811.9,419.9 L803.3,417.3 L794.8,414.9 L786.2,412.7 L777.6,410.7 L768.9,409.0 L760.3,407.4 L751.7,406.1 L743.1,405.1 L734.5,404.2 L726.0,403.6 L717.5,403.2 L709.0,403.1 L700.6,403.2 L692.3,403.5 L684.0,404.1 L675.9,404.9 L667.8,405.9 L659.8,407.1 L652.0,408.6 L644.2,410.3 L636.6,412.2 L629.1,414.4 L621.7,416.7 L614.5,419.3 L607.5,422.1 L600.6,425.1 L593.8,428.4 L587.3,431.8 L580.9,435.4 L574.7,439.3 L568.7,443.3 L562.9,447.5 L557.3,451.9 L551.9,456.5 L546.7,461.3 L541.7,466.3 L537.0,471.4 L532.5,476.7 L528.2,482.1 L524.2,487.7 L520.4,493.5 L516.8,499.4 L513.5,505.4 L510.5,511.6 L507.7,517.9 L505.1,524.3 L502.9,530.8 L500.8,537.4 L499.1,544.1 L497.6,551.0 L496.4,557.9 L495.4,564.8 L494.8,571.9 L494.4,579.0 L494.2,586.2 L494.4,593.4 L494.8,600.7 L495.4,608.0 L496.4,615.4 L497.6,622.7 L499.1,630.1 L500.8,637.5 L502.8,644.9 L505.1,652.3 L507.7,659.6 L510.5,667.0 L513.5,674.3 L516.8,681.6 L520.4,688.8 L524.1,696.0 L528.2,703.2 L532.5,710.2 L537.0,717.2 L541.7,724.2 L546.7,731.0 L551.8,737.7 L557.2,744.4 L562.8,750.9 L568.7,757.4 L574.7,763.7 L580.9,769.9 L587.2,775.9 L593.8,781.9 L600.5,787.7 L607.4,793.3 L614.5,798.8 L621.7,804.1 L629.1,809.3 L636.6,814.3 L644.2,819.1 L651.9,823.7 L659.8,828.2 L667.8,832.4 L675.8,836.5 L684.0,840.4 L692.2,844.1 L700.6,847.6 L709.0,850.8 L717.4,853.9 L725.9,856.8 L734.4,859.4 L743.0,861.8 L751.6,864.0 L760.2,866.0 L768.9,867.8 L777.5,869.3 L786.1,870.6 L794.7,871.6 L803.3,872.5 L811.8,873.1 L820.3,873.5 L828.8,873.6 L837.2,873.5 L845.5,873.2 L853.8,872.6 L861.9,871.9 L870.0,870.8 L878.0,869.6 L885.8,868.1 L893.6,866.4 L901.2,864.5 L908.7,862.4 L916.1,860.0 L923.3,857.4 L930.3,854.6 L937.2,851.6 L944.0,848.3 L950.5,844.9 L956.9,841.3 L963.1,837.4 L969.1,833.4 L974.9,829.2 L980.5,824.8 L985.9,820.2 L991.1,815.4 L996.1,810.4 L1000.8,805.3 L1005.3,800.0 L1009.6,794.6 L1013.6,789.0 L1017.4,783.2 L1021.0,777.3 L1024.3,771.3 L1027.3,765.1 L1030.1,758.8 L1032.7,752.4 L1034.9,745.9 L1037.0,739.3 L1038.7,732.6 L1040.2,725.7 L1041.4,718.8 L1042.4,711.9 L1043.0,704.8 L1043.4,697.7 L1043.6,690.5 L1043.4,683.3 L1043.0,676.0 L1042.4,668.7 L1041.4,661.3 L1040.2,654.0 L1038.7,646.6 L1037.0,639.2 L1035.0,631.8 L1032.7,624.4 L1030.1,617.1 L1027.3,609.7 L1024.3,602.4 L1021.0,595.1 L1017.4,587.9 L1013.6,580.7 L1009.6,573.5 L1005.3,566.5 L1000.8,559.5 L996.1,552.5 L991.1,545.7 L986.0,539.0 L980.6,532.3 L975.0,525.8 L969.1,519.3 L963.1,513.0 L956.9,506.8 L950.6,500.8Z"/></clipPath>
<clipPath id="cD"><path d="M946.9,507.7 L940.4,501.8 L933.6,496.0 L926.7,490.4 L919.7,484.9 L912.5,479.6 L905.1,474.4 L897.6,469.4 L890.0,464.6 L882.2,460.0 L874.4,455.5 L866.4,451.2 L858.3,447.2 L850.2,443.3 L841.9,439.6 L833.6,436.1 L825.2,432.8 L816.8,429.8 L808.3,426.9 L799.7,424.3 L791.1,421.9 L782.5,419.7 L773.9,417.7 L765.3,415.9 L756.7,414.4 L748.0,413.1 L739.4,412.0 L730.9,411.2 L722.3,410.6 L713.8,410.2 L705.4,410.1 L697.0,410.2 L688.7,410.5 L680.4,411.0 L672.3,411.8 L664.2,412.8 L656.2,414.1 L648.3,415.6 L640.6,417.3 L633.0,419.2 L625.5,421.3 L618.1,423.7 L610.9,426.3 L603.8,429.1 L596.9,432.1 L590.2,435.3 L583.6,438.8 L577.3,442.4 L571.1,446.2 L565.1,450.3 L559.3,454.5 L553.6,458.9 L548.3,463.5 L543.1,468.3 L538.1,473.3 L533.4,478.4 L528.9,483.7 L524.6,489.1 L520.5,494.7 L516.7,500.5 L513.2,506.4 L509.9,512.4 L506.8,518.6 L504.0,524.8 L501.5,531.2 L499.2,537.8 L497.2,544.4 L495.5,551.1 L494.0,557.9 L492.8,564.8 L491.8,571.8 L491.1,578.9 L490.7,586.0 L490.6,593.2 L490.7,600.4 L491.1,607.7 L491.8,615.0 L492.8,622.3 L494.0,629.7 L495.5,637.1 L497.2,644.5 L499.2,651.9 L501.5,659.2 L504.0,666.6 L506.8,674.0 L509.9,681.3 L513.2,688.6 L516.7,695.8 L520.5,703.0 L524.6,710.1 L528.8,717.2 L533.3,724.2 L538.1,731.1 L543.0,738.0 L548.2,744.7 L553.6,751.4 L559.2,757.9 L565.0,764.3 L571.0,770.7 L577.2,776.9 L583.6,782.9 L590.2,788.8 L596.9,794.6 L603.8,800.3 L610.9,805.7 L618.1,811.1 L625.4,816.2 L632.9,821.2 L640.6,826.0 L648.3,830.7 L656.2,835.1 L664.1,839.4 L672.2,843.5 L680.4,847.4 L688.6,851.1 L696.9,854.5 L705.3,857.8 L713.8,860.9 L722.3,863.7 L730.8,866.4 L739.4,868.8 L748.0,871.0 L756.6,873.0 L765.2,874.7 L773.9,876.2 L782.5,877.5 L791.1,878.6 L799.7,879.5 L808.2,880.1 L816.7,880.4 L825.2,880.6 L833.6,880.5 L841.9,880.2 L850.1,879.6 L858.3,878.8 L866.4,877.8 L874.3,876.6 L882.2,875.1 L890.0,873.4 L897.6,871.5 L905.1,869.3 L912.4,867.0 L919.6,864.4 L926.7,861.6 L933.6,858.5 L940.3,855.3 L946.9,851.9 L953.3,848.2 L959.5,844.4 L965.5,840.4 L971.3,836.1 L976.9,831.7 L982.3,827.1 L987.5,822.4 L992.4,817.4 L997.2,812.3 L1001.7,807.0 L1006.0,801.5 L1010.0,795.9 L1013.8,790.2 L1017.3,784.3 L1020.7,778.3 L1023.7,772.1 L1026.5,765.8 L1029.0,759.4 L1031.3,752.9 L1033.3,746.3 L1035.1,739.5 L1036.6,732.7 L1037.8,725.8 L1038.7,718.8 L1039.4,711.8 L1039.8,704.7 L1039.9,697.5 L1039.8,690.2 L1039.4,683.0 L1038.7,675.7 L1037.8,668.3 L1036.6,660.9 L1035.1,653.6 L1033.3,646.2 L1031.3,638.8 L1029.0,631.4 L1026.5,624.0 L1023.7,616.7 L1020.7,609.4 L1017.4,602.1 L1013.8,594.8 L1010.0,587.6 L1006.0,580.5 L1001.7,573.4 L997.2,566.4 L992.5,559.5 L987.5,552.7 L982.3,545.9 L976.9,539.3 L971.3,532.7 L965.5,526.3 L959.5,520.0 L953.3,513.8 L946.9,507.7Z"/></clipPath>
<g clip-path="url(#cC)">
<path d="M1020.7,777.9 L1023.5,772.7 L1019.9,779.7 L1017.0,784.8Z" fill="#101010" stroke="#101010" stroke-width="0.7" stroke-linejoin="round" stroke-linecap="round"/>
<path d="M1023.5,772.7 L1026.2,767.5 L1022.6,774.5 L1019.9,779.7Z" fill="#0d0d0d" stroke="#0d0d0d" stroke-width="0.7" stroke-linejoin="round" stroke-linecap="round"/>
<path d="M1026.2,767.5 L1028.7,762.2 L1025.0,769.2 L1022.6,774.5Z" fill="#111111" stroke="#111111" stroke-width="0.7" stroke-linejoin="round" stroke-linecap="round"/>
<path d="M1028.7,762.2 L1031.0,756.8 L1027.3,763.8 L1025.0,769.2Z" fill="#151515" stroke="#151515" stroke-width="0.7" stroke-linejoin="round" stroke-linecap="round"/>
<path d="M1031.0,756.8 L1033.1,751.3 L1029.4,758.3 L1027.3,763.8Z" fill="#181818" stroke="#181818" stroke-width="0.7" stroke-linejoin="round" stroke-linecap="round"/>
<path d="M1033.1,751.3 L1035.0,745.8 L1031.4,752.7 L1029.4,758.3Z" fill="#1c1c1c" stroke="#1c1c1c" stroke-width="0.7" stroke-linejoin="round" stroke-linecap="round"/>
<path d="M1035.0,745.8 L1036.7,740.1 L1033.1,747.1 L1031.4,752.7Z" fill="#1f1f1f" stroke="#1f1f1f" stroke-width="0.7" stroke-linejoin="round" stroke-linecap="round"/>
<path d="M1036.7,740.1 L1038.3,734.4 L1034.6,741.4 L1033.1,747.1Z" fill="#232323" stroke="#232323" stroke-width="0.7" stroke-linejoin="round" stroke-linecap="round"/>
<path d="M1038.3,734.4 L1039.6,728.6 L1036.0,735.6 L1034.6,741.4Z" fill="#272727" stroke="#272727" stroke-width="0.7" stroke-linejoin="round" stroke-linecap="round"/>
<path d="M1039.6,728.6 L1040.7,722.8 L1037.1,729.8 L1036.0,735.6Z" fill="#2a2a2a" stroke="#2a2a2a" stroke-width="0.7" stroke-linejoin="round" stroke-linecap="round"/>
<path d="M1040.7,722.8 L1041.7,716.9 L1038.1,723.9 L1037.1,729.8Z" fill="#2e2e2e" stroke="#2e2e2e" stroke-width="0.7" stroke-linejoin="round" stroke-linecap="round"/>
<path d="M1041.7,716.9 L1042.5,710.9 L1038.8,717.9 L1038.1,723.9Z" fill="#313131" stroke="#313131" stroke-width="0.7" stroke-linejoin="round" stroke-linecap="round"/>
<path d="M1042.5,710.9 L1043.0,704.9 L1039.4,711.9 L1038.8,717.9Z" fill="#353535" stroke="#353535" stroke-width="0.7" stroke-linejoin="round" stroke-linecap="round"/>
<path d="M1043.0,704.9 L1043.4,698.9 L1039.8,705.8 L1039.4,711.9Z" fill="#383838" stroke="#383838" stroke-width="0.7" stroke-linejoin="round" stroke-linecap="round"/>
<path d="M1043.4,698.9 L1043.6,692.7 L1039.9,699.7 L1039.8,705.8Z" fill="#3b3b3b" stroke="#3b3b3b" stroke-width="0.7" stroke-linejoin="round" stroke-linecap="round"/>
<path d="M1043.6,692.7 L1043.5,686.6 L1039.9,693.6 L1039.9,699.7Z" fill="#3f3f3f" stroke="#3f3f3f" stroke-width="0.7" stroke-linejoin="round" stroke-linecap="round"/>
<path d="M1043.5,686.6 L1043.3,680.4 L1039.7,687.4 L1039.9,693.6Z" fill="#424242" stroke="#424242" stroke-width="0.7" stroke-linejoin="round" stroke-linecap="round"/>
<path d="M1043.3,680.4 L1042.9,674.2 L1039.3,681.2 L1039.7,687.4Z" fill="#454545" stroke="#454545" stroke-width="0.7" stroke-linejoin="round" stroke-linecap="round"/>
<path d="M1042.9,674.2 L1042.3,668.0 L1038.7,675.0 L1039.3,681.2Z" fill="#494949" stroke="#494949" stroke-width="0.7" stroke-linejoin="round" stroke-linecap="round"/>
<path d="M1042.3,668.0 L1041.5,661.7 L1037.8,668.7 L1038.7,675.0Z" fill="#4c4c4c" stroke="#4c4c4c" stroke-width="0.7" stroke-linejoin="round" stroke-linecap="round"/>
<path d="M1041.5,661.7 L1040.5,655.5 L1036.8,662.4 L1037.8,668.7Z" fill="#4f4f4f" stroke="#4f4f4f" stroke-width="0.7" stroke-linejoin="round" stroke-linecap="round"/>
<path d="M1040.5,655.5 L1039.3,649.2 L1035.6,656.1 L1036.8,662.4Z" fill="#525252" stroke="#525252" stroke-width="0.7" stroke-linejoin="round" stroke-linecap="round"/>
<path d="M1039.3,649.2 L1037.9,642.9 L1034.2,649.9 L1035.6,656.1Z" fill="#555555" stroke="#555555" stroke-width="0.7" stroke-linejoin="round" stroke-linecap="round"/>
<path d="M1037.9,642.9 L1036.3,636.6 L1032.7,643.6 L1034.2,649.9Z" fill="#585858" stroke="#585858" stroke-width="0.7" stroke-linejoin="round" stroke-linecap="round"/>
<path d="M1036.3,636.6 L1034.5,630.3 L1030.9,637.3 L1032.7,643.6Z" fill="#5b5b5b" stroke="#5b5b5b" stroke-width="0.7" stroke-linejoin="round" stroke-linecap="round"/>
<path d="M1034.5,630.3 L1032.5,624.0 L1028.9,631.0 L1030.9,637.3Z" fill="#5e5e5e" stroke="#5e5e5e" stroke-width="0.7" stroke-linejoin="round" stroke-linecap="round"/>
<path d="M1032.5,624.0 L1030.4,617.7 L1026.8,624.7 L1028.9,631.0Z" fill="#616161" stroke="#616161" stroke-width="0.7" stroke-linejoin="round" stroke-linecap="round"/>
<path d="M1030.4,617.7 L1028.0,611.5 L1024.4,618.4 L1026.8,624.7Z" fill="#646464" stroke="#646464" stroke-width="0.7" stroke-linejoin="round" stroke-linecap="round"/>
<path d="M1028.0,611.5 L1025.5,605.2 L1021.9,612.2 L1024.4,618.4Z" fill="#676767" stroke="#676767" stroke-width="0.7" stroke-linejoin="round" stroke-linecap="round"/>
<path d="M1025.5,605.2 L1022.8,599.0 L1019.2,606.0 L1021.9,612.2Z" fill="#696969" stroke="#696969" stroke-width="0.7" stroke-linejoin="round" stroke-linecap="round"/>
<path d="M1022.8,599.0 L1019.9,592.8 L1016.3,599.8 L1019.2,606.0Z" fill="#6c6c6c" stroke="#6c6c6c" stroke-width="0.7" stroke-linejoin="round" stroke-linecap="round"/>
<path d="M1019.9,592.8 L1016.8,586.6 L1013.2,593.6 L1016.3,599.8Z" fill="#6e6e6e" stroke="#6e6e6e" stroke-width="0.7" stroke-linejoin="round" stroke-linecap="round"/>
<path d="M1016.8,586.6 L1013.6,580.5 L1009.9,587.5 L1013.2,593.6Z" fill="#717171" stroke="#717171" stroke-width="0.7" stroke-linejoin="round" stroke-linecap="round"/>
<path d="M1013.6,580.5 L1010.1,574.4 L1006.5,581.4 L1009.9,587.5Z" fill="#737373" stroke="#737373" stroke-width="0.7" stroke-linejoin="round" stroke-linecap="round"/>
<path d="M1010.1,574.4 L1006.5,568.4 L1002.9,575.4 L1006.5,581.4Z" fill="#767676" stroke="#767676" stroke-width="0.7" stroke-linejoin="round" stroke-linecap="round"/>
<path d="M1006.5,568.4 L1002.8,562.4 L999.1,569.4 L1002.9,575.4Z" fill="#787878" stroke="#787878" stroke-width="0.7" stroke-linejoin="round" stroke-linecap="round"/>
<path d="M1002.8,562.4 L998.8,556.5 L995.2,563.5 L999.1,569.4Z" fill="#7a7a7a" stroke="#7a7a7a" stroke-width="0.7" stroke-linejoin="round" stroke-linecap="round"/>
<path d="M998.8,556.5 L994.7,550.6 L991.1,557.6 L995.2,563.5Z" fill="#7c7c7c" stroke="#7c7c7c" stroke-width="0.7" stroke-linejoin="round" stroke-linecap="round"/>
<path d="M994.7,550.6 L990.5,544.8 L986.8,551.8 L991.1,557.6Z" fill="#7e7e7e" stroke="#7e7e7e" stroke-width="0.7" stroke-linejoin="round" stroke-linecap="round"/>
<path d="M990.5,544.8 L986.0,539.1 L982.4,546.0 L986.8,551.8Z" fill="#808080" stroke="#808080" stroke-width="0.7" stroke-linejoin="round" stroke-linecap="round"/>
<path d="M986.0,539.1 L981.5,533.4 L977.8,540.4 L982.4,546.0Z" fill="#828282" stroke="#828282" stroke-width="0.7" stroke-linejoin="round" stroke-linecap="round"/>
<path d="M981.5,533.4 L976.7,527.8 L973.1,534.8 L977.8,540.4Z" fill="#848484" stroke="#848484" stroke-width="0.7" stroke-linejoin="round" stroke-linecap="round"/>
<path d="M976.7,527.8 L971.8,522.3 L968.2,529.3 L973.1,534.8Z" fill="#858585" stroke="#858585" stroke-width="0.7" stroke-linejoin="round" stroke-linecap="round"/>
<path d="M971.8,522.3 L966.8,516.8 L963.2,523.8 L968.2,529.3Z" fill="#878787" stroke="#878787" stroke-width="0.7" stroke-linejoin="round" stroke-linecap="round"/>
<path d="M966.8,516.8 L961.6,511.5 L958.0,518.5 L963.2,523.8Z" fill="#888888" stroke="#888888" stroke-width="0.7" stroke-linejoin="round" stroke-linecap="round"/>
<path d="M961.6,511.5 L956.3,506.2 L952.7,513.2 L958.0,518.5Z" fill="#8a8a8a" stroke="#8a8a8a" stroke-width="0.7" stroke-linejoin="round" stroke-linecap="round"/>
<path d="M956.3,506.2 L950.9,501.1 L947.3,508.1 L952.7,513.2Z" fill="#8b8b8b" stroke="#8b8b8b" stroke-width="0.7" stroke-linejoin="round" stroke-linecap="round"/>
<path d="M950.9,501.1 L945.3,496.0 L941.7,503.0 L947.3,508.1Z" fill="#8c8c8c" stroke="#8c8c8c" stroke-width="0.7" stroke-linejoin="round" stroke-linecap="round"/>
<path d="M945.3,496.0 L939.6,491.1 L936.0,498.0 L941.7,503.0Z" fill="#8d8d8d" stroke="#8d8d8d" stroke-width="0.7" stroke-linejoin="round" stroke-linecap="round"/>
<path d="M939.6,491.1 L933.8,486.2 L930.2,493.2 L936.0,498.0Z" fill="#8e8e8e" stroke="#8e8e8e" stroke-width="0.7" stroke-linejoin="round" stroke-linecap="round"/>
<path d="M933.8,486.2 L927.9,481.5 L924.3,488.4 L930.2,493.2Z" fill="#8f8f8f" stroke="#8f8f8f" stroke-width="0.7" stroke-linejoin="round" stroke-linecap="round"/>
<path d="M927.9,481.5 L921.8,476.8 L918.2,483.8 L924.3,488.4Z" fill="#909090" stroke="#909090" stroke-width="0.7" stroke-linejoin="round" stroke-linecap="round"/>
<path d="M921.8,476.8 L915.7,472.3 L912.0,479.3 L918.2,483.8Z" fill="#919191" stroke="#919191" stroke-width="0.7" stroke-linejoin="round" stroke-linecap="round"/>
<path d="M915.7,472.3 L909.4,467.9 L905.8,474.9 L912.0,479.3Z" fill="#929292" stroke="#929292" stroke-width="0.7" stroke-linejoin="round" stroke-linecap="round"/>
<path d="M909.4,467.9 L903.0,463.6 L899.4,470.6 L905.8,474.9Z" fill="#929292" stroke="#929292" stroke-width="0.7" stroke-linejoin="round" stroke-linecap="round"/>
<path d="M903.0,463.6 L896.6,459.5 L893.0,466.4 L899.4,470.6Z" fill="#939393" stroke="#939393" stroke-width="0.7" stroke-linejoin="round" stroke-linecap="round"/>
<path d="M896.6,459.5 L890.0,455.4 L886.4,462.4 L893.0,466.4Z" fill="#939393" stroke="#939393" stroke-width="0.7" stroke-linejoin="round" stroke-linecap="round"/>
<path d="M890.0,455.4 L883.4,451.6 L879.8,458.5 L886.4,462.4Z" fill="#939393" stroke="#939393" stroke-width="0.7" stroke-linejoin="round" stroke-linecap="round"/>
<path d="M883.4,451.6 L876.7,447.8 L873.0,454.8 L879.8,458.5Z" fill="#949494" stroke="#949494" stroke-width="0.7" stroke-linejoin="round" stroke-linecap="round"/>
<path d="M876.7,447.8 L869.9,444.2 L866.2,451.1 L873.0,454.8Z" fill="#949494" stroke="#949494" stroke-width="0.7" stroke-linejoin="round" stroke-linecap="round"/>
<path d="M869.9,444.2 L863.0,440.7 L859.4,447.7 L866.2,451.1Z" fill="#949494" stroke="#949494" stroke-width="0.7" stroke-linejoin="round" stroke-linecap="round"/>
<path d="M863.0,440.7 L856.1,437.3 L852.4,444.3 L859.4,447.7Z" fill="#949494" stroke="#949494" stroke-width="0.7" stroke-linejoin="round" stroke-linecap="round"/>
<path d="M856.1,437.3 L849.1,434.1 L845.4,441.1 L852.4,444.3Z" fill="#939393" stroke="#939393" stroke-width="0.7" stroke-linejoin="round" stroke-linecap="round"/>
<path d="M849.1,434.1 L842.0,431.1 L838.4,438.1 L845.4,441.1Z" fill="#939393" stroke="#939393" stroke-width="0.7" stroke-linejoin="round" stroke-linecap="round"/>
<path d="M842.0,431.1 L834.9,428.2 L831.3,435.2 L838.4,438.1Z" fill="#939393" stroke="#939393" stroke-width="0.7" stroke-linejoin="round" stroke-linecap="round"/>
<path d="M834.9,428.2 L827.7,425.4 L824.1,432.4 L831.3,435.2Z" fill="#929292" stroke="#929292" stroke-width="0.7" stroke-linejoin="round" stroke-linecap="round"/>
<path d="M827.7,425.4 L820.5,422.8 L816.9,429.8 L824.1,432.4Z" fill="#929292" stroke="#929292" stroke-width="0.7" stroke-linejoin="round" stroke-linecap="round"/>
<path d="M820.5,422.8 L813.3,420.4 L809.7,427.4 L816.9,429.8Z" fill="#919191" stroke="#919191" stroke-width="0.7" stroke-linejoin="round" stroke-linecap="round"/>
<path d="M813.3,420.4 L806.0,418.1 L802.4,425.1 L809.7,427.4Z" fill="#909090" stroke="#909090" stroke-width="0.7" stroke-linejoin="round" stroke-linecap="round"/>
<path d="M806.0,418.1 L798.7,416.0 L795.1,422.9 L802.4,425.1Z" fill="#8f8f8f" stroke="#8f8f8f" stroke-width="0.7" stroke-linejoin="round" stroke-linecap="round"/>
<path d="M798.7,416.0 L791.4,414.0 L787.8,421.0 L795.1,422.9Z" fill="#8e8e8e" stroke="#8e8e8e" stroke-width="0.7" stroke-linejoin="round" stroke-linecap="round"/>
<path d="M791.4,414.0 L784.1,412.2 L780.4,419.2 L787.8,421.0Z" fill="#8d8d8d" stroke="#8d8d8d" stroke-width="0.7" stroke-linejoin="round" stroke-linecap="round"/>
<path d="M784.1,412.2 L776.7,410.5 L773.1,417.5 L780.4,419.2Z" fill="#8c8c8c" stroke="#8c8c8c" stroke-width="0.7" stroke-linejoin="round" stroke-linecap="round"/>
<path d="M776.7,410.5 L769.4,409.0 L765.8,416.0 L773.1,417.5Z" fill="#8b8b8b" stroke="#8b8b8b" stroke-width="0.7" stroke-linejoin="round" stroke-linecap="round"/>
<path d="M769.4,409.0 L762.0,407.7 L758.4,414.7 L765.8,416.0Z" fill="#8a8a8a" stroke="#8a8a8a" stroke-width="0.7" stroke-linejoin="round" stroke-linecap="round"/>
<path d="M762.0,407.7 L754.7,406.6 L751.1,413.5 L758.4,414.7Z" fill="#888888" stroke="#888888" stroke-width="0.7" stroke-linejoin="round" stroke-linecap="round"/>
<path d="M754.7,406.6 L747.3,405.6 L743.7,412.5 L751.1,413.5Z" fill="#878787" stroke="#878787" stroke-width="0.7" stroke-linejoin="round" stroke-linecap="round"/>
<path d="M747.3,405.6 L740.0,404.7 L736.4,411.7 L743.7,412.5Z" fill="#858585" stroke="#858585" stroke-width="0.7" stroke-linejoin="round" stroke-linecap="round"/>
<path d="M740.0,404.7 L732.7,404.1 L729.1,411.1 L736.4,411.7Z" fill="#848484" stroke="#848484" stroke-width="0.7" stroke-linejoin="round" stroke-linecap="round"/>
<path d="M732.7,404.1 L725.5,403.6 L721.8,410.6 L729.1,411.1Z" fill="#828282" stroke="#828282" stroke-width="0.7" stroke-linejoin="round" stroke-linecap="round"/>
<path d="M725.5,403.6 L718.2,403.3 L714.6,410.2 L721.8,410.6Z" fill="#808080" stroke="#808080" stroke-width="0.7" stroke-linejoin="round" stroke-linecap="round"/>
<path d="M718.2,403.3 L711.0,403.1 L707.4,410.1 L714.6,410.2Z" fill="#7e7e7e" stroke="#7e7e7e" stroke-width="0.7" stroke-linejoin="round" stroke-linecap="round"/>
<path d="M711.0,403.1 L703.8,403.1 L700.2,410.1 L707.4,410.1Z" fill="#7c7c7c" stroke="#7c7c7c" stroke-width="0.7" stroke-linejoin="round" stroke-linecap="round"/>
<path d="M703.8,403.1 L696.7,403.3 L693.1,410.3 L700.2,410.1Z" fill="#7a7a7a" stroke="#7a7a7a" stroke-width="0.7" stroke-linejoin="round" stroke-linecap="round"/>
<path d="M696.7,403.3 L689.7,403.7 L686.0,410.6 L693.1,410.3Z" fill="#787878" stroke="#787878" stroke-width="0.7" stroke-linejoin="round" stroke-linecap="round"/>
<path d="M689.7,403.7 L682.7,404.2 L679.0,411.2 L686.0,410.6Z" fill="#767676" stroke="#767676" stroke-width="0.7" stroke-linejoin="round" stroke-linecap="round"/>
<path d="M682.7,404.2 L675.7,404.9 L672.1,411.8 L679.0,411.2Z" fill="#737373" stroke="#737373" stroke-width="0.7" stroke-linejoin="round" stroke-linecap="round"/>
<path d="M675.7,404.9 L668.8,405.7 L665.2,412.7 L672.1,411.8Z" fill="#717171" stroke="#717171" stroke-width="0.7" stroke-linejoin="round" stroke-linecap="round"/>
<path d="M668.8,405.7 L662.0,406.7 L658.4,413.7 L665.2,412.7Z" fill="#6e6e6e" stroke="#6e6e6e" stroke-width="0.7" stroke-linejoin="round" stroke-linecap="round"/>
<path d="M662.0,406.7 L655.3,407.9 L651.7,414.9 L658.4,413.7Z" fill="#6c6c6c" stroke="#6c6c6c" stroke-width="0.7" stroke-linejoin="round" stroke-linecap="round"/>
<path d="M655.3,407.9 L648.6,409.3 L645.0,416.3 L651.7,414.9Z" fill="#696969" stroke="#696969" stroke-width="0.7" stroke-linejoin="round" stroke-linecap="round"/>
<path d="M648.6,409.3 L642.1,410.8 L638.4,417.8 L645.0,416.3Z" fill="#676767" stroke="#676767" stroke-width="0.7" stroke-linejoin="round" stroke-linecap="round"/>
<path d="M642.1,410.8 L635.6,412.5 L632.0,419.5 L638.4,417.8Z" fill="#646464" stroke="#646464" stroke-width="0.7" stroke-linejoin="round" stroke-linecap="round"/>
<path d="M635.6,412.5 L629.2,414.3 L625.6,421.3 L632.0,419.5Z" fill="#616161" stroke="#616161" stroke-width="0.7" stroke-linejoin="round" stroke-linecap="round"/>
<path d="M629.2,414.3 L622.9,416.3 L619.3,423.3 L625.6,421.3Z" fill="#5e5e5e" stroke="#5e5e5e" stroke-width="0.7" stroke-linejoin="round" stroke-linecap="round"/>
<path d="M622.9,416.3 L616.8,418.5 L613.1,425.5 L619.3,423.3Z" fill="#5b5b5b" stroke="#5b5b5b" stroke-width="0.7" stroke-linejoin="round" stroke-linecap="round"/>
<path d="M616.8,418.5 L610.7,420.8 L607.1,427.8 L613.1,425.5Z" fill="#585858" stroke="#585858" stroke-width="0.7" stroke-linejoin="round" stroke-linecap="round"/>
<path d="M610.7,420.8 L604.7,423.3 L601.1,430.2 L607.1,427.8Z" fill="#555555" stroke="#555555" stroke-width="0.7" stroke-linejoin="round" stroke-linecap="round"/>
<path d="M604.7,423.3 L598.9,425.9 L595.3,432.9 L601.1,430.2Z" fill="#525252" stroke="#525252" stroke-width="0.7" stroke-linejoin="round" stroke-linecap="round"/>
<path d="M598.9,425.9 L593.2,428.7 L589.6,435.7 L595.3,432.9Z" fill="#4f4f4f" stroke="#4f4f4f" stroke-width="0.7" stroke-linejoin="round" stroke-linecap="round"/>
<path d="M593.2,428.7 L587.6,431.6 L584.0,438.6 L589.6,435.7Z" fill="#4c4c4c" stroke="#4c4c4c" stroke-width="0.7" stroke-linejoin="round" stroke-linecap="round"/>
<path d="M587.6,431.6 L582.2,434.7 L578.5,441.7 L584.0,438.6Z" fill="#494949" stroke="#494949" stroke-width="0.7" stroke-linejoin="round" stroke-linecap="round"/>
<path d="M582.2,434.7 L576.8,437.9 L573.2,444.9 L578.5,441.7Z" fill="#454545" stroke="#454545" stroke-width="0.7" stroke-linejoin="round" stroke-linecap="round"/>
<path d="M576.8,437.9 L571.6,441.3 L568.0,448.2 L573.2,444.9Z" fill="#424242" stroke="#424242" stroke-width="0.7" stroke-linejoin="round" stroke-linecap="round"/>
<path d="M571.6,441.3 L566.6,444.8 L563.0,451.8 L568.0,448.2Z" fill="#3f3f3f" stroke="#3f3f3f" stroke-width="0.7" stroke-linejoin="round" stroke-linecap="round"/>
<path d="M566.6,444.8 L561.7,448.4 L558.1,455.4 L563.0,451.8Z" fill="#3b3b3b" stroke="#3b3b3b" stroke-width="0.7" stroke-linejoin="round" stroke-linecap="round"/>
<path d="M561.7,448.4 L557.0,452.2 L553.3,459.2 L558.1,455.4Z" fill="#383838" stroke="#383838" stroke-width="0.7" stroke-linejoin="round" stroke-linecap="round"/>
<path d="M557.0,452.2 L552.4,456.1 L548.7,463.1 L553.3,459.2Z" fill="#353535" stroke="#353535" stroke-width="0.7" stroke-linejoin="round" stroke-linecap="round"/>
<path d="M552.4,456.1 L547.9,460.2 L544.3,467.1 L548.7,463.1Z" fill="#313131" stroke="#313131" stroke-width="0.7" stroke-linejoin="round" stroke-linecap="round"/>
<path d="M547.9,460.2 L543.6,464.3 L540.0,471.3 L544.3,467.1Z" fill="#2e2e2e" stroke="#2e2e2e" stroke-width="0.7" stroke-linejoin="round" stroke-linecap="round"/>
<path d="M543.6,464.3 L539.5,468.6 L535.9,475.6 L540.0,471.3Z" fill="#2a2a2a" stroke="#2a2a2a" stroke-width="0.7" stroke-linejoin="round" stroke-linecap="round"/>
<path d="M539.5,468.6 L535.5,473.1 L531.9,480.0 L535.9,475.6Z" fill="#272727" stroke="#272727" stroke-width="0.7" stroke-linejoin="round" stroke-linecap="round"/>
<path d="M535.5,473.1 L531.7,477.6 L528.1,484.6 L531.9,480.0Z" fill="#232323" stroke="#232323" stroke-width="0.7" stroke-linejoin="round" stroke-linecap="round"/>
<path d="M531.7,477.6 L528.1,482.3 L524.5,489.2 L528.1,484.6Z" fill="#1f1f1f" stroke="#1f1f1f" stroke-width="0.7" stroke-linejoin="round" stroke-linecap="round"/>
<path d="M528.1,482.3 L524.7,487.0 L521.0,494.0 L524.5,489.2Z" fill="#1c1c1c" stroke="#1c1c1c" stroke-width="0.7" stroke-linejoin="round" stroke-linecap="round"/>
<path d="M524.7,487.0 L521.4,491.9 L517.8,498.9 L521.0,494.0Z" fill="#181818" stroke="#181818" stroke-width="0.7" stroke-linejoin="round" stroke-linecap="round"/>
<path d="M521.4,491.9 L518.3,496.9 L514.7,503.9 L517.8,498.9Z" fill="#151515" stroke="#151515" stroke-width="0.7" stroke-linejoin="round" stroke-linecap="round"/>
<path d="M518.3,496.9 L515.4,502.0 L511.7,508.9 L514.7,503.9Z" fill="#111111" stroke="#111111" stroke-width="0.7" stroke-linejoin="round" stroke-linecap="round"/>
<path d="M515.4,502.0 L512.6,507.1 L509.0,514.1 L511.7,508.9Z" fill="#0d0d0d" stroke="#0d0d0d" stroke-width="0.7" stroke-linejoin="round" stroke-linecap="round"/>
<path d="M512.6,507.1 L510.1,512.4 L506.5,519.4 L509.0,514.1Z" fill="#101010" stroke="#101010" stroke-width="0.7" stroke-linejoin="round" stroke-linecap="round"/>
<path d="M946.9,507.7 L940.4,501.8 L933.6,496.0 L926.7,490.4 L919.7,484.9 L912.5,479.6 L905.1,474.4 L897.6,469.4 L890.0,464.6 L882.2,460.0 L874.4,455.5 L866.4,451.2 L858.3,447.2 L850.2,443.3 L841.9,439.6 L833.6,436.1 L825.2,432.8 L816.8,429.8 L808.3,426.9 L799.7,424.3 L791.1,421.9 L782.5,419.7 L773.9,417.7 L765.3,415.9 L756.7,414.4 L748.0,413.1 L739.4,412.0 L730.9,411.2 L722.3,410.6 L713.8,410.2 L705.4,410.1 L697.0,410.2 L688.7,410.5 L680.4,411.0 L672.3,411.8 L664.2,412.8 L656.2,414.1 L648.3,415.6 L640.6,417.3 L633.0,419.2 L625.5,421.3 L618.1,423.7 L610.9,426.3 L603.8,429.1 L596.9,432.1 L590.2,435.3 L583.6,438.8 L577.3,442.4 L571.1,446.2 L565.1,450.3 L559.3,454.5 L553.6,458.9 L548.3,463.5 L543.1,468.3 L538.1,473.3 L533.4,478.4 L528.9,483.7 L524.6,489.1 L520.5,494.7 L516.7,500.5 L513.2,506.4 L509.9,512.4 L506.8,518.6 L504.0,524.8 L501.5,531.2 L499.2,537.8 L497.2,544.4 L495.5,551.1 L494.0,557.9 L492.8,564.8 L491.8,571.8 L491.1,578.9 L490.7,586.0 L490.6,593.2 L490.7,600.4 L491.1,607.7 L491.8,615.0 L492.8,622.3 L494.0,629.7 L495.5,637.1 L497.2,644.5 L499.2,651.9 L501.5,659.2 L504.0,666.6 L506.8,674.0 L509.9,681.3 L513.2,688.6 L516.7,695.8 L520.5,703.0 L524.6,710.1 L528.8,717.2 L533.3,724.2 L538.1,731.1 L543.0,738.0 L548.2,744.7 L553.6,751.4 L559.2,757.9 L565.0,764.3 L571.0,770.7 L577.2,776.9 L583.6,782.9 L590.2,788.8 L596.9,794.6 L603.8,800.3 L610.9,805.7 L618.1,811.1 L625.4,816.2 L632.9,821.2 L640.6,826.0 L648.3,830.7 L656.2,835.1 L664.1,839.4 L672.2,843.5 L680.4,847.4 L688.6,851.1 L696.9,854.5 L705.3,857.8 L713.8,860.9 L722.3,863.7 L730.8,866.4 L739.4,868.8 L748.0,871.0 L756.6,873.0 L765.2,874.7 L773.9,876.2 L782.5,877.5 L791.1,878.6 L799.7,879.5 L808.2,880.1 L816.7,880.4 L825.2,880.6 L833.6,880.5 L841.9,880.2 L850.1,879.6 L858.3,878.8 L866.4,877.8 L874.3,876.6 L882.2,875.1 L890.0,873.4 L897.6,871.5 L905.1,869.3 L912.4,867.0 L919.6,864.4 L926.7,861.6 L933.6,858.5 L940.3,855.3 L946.9,851.9 L953.3,848.2 L959.5,844.4 L965.5,840.4 L971.3,836.1 L976.9,831.7 L982.3,827.1 L987.5,822.4 L992.4,817.4 L997.2,812.3 L1001.7,807.0 L1006.0,801.5 L1010.0,795.9 L1013.8,790.2 L1017.3,784.3 L1020.7,778.3 L1023.7,772.1 L1026.5,765.8 L1029.0,759.4 L1031.3,752.9 L1033.3,746.3 L1035.1,739.5 L1036.6,732.7 L1037.8,725.8 L1038.7,718.8 L1039.4,711.8 L1039.8,704.7 L1039.9,697.5 L1039.8,690.2 L1039.4,683.0 L1038.7,675.7 L1037.8,668.3 L1036.6,660.9 L1035.1,653.6 L1033.3,646.2 L1031.3,638.8 L1029.0,631.4 L1026.5,624.0 L1023.7,616.7 L1020.7,609.4 L1017.4,602.1 L1013.8,594.8 L1010.0,587.6 L1006.0,580.5 L1001.7,573.4 L997.2,566.4 L992.5,559.5 L987.5,552.7 L982.3,545.9 L976.9,539.3 L971.3,532.7 L965.5,526.3 L959.5,520.0 L953.3,513.8 L946.9,507.7Z" fill="url(#bg)" stroke="#161616" stroke-width="1.85" stroke-linejoin="round" stroke-linecap="round"/>
</g>
<path d="M950.6,500.8 L944.0,494.8 L937.3,489.1 L930.4,483.4 L923.3,477.9 L916.1,472.6 L908.7,467.4 L901.2,462.5 L893.6,457.6 L885.9,453.0 L878.0,448.5 L870.0,444.3 L862.0,440.2 L853.8,436.3 L845.6,432.6 L837.2,429.1 L828.8,425.9 L820.4,422.8 L811.9,419.9 L803.3,417.3 L794.8,414.9 L786.2,412.7 L777.6,410.7 L768.9,409.0 L760.3,407.4 L751.7,406.1 L743.1,405.1 L734.5,404.2 L726.0,403.6 L717.5,403.2 L709.0,403.1 L700.6,403.2 L692.3,403.5 L684.0,404.1 L675.9,404.9 L667.8,405.9 L659.8,407.1 L652.0,408.6 L644.2,410.3 L636.6,412.2 L629.1,414.4 L621.7,416.7 L614.5,419.3 L607.5,422.1 L600.6,425.1 L593.8,428.4 L587.3,431.8 L580.9,435.4 L574.7,439.3 L568.7,443.3 L562.9,447.5 L557.3,451.9 L551.9,456.5 L546.7,461.3 L541.7,466.3 L537.0,471.4 L532.5,476.7 L528.2,482.1 L524.2,487.7 L520.4,493.5 L516.8,499.4 L513.5,505.4 L510.5,511.6 L507.7,517.9 L505.1,524.3 L502.9,530.8 L500.8,537.4 L499.1,544.1 L497.6,551.0 L496.4,557.9 L495.4,564.8 L494.8,571.9 L494.4,579.0 L494.2,586.2 L494.4,593.4 L494.8,600.7 L495.4,608.0 L496.4,615.4 L497.6,622.7 L499.1,630.1 L500.8,637.5 L502.8,644.9 L505.1,652.3 L507.7,659.6 L510.5,667.0 L513.5,674.3 L516.8,681.6 L520.4,688.8 L524.1,696.0 L528.2,703.2 L532.5,710.2 L537.0,717.2 L541.7,724.2 L546.7,731.0 L551.8,737.7 L557.2,744.4 L562.8,750.9 L568.7,757.4 L574.7,763.7 L580.9,769.9 L587.2,775.9 L593.8,781.9 L600.5,787.7 L607.4,793.3 L614.5,798.8 L621.7,804.1 L629.1,809.3 L636.6,814.3 L644.2,819.1 L651.9,823.7 L659.8,828.2 L667.8,832.4 L675.8,836.5 L684.0,840.4 L692.2,844.1 L700.6,847.6 L709.0,850.8 L717.4,853.9 L725.9,856.8 L734.4,859.4 L743.0,861.8 L751.6,864.0 L760.2,866.0 L768.9,867.8 L777.5,869.3 L786.1,870.6 L794.7,871.6 L803.3,872.5 L811.8,873.1 L820.3,873.5 L828.8,873.6 L837.2,873.5 L845.5,873.2 L853.8,872.6 L861.9,871.9 L870.0,870.8 L878.0,869.6 L885.8,868.1 L893.6,866.4 L901.2,864.5 L908.7,862.4 L916.1,860.0 L923.3,857.4 L930.3,854.6 L937.2,851.6 L944.0,848.3 L950.5,844.9 L956.9,841.3 L963.1,837.4 L969.1,833.4 L974.9,829.2 L980.5,824.8 L985.9,820.2 L991.1,815.4 L996.1,810.4 L1000.8,805.3 L1005.3,800.0 L1009.6,794.6 L1013.6,789.0 L1017.4,783.2 L1021.0,777.3 L1024.3,771.3 L1027.3,765.1 L1030.1,758.8 L1032.7,752.4 L1034.9,745.9 L1037.0,739.3 L1038.7,732.6 L1040.2,725.7 L1041.4,718.8 L1042.4,711.9 L1043.0,704.8 L1043.4,697.7 L1043.6,690.5 L1043.4,683.3 L1043.0,676.0 L1042.4,668.7 L1041.4,661.3 L1040.2,654.0 L1038.7,646.6 L1037.0,639.2 L1035.0,631.8 L1032.7,624.4 L1030.1,617.1 L1027.3,609.7 L1024.3,602.4 L1021.0,595.1 L1017.4,587.9 L1013.6,580.7 L1009.6,573.5 L1005.3,566.5 L1000.8,559.5 L996.1,552.5 L991.1,545.7 L986.0,539.0 L980.6,532.3 L975.0,525.8 L969.1,519.3 L963.1,513.0 L956.9,506.8 L950.6,500.8Z" fill="none" stroke="#161616" stroke-width="1.85" stroke-linejoin="round" stroke-linecap="round"/>
<path d="M1006.2,436.7 L950.6,500.8 L946.9,507.7" fill="none" stroke="#161616" stroke-width="1.3" stroke-linejoin="round" stroke-linecap="round"/>
</g>
<path d="M1196.5 127.500l9 9.800h-18z" fill="#e6eaf1"/>
<path d="M1196.500 278.500l9-9.800h-18z" fill="#e6eaf1"/>
<path d="M1121.500 203l9.300-9v18z" fill="#e6eaf1"/>
<path d="M1271.500 203l-9.300-9v18z" fill="#e6eaf1"/>
<path d="M1175.300 135.700l1.300 4.600c-11.500 2.500-22 8.500-27.800 16.200l3.500 2.800h-10.500l.5-10.500 3 3.300c6.500-8.500 18-14.500 30-16.400z" fill="#e6eaf1"/>
<path d="M1217.700 135.700l-1.300 4.600c11.500 2.500 22 8.500 27.800 16.200l-3.500 2.800h10.500l-.5-10.500-3 3.300c-6.500-8.500-18-14.500-30-16.400z" fill="#e6eaf1"/>
<path d="M1188.8,254.7 L1148.100,208.800" stroke="#1ec81e" stroke-width="1.300"/>
<path d="M1188.8,254.7 L1225.800,219.200" stroke="#e01818" stroke-width="1.300"/>
<path d="M1188.8,254.7 L1217,226.600" stroke="#1818e0" stroke-width="1.300"/>
<clipPath id="ncb"><path d="M1151.8,207.3 C1151.4,203.1 1152.3,196.0 1154.0,191.0 C1155.8,186.1 1158.3,181.9 1162.2,177.7 C1166.0,173.5 1171.5,169.2 1177.0,165.9 C1182.4,162.6 1189.8,159.0 1194.7,157.7 C1199.7,156.5 1202.6,157.1 1206.6,158.2 C1210.5,159.3 1214.0,160.9 1218.4,164.4 C1222.9,167.9 1229.5,174.8 1233.2,179.2 C1236.9,183.6 1239.3,187.8 1240.6,191.0 C1242.0,194.3 1242.1,196.0 1241.4,198.4 C1240.6,200.9 1238.8,203.1 1236.2,205.8 C1233.6,208.6 1228.8,211.8 1225.8,214.7 C1222.9,217.7 1222.1,219.7 1218.4,223.6 C1214.7,227.6 1207.6,234.3 1203.6,238.4 C1199.7,242.5 1197.4,246.6 1194.7,248.0 C1192.0,249.5 1191.3,249.9 1187.3,247.3 C1183.4,244.7 1176.2,237.7 1171.0,232.5 C1165.9,227.3 1159.5,220.4 1156.2,216.2 C1153.0,212.0 1152.2,211.5 1151.8,207.3Z"/></clipPath><path d="M1151.8,207.3 C1151.4,203.1 1152.3,196.0 1154.0,191.0 C1155.8,186.1 1158.3,181.9 1162.2,177.7 C1166.0,173.5 1171.5,169.2 1177.0,165.9 C1182.4,162.6 1189.8,159.0 1194.7,157.7 C1199.7,156.5 1202.6,157.1 1206.6,158.2 C1210.5,159.3 1214.0,160.9 1218.4,164.4 C1222.9,167.9 1229.5,174.8 1233.2,179.2 C1236.9,183.6 1239.3,187.8 1240.6,191.0 C1242.0,194.3 1242.1,196.0 1241.4,198.4 C1240.6,200.9 1238.8,203.1 1236.2,205.8 C1233.6,208.6 1228.8,211.8 1225.8,214.7 C1222.9,217.7 1222.1,219.7 1218.4,223.6 C1214.7,227.6 1207.6,234.3 1203.6,238.4 C1199.7,242.5 1197.4,246.6 1194.7,248.0 C1192.0,249.5 1191.3,249.9 1187.3,247.3 C1183.4,244.7 1176.2,237.7 1171.0,232.5 C1165.9,227.3 1159.5,220.4 1156.2,216.2 C1153.0,212.0 1152.2,211.5 1151.8,207.3Z" fill="#dfe3eb"/><g clip-path="url(#ncb)">
<path d="M1178.0,183.0 L1203.6,163.7 L1232.7,190.8 L1207.1,210.2Z" fill="#f5f6f9" stroke="#f5f6f9" stroke-width="5" stroke-linejoin="round"/>
<path d="M1172.2,195.4 L1196.6,218.1 L1186.1,237.7 L1161.8,215.0Z" fill="#f7f8fa" stroke="#f7f8fa" stroke-width="5" stroke-linejoin="round"/>
<path d="M1209.6,222.1 L1231.0,205.9 L1222.7,221.5 L1201.2,237.8Z" fill="#eceef3" stroke="#eceef3" stroke-width="5" stroke-linejoin="round"/>
</g>
<path d="M1189 185l9-23M1162 208l18-12M1193 196l21 17" stroke="#cfd3df" stroke-width="1.200"/>
<text transform="matrix(0.7048 -0.5329 0.7496 0.6995 1200.500 194.500)" font-family="Liberation Sans, sans-serif" font-size="16.5" fill="#111">Top</text>
<text transform="matrix(0.7139 0.6662 -0.4599 0.8616 1165 215.500)" font-family="Liberation Sans, sans-serif" font-size="14.19" fill="#111">Left</text>
<text x="1147.500" y="215" font-family="Liberation Sans, sans-serif" font-size="10" fill="#1ec81e">Y</text>
<text x="1225.500" y="225" font-family="Liberation Sans, sans-serif" font-size="10" fill="#e01818">X</text>
<text x="1218.500" y="234" font-family="Liberation Sans, sans-serif" font-size="10" fill="#1818e0">Z</text>
<path d="M1233.500 249.500l11.500 4.500v12l-11.500 5.500-11.500-5.500v-12z" fill="#d9d9d9"/><path d="M1222 254l11.500 4.500 11.500-4.500-11.500-4.500z" fill="#f2f2f2"/><path d="M1222 254v12l11.500 5.500v-13z" fill="#c2c2c2"/><path d="M1233.500 258.500v13l11.500-5.500v-12z" fill="#e2e2e2"/>
<path d="M1248.800 257h14l-7 6.800z" fill="#3c3c3c"/>
<path d="M1228.800 1078.400L1215 1064.500" stroke="#1a8c1a" stroke-width="1.400"/><path d="M1206.200 1056.200l10.800 4.600-6 6.200z" fill="#1a8c1a"/>
<path d="M1228.800 1078.400L1240 1068.800" stroke="#8c1a1a" stroke-width="1.400"/><path d="M1246.600 1064.700l-1.400 5.300-5.500.8-1-5 3.500-2.400z" fill="#8c1a1a"/>
<path d="M1228.800 1078.400L1236.500 1065" stroke="#1a1a8c" stroke-width="1.600"/><path d="M1242.200 1053.100v6.400l-2.500 6.300-5.600-.8v-5.200z" fill="#1a1a8c"/>
<text x="1207.300" y="1057" font-family="Liberation Sans, sans-serif" font-size="9.500" fill="#000">Y</text>
<text x="1244.700" y="1053" font-family="Liberation Sans, sans-serif" font-size="9.500" fill="#000">Z</text>
<text x="1249.700" y="1064.800" font-family="Liberation Sans, sans-serif" font-size="9.500" fill="#000">X</text>
</svg>
<!-- title bar -->
<div class="a" style="left:0;top:0;width:1280px;height:31px;background:#107c10;"></div>
<div class="a" style="left:0;top:31px;width:1px;height:1117px;background:#178417;"></div>
<div class="a" style="left:1279px;top:31px;width:1px;height:1117px;background:#178417;"></div>
<svg class="a" style="left:8px;top:8px" width="16" height="16"><use href="#fc"/></svg>
<div class="t" id="title" style="letter-spacing:-0.492px;left:30px;top:9px;color:#fff;">FreeCAD 0.18</div>
<svg class="a" style="left:1150px;top:0" width="130" height="31" viewBox="0 0 130 31"><path d="M10.5 15.5h10M54.5 10.5h10v10h-10zM100.5 10.5l10 10M110.5 10.5l-10 10" stroke="#fff" stroke-width="1" fill="none"/></svg>
<!-- menu bar -->
<div class="a" style="left:1px;top:31px;width:1279px;height:21px;background:#fff;"></div>
<div class="t" style="left:9px;top:35px;" id="m1"><u>F</u>ile</div>
<div class="t" style="left:43px;top:35px;" id="m2"><u>E</u>dit</div>
<div class="t" style="left:79px;top:35px;" id="m3"><u>V</u>iew</div>
<div class="t" style="left:119px;top:35px;" id="m4"><u>T</u>ools</div>
<div class="t" style="left:163px;top:35px;" id="m5"><u>M</u>acro</div>
<div class="t" style="left:213px;top:35px;" id="m6"><u>W</u>indows</div>
<div class="t" style="left:277px;top:35px;" id="m7"><u>H</u>elp</div>
<!-- toolbars -->
<div class="a" style="left:1px;top:52px;width:1279px;height:1px;background:#fafafa;"></div>
<div class="a" style="left:1px;top:85px;width:1279px;height:1px;background:#c8c8c8;"></div>
<div class="a" style="left:1px;top:86px;width:1279px;height:1px;background:#fbfbfb;"></div>
<div class="a" style="left:1px;top:119px;width:1279px;height:1px;background:#b9b9b9;"></div>
<svg width="0" height="0" style="position:absolute"><defs>
<linearGradient id="pg" x1="0" y1="0" x2="1" y2="1"><stop offset="0" stop-color="#fdfdfd"/><stop offset="1" stop-color="#dcdcdc"/></linearGradient>
<radialGradient id="yg"><stop offset="0" stop-color="#ffffc0"/><stop offset="0.45" stop-color="#f4f030"/><stop offset="1" stop-color="#f0ec20" stop-opacity="0"/></radialGradient>
<linearGradient id="bl" x1="0" y1="0" x2="0" y2="1"><stop offset="0" stop-color="#7fb0e4"/><stop offset="1" stop-color="#4f86c6"/></linearGradient>
<linearGradient id="gr" x1="0" y1="0" x2="0" y2="1"><stop offset="0" stop-color="#e8e8e8"/><stop offset="1" stop-color="#a8a8a8"/></linearGradient>
<linearGradient id="rd" x1="0" y1="0" x2="0.3" y2="1"><stop offset="0" stop-color="#f02828"/><stop offset="1" stop-color="#b00808"/></linearGradient>
<linearGradient id="cy" x1="0" y1="0" x2="1" y2="1"><stop offset="0" stop-color="#3ad8e0"/><stop offset="1" stop-color="#12a4ac"/></linearGradient>
<linearGradient id="gy" x1="0" y1="0" x2="0" y2="1"><stop offset="0" stop-color="#c4c4c4"/><stop offset="1" stop-color="#a4a4a4"/></linearGradient>
<linearGradient id="ba" x1="0" y1="0" x2="0" y2="1"><stop offset="0" stop-color="#5f95d6"/><stop offset="1" stop-color="#2c5e9e"/></linearGradient>
<radialGradient id="gl" cx="0.4" cy="0.35" r="0.7"><stop offset="0" stop-color="#e8f2fc"/><stop offset="0.6" stop-color="#8cb4e4"/><stop offset="1" stop-color="#4870b0"/></radialGradient>
</defs></svg>
<div class="grip" style="left:5px;top:56px;height:27px;"></div>
<svg class="ic" style="left:14px;top:56.5px" width="24" height="24" viewBox="0 0 24 24"><rect x="3" y="1.8" width="18" height="21" rx="1" fill="url(#pg)" stroke="#bdbdbd"/><path d="M4 23.5h17" stroke="#b0b0b0" stroke-width="1" opacity=".6"/><circle cx="18.3" cy="6.2" r="5.2" fill="url(#yg)"/></svg>
<svg class="ic" style="left:45px;top:56.5px" width="24" height="24" viewBox="0 0 24 24"><path d="M1 3.2h7l1.5 2H21v14H2.5z" fill="#9a9a9a" stroke="#7a7a7a" stroke-width=".8"/><path d="M4.5 2.5h14.5l1 5.5v9H6z" fill="url(#pg)" stroke="#b4b4b4" stroke-width=".7"/><path d="M5.3 9.8h18.4l-3 11H2.6z" fill="url(#bl)" stroke="#4a7ab4" stroke-width=".8"/></svg>
<svg class="ic" style="left:76px;top:56.5px" width="24" height="24" viewBox="0 0 24 24"><path d="M4.5 8.5h14.5l3.2 7.5v5.2a1 1 0 0 1-1 1H2.8a1 1 0 0 1-1-1V16z" fill="url(#gr)" stroke="#8c8c8c" stroke-width=".9"/><path d="M2 16.2h20v5a1 1 0 0 1-1 1H3a1 1 0 0 1-1-1z" fill="#b4b4b4" stroke="#8c8c8c" stroke-width=".8"/><path d="M4 19.3h7" stroke="#808080" stroke-width="1.3"/><path d="M3.2 6.5c1.5-4.5 9-6 11-.4l3.300-.4-4.800 8.200-6.200-6.600 3.400-.3c-1.200-3-4.700-2.800-6.700-.5z" fill="url(#ba)" stroke="#2f5f9f" stroke-width=".6"/></svg>
<svg class="ic" style="left:107px;top:56.5px" width="24" height="24" viewBox="0 0 24 24"><path d="M6.500 2.500h11v9h-11z" fill="#ececec" stroke="#c4c4c4" stroke-width=".9"/><path d="M12 4.800l3 3.200h-1.800v2.600h-2.400V8h-1.800z" fill="#b4b4b4"/><rect x="1.500" y="10.500" width="21" height="10.500" rx="2.200" fill="url(#gr)" stroke="#b0b0b0" stroke-width=".9"/><rect x="4" y="14" width="16" height="2.600" rx="1.200" fill="#f6f6f6" stroke="#bdbdbd" stroke-width=".6"/></svg>
<div class="sep" style="left:137px;top:57px;height:24px;"></div>
<svg class="ic" style="left:143px;top:56.5px" width="24" height="24" viewBox="0 0 24 24"><path d="M6 1.500l7.800 13.500-1.800 1zM18 1.500l-7.800 13.500 1.800 1z" fill="#ececec" stroke="#c6c6c6" stroke-width=".8"/><ellipse cx="6.300" cy="18.800" rx="3.700" ry="2.600" transform="rotate(-35 6.300 18.800)" fill="none" stroke="#9c9c9c" stroke-width="2.200"/><ellipse cx="17.700" cy="18.800" rx="3.700" ry="2.600" transform="rotate(35 17.700 18.800)" fill="none" stroke="#9c9c9c" stroke-width="2.200"/><path d="M9.500 15l2.500-3 2.500 3" stroke="#9c9c9c" stroke-width="2" fill="none"/></svg>
<svg class="ic" style="left:174px;top:56.5px" width="24" height="24" viewBox="0 0 24 24"><path d="M1.500 1.500h14v17h-14z" fill="#f6f6f6" stroke="#d4d4d4" stroke-width=".9"/><path d="M4 6h8M4 8.500h8M4 11h8M4 13.500h6" stroke="#e2e2e2" stroke-width="1"/><path d="M8.500 6.500h14v13l-3.500 3.500h-10.500z" fill="#f7f7f7" stroke="#d0d0d0" stroke-width=".9"/><rect x="11" y="10" width="9" height="7" fill="#e3e3e3"/><path d="M22.500 19.500l-3.500 3.500v-3.500z" fill="#e0e0e0" stroke="#cfcfcf" stroke-width=".7"/></svg>
<svg class="ic" style="left:205px;top:56.5px" width="24" height="24" viewBox="0 0 24 24"><rect x="2.300" y="2.800" width="19.400" height="20" rx="1" fill="#a6a6a6"/><rect x="4.200" y="5" width="15.600" height="16.300" fill="#ececec"/><path d="M8.500 1h7v2h2.500l.5 2.600h-13l.5-2.600h2.500z" fill="#9a9a9a"/><rect x="7" y="8.500" width="9" height="8" fill="#e0e0e0"/><path d="M19.800 16.500v4.800h-5z" fill="#c8c8c8"/></svg>
<div class="sep" style="left:236px;top:57px;height:24px;"></div>
<svg class="ic" style="left:242px;top:56.5px" width="24" height="24" viewBox="0 0 24 24"><ellipse cx="12" cy="21" rx="9" ry="1.800" fill="#e6e6e6"/><path d="M10 2.500l-7.500 6.500 7.500 6.500v-4c4.500-.5 6 2.500 3.500 7 6-3.500 6.500-12.500-3.500-12.500z" fill="#dcdcdc" stroke="#d0d0d0" stroke-width=".8"/></svg>
<svg class="a" style="left:272.5px;top:66.8px" width="8" height="5" viewBox="0 0 8 5"><path d="M0 0.3h8L4 4.8z" fill="#6c6c6c"/></svg>
<svg class="ic" style="left:286px;top:56.5px" width="24" height="24" viewBox="0 0 24 24"><ellipse cx="12" cy="21" rx="9" ry="1.800" fill="#e6e6e6"/><path d="M14 2.500l7.500 6.500-7.500 6.500v-4c-4.500-.5-6 2.500-3.500 7-6-3.500-6.500-12.500 3.500-12.500z" fill="#dcdcdc" stroke="#d0d0d0" stroke-width=".8"/></svg>
<svg class="a" style="left:315.5px;top:66.8px" width="8" height="5" viewBox="0 0 8 5"><path d="M0 0.3h8L4 4.8z" fill="#6c6c6c"/></svg>
<div class="sep" style="left:329px;top:57px;height:24px;"></div>
<svg class="ic" style="left:334.5px;top:56.5px" width="24" height="24" viewBox="0 0 24 24"><path d="M3 10.500c.5-7 11-9.500 15.500-4.500l2.800-2.800v8.300h-8.300l2.800-2.800c-3-3-8-2-9 1.800z" fill="url(#gy)" stroke="#9a9a9a" stroke-width=".8"/><path d="M21 13.500c-.5 7-11 9.500-15.500 4.500l-2.800 2.800v-8.300h8.300l-2.800 2.800c3 3 8 2 9-1.800z" fill="url(#gy)" stroke="#9a9a9a" stroke-width=".8"/></svg>
<div class="sep" style="left:365px;top:57px;height:24px;"></div>
<svg class="ic" style="left:372px;top:56.5px" width="24" height="24" viewBox="0 0 24 24"><path d="M1.300 1.800l13 11.300-5 .6 3.600 7.200-2.700 1.400-3.600-7.400-3.900 3.600z" fill="#6e6e66" stroke="#4a4a44" stroke-width=".9"/><path d="M14.500 6.500c.3-4.300 8-4.800 8.200-.3.200 3.300-3.800 4-3.800 8.300" fill="none" stroke="#2a5590" stroke-width="3.300" stroke-linecap="round"/><path d="M14.500 6.500c.3-4.300 8-4.800 8.200-.3.200 3.300-3.800 4-3.800 8.300" fill="none" stroke="#4f86c8" stroke-width="1.800" stroke-linecap="round"/><circle cx="18.900" cy="19.800" r="1.700" fill="#4f86c8" stroke="#2a5590" stroke-width=".8"/></svg>
<div class="tbsep" style="left:401px;top:54px;height:30px;"></div>
<div class="grip" style="left:406px;top:56px;height:27px;"></div>
<div class="a" style="left:412px;top:58px;width:122px;height:22px;box-sizing:border-box;border:1px solid #adadad;background:#e1e1e1;"></div>
<svg class="a" style="left:417px;top:61px" width="16" height="16" viewBox="0 0 16 16"><path d="M1 5h7V1.200l7 6.800-7 6.800V11H1z" fill="url(#ba)" stroke="#264f87" stroke-width=".9"/></svg>
<div class="t" id="cb" style="letter-spacing:-0.009px;left:435.500px;top:63px;">Start</div>
<svg class="a" style="left:520.5px;top:67.3px" width="8" height="5" viewBox="0 0 8 5"><path d="M0 0.3h8L4 4.8z" fill="#000"/></svg>
<div class="tbsep" style="left:536px;top:54px;height:30px;"></div>
<div class="grip" style="left:540px;top:56px;height:27px;"></div>
<svg class="ic" style="left:549px;top:56.5px" width="24" height="24" viewBox="0 0 24 24"><circle cx="12" cy="12.300" r="10.800" fill="url(#rd)" stroke="#5c0c0c" stroke-width="1"/></svg>
<svg class="ic" style="left:580px;top:56.5px" width="24" height="24" viewBox="0 0 24 24"><rect x="0.800" y="1" width="22.500" height="22.500" rx="1.800" fill="#b6b6b6" stroke="#a2a2a2" stroke-width="1"/></svg>
<svg class="ic" style="left:611px;top:56.5px" width="24" height="24" viewBox="0 0 24 24"><path d="M2.500 3.500h18.500l1.500 17.500h-21.500z" fill="#f2f2f2" stroke="#a8a8a8" stroke-width=".9"/><path d="M1 21h22v1.500h-22z" fill="#c0c0c0"/><path d="M3.500 1.500v3M6 1.500v3M8.500 1.500v3M11 1.500v3M13.500 1.500v3M16 1.500v3M18.500 1.500v3" stroke="#b49a28" stroke-width="1.500"/><path d="M5 7.500h13M5 10.500h8M5 13.500h6" stroke="#c4c4c4" stroke-width="1.200"/><path d="M8.500 16.500l1.500-3 10.500-5.500 2 2.500-11 5z" fill="#e6a030" stroke="#a86a10" stroke-width=".7"/><path d="M20.500 8l2 2.500 1-1-1.500-2.300z" fill="#e03030"/><path d="M8.500 16.500l1.500-3 1.500 2.200z" fill="#e8d0a0" stroke="#806020" stroke-width=".5"/></svg>
<svg class="ic" style="left:641.5px;top:56.5px" width="24" height="24" viewBox="0 0 24 24"><path d="M1.300 1l21.500 11-21.500 11z" fill="#b4b4b4" stroke="#a2a2a2" stroke-width="1"/></svg>
<div class="grip" style="left:5px;top:90px;height:27px;"></div>
<svg class="ic" style="left:14px;top:91px" width="24" height="24" viewBox="0 0 24 24"><path d="M3.500 .700h17.500v22.600H7.500l-4-4z" fill="#ecece6" stroke="#3c3c3c" stroke-width=".9"/><path d="M3.500 19.300h4v4z" fill="#6a6a6a"/><path d="M13 12l7.500 7.500" stroke="#0c7a82" stroke-width="3.600" stroke-linecap="round"/><path d="M13 12l7.500 7.500" stroke="#22bcc6" stroke-width="2" stroke-linecap="round"/><circle cx="10.800" cy="9.300" r="5.300" fill="url(#cy)" stroke="#0c7a82" stroke-width="1"/></svg>
<svg class="ic" style="left:45px;top:91px" width="24" height="24" viewBox="0 0 24 24"><path d="M14 14l8.500 8.500" stroke="#0c7a82" stroke-width="4" stroke-linecap="round"/><path d="M14 14l8.500 8.500" stroke="#22bcc6" stroke-width="2.400" stroke-linecap="round"/><circle cx="9" cy="8.800" r="7.800" fill="url(#cy)" stroke="#0c7a82" stroke-width="1"/><path d="M4 14l1.300-1.800 5.200-5.200-1.800-1.800 6.500-1.200-1.200 6.500-1.800-1.800-5.200 5.200z" fill="#f4f4f4" stroke="#4a4a4a" stroke-width=".7"/></svg>
<svg class="ic" style="left:76px;top:91px" width="24" height="24" viewBox="0 0 24 24"><path d="M12 .500l11 5.700v11.600l-11 5.700-11-5.700V6.200z" fill="url(#cy)" stroke="#0c7a82" stroke-width="1.100"/><circle cx="12" cy="12" r="7.300" fill="none" stroke="#d01212" stroke-width="2.400"/><path d="M6.900 6.900l10.200 10.200" stroke="#d01212" stroke-width="2.400"/></svg>
<svg class="a" style="left:105.5px;top:101.3px" width="8" height="5" viewBox="0 0 8 5"><path d="M0 0.3h8L4 4.8z" fill="#111"/></svg>
<div class="sep" style="left:118px;top:91px;height:24px;"></div>
<svg class="ic" style="left:125px;top:91px" width="24" height="24" viewBox="0 0 24 24"><path d="M12 1l10.500 5.200v11.600L12 23 1.500 17.800V6.200z" fill="#fff"/><path d="M12 1l10.500 5.200v11.600L12 23 1.500 17.800V6.200zM1.500 6.200L12 11.400l10.500-5.200M12 11.400V23M12 1v11.600M12 12.600L1.500 17.800M12 12.600l10.500 5.200" fill="none" stroke="#0c7a82" stroke-width="2.600" stroke-linejoin="round"/><path d="M12 1l10.500 5.200v11.600L12 23 1.500 17.800V6.200zM1.500 6.200L12 11.400l10.500-5.200M12 11.400V23M12 1v11.600M12 12.600L1.500 17.800M12 12.600l10.500 5.200" fill="none" stroke="#2cc8d2" stroke-width="1.300" stroke-linejoin="round"/><path d="M12 4v4M7.500 15.800l-2 1M16.500 15.800l2 1" stroke="#0a3a40" stroke-width="1.800" stroke-linecap="round"/></svg>
<div class="sep" style="left:155px;top:91px;height:24px;"></div>
<svg class="ic" style="left:162px;top:91px" width="24" height="24" viewBox="0 0 24 24"><path d="M1.5 6.6l5.6 -5.2H22.6V17.2l-5.6 5.2H1.5z" fill="#fff"/><path d="M7.1 1.4V17.2H22.6M1.5 22.4l5.6 -5.2" fill="none" stroke="#0c7a82" stroke-width="2.500" stroke-linejoin="round"/><path d="M7.1 1.4V17.2H22.6M1.5 22.4l5.6 -5.2" fill="none" stroke="#2cc8d2" stroke-width="1.300" stroke-linejoin="round"/><path d="M1.5 6.6H17V22.4H1.5zM1.5 6.6l5.6 -5.2H22.6V17.2l-5.6 5.2M17 6.6l5.6 -5.2" fill="none" stroke="#0c7a82" stroke-width="2.500" stroke-linejoin="round"/><path d="M1.5 6.6H17V22.4H1.5zM1.5 6.6l5.6 -5.2H22.6V17.2l-5.6 5.2M17 6.6l5.6 -5.2" fill="none" stroke="#2cc8d2" stroke-width="1.300" stroke-linejoin="round"/><path d="M1.5 6.6H17V22.4H1.5z" fill="url(#cy)" stroke="#0c7a82" stroke-width=".800"/></svg>
<svg class="ic" style="left:193px;top:91px" width="24" height="24" viewBox="0 0 24 24"><path d="M1.5 6.6l5.6 -5.2H22.6V17.2l-5.6 5.2H1.5z" fill="#fff"/><path d="M7.1 1.4V17.2H22.6M1.5 22.4l5.6 -5.2" fill="none" stroke="#0c7a82" stroke-width="2.500" stroke-linejoin="round"/><path d="M7.1 1.4V17.2H22.6M1.5 22.4l5.6 -5.2" fill="none" stroke="#2cc8d2" stroke-width="1.300" stroke-linejoin="round"/><path d="M1.5 6.6H17V22.4H1.5zM1.5 6.6l5.6 -5.2H22.6V17.2l-5.6 5.2M17 6.6l5.6 -5.2" fill="none" stroke="#0c7a82" stroke-width="2.500" stroke-linejoin="round"/><path d="M1.5 6.6H17V22.4H1.5zM1.5 6.6l5.6 -5.2H22.6V17.2l-5.6 5.2M17 6.6l5.6 -5.2" fill="none" stroke="#2cc8d2" stroke-width="1.300" stroke-linejoin="round"/><path d="M1.5 6.6l5.6 -5.2H22.6L17 6.6z" fill="url(#cy)" stroke="#0c7a82" stroke-width=".800"/><path d="M9.300 10v3" stroke="#0a3036" stroke-width="2" stroke-linecap="round"/><path d="M7.800 16.200l-2.400 2M10.800 16l1.600.800" stroke="#0a3036" stroke-width="1.800" stroke-linecap="round"/><path d="M9.300 13.500v1.500l-1.200 1" stroke="#2cc8d2" stroke-width="1"/></svg>
<svg class="ic" style="left:224px;top:91px" width="24" height="24" viewBox="0 0 24 24"><path d="M1.5 6.6l5.6 -5.2H22.6V17.2l-5.6 5.2H1.5z" fill="#fff"/><path d="M7.1 1.4V17.2H22.6M1.5 22.4l5.6 -5.2" fill="none" stroke="#0c7a82" stroke-width="2.500" stroke-linejoin="round"/><path d="M7.1 1.4V17.2H22.6M1.5 22.4l5.6 -5.2" fill="none" stroke="#2cc8d2" stroke-width="1.300" stroke-linejoin="round"/><path d="M1.5 6.6H17V22.4H1.5zM1.5 6.6l5.6 -5.2H22.6V17.2l-5.6 5.2M17 6.6l5.6 -5.2" fill="none" stroke="#0c7a82" stroke-width="2.500" stroke-linejoin="round"/><path d="M1.5 6.6H17V22.4H1.5zM1.5 6.6l5.6 -5.2H22.6V17.2l-5.6 5.2M17 6.6l5.6 -5.2" fill="none" stroke="#2cc8d2" stroke-width="1.300" stroke-linejoin="round"/><path d="M17 6.6l5.6 -5.2V17.2L17 22.4z" fill="url(#cy)" stroke="#0c7a82" stroke-width=".800"/><path d="M9.300 10v3" stroke="#0a3036" stroke-width="2" stroke-linecap="round"/><path d="M7.800 16.200l-2.400 2M10.800 16l1.600.800" stroke="#0a3036" stroke-width="1.800" stroke-linecap="round"/><path d="M9.300 13.500v1.500l-1.200 1" stroke="#2cc8d2" stroke-width="1"/></svg>
<div class="sep" style="left:254px;top:91px;height:24px;"></div>
<svg class="ic" style="left:260.5px;top:91px" width="24" height="24" viewBox="0 0 24 24"><path d="M1.5 6.6l5.6 -5.2H22.6V17.2l-5.6 5.2H1.5z" fill="#fff"/><path d="M7.1 1.4H22.6V17.2H7.1z" fill="url(#cy)"/><path d="M7.1 1.4V17.2H22.6M1.5 22.4l5.6 -5.2" fill="none" stroke="#0c7a82" stroke-width="2.500" stroke-linejoin="round"/><path d="M7.1 1.4V17.2H22.6M1.5 22.4l5.6 -5.2" fill="none" stroke="#2cc8d2" stroke-width="1.300" stroke-linejoin="round"/><path d="M1.5 6.6H17V22.4H1.5zM1.5 6.6l5.6 -5.2H22.6V17.2l-5.6 5.2M17 6.6l5.6 -5.2" fill="none" stroke="#0c7a82" stroke-width="2.500" stroke-linejoin="round"/><path d="M1.5 6.6H17V22.4H1.5zM1.5 6.6l5.6 -5.2H22.6V17.2l-5.6 5.2M17 6.6l5.6 -5.2" fill="none" stroke="#2cc8d2" stroke-width="1.300" stroke-linejoin="round"/><path d="M6.300 18.200l-2.400 2" stroke="#0a3036" stroke-width="1.800" stroke-linecap="round"/></svg>
<svg class="ic" style="left:291.5px;top:91px" width="24" height="24" viewBox="0 0 24 24"><path d="M1.5 6.6l5.6 -5.2H22.6V17.2l-5.6 5.2H1.5z" fill="#fff"/><path d="M1.5 22.4l5.6 -5.2H22.6L17 22.4z" fill="url(#cy)"/><path d="M7.1 1.4V17.2H22.6M1.5 22.4l5.6 -5.2" fill="none" stroke="#0c7a82" stroke-width="2.500" stroke-linejoin="round"/><path d="M7.1 1.4V17.2H22.6M1.5 22.4l5.6 -5.2" fill="none" stroke="#2cc8d2" stroke-width="1.300" stroke-linejoin="round"/><path d="M1.5 6.6H17V22.4H1.5zM1.5 6.6l5.6 -5.2H22.6V17.2l-5.6 5.2M17 6.6l5.6 -5.2" fill="none" stroke="#0c7a82" stroke-width="2.500" stroke-linejoin="round"/><path d="M1.5 6.6H17V22.4H1.5zM1.5 6.6l5.6 -5.2H22.6V17.2l-5.6 5.2M17 6.6l5.6 -5.2" fill="none" stroke="#2cc8d2" stroke-width="1.300" stroke-linejoin="round"/><path d="M9.300 8v3.500" stroke="#0a3036" stroke-width="2" stroke-linecap="round"/></svg>
<svg class="ic" style="left:322.5px;top:91px" width="24" height="24" viewBox="0 0 24 24"><path d="M1.5 6.6l5.6 -5.2H22.6V17.2l-5.6 5.2H1.5z" fill="#fff"/><path d="M1.5 6.6l5.6 -5.2V17.2L1.5 22.4z" fill="url(#cy)"/><path d="M7.1 1.4V17.2H22.6M1.5 22.4l5.6 -5.2" fill="none" stroke="#0c7a82" stroke-width="2.500" stroke-linejoin="round"/><path d="M7.1 1.4V17.2H22.6M1.5 22.4l5.6 -5.2" fill="none" stroke="#2cc8d2" stroke-width="1.300" stroke-linejoin="round"/><path d="M1.5 6.6H17V22.4H1.5zM1.5 6.6l5.6 -5.2H22.6V17.2l-5.6 5.2M17 6.6l5.6 -5.2" fill="none" stroke="#0c7a82" stroke-width="2.500" stroke-linejoin="round"/><path d="M1.5 6.6H17V22.4H1.5zM1.5 6.6l5.6 -5.2H22.6V17.2l-5.6 5.2M17 6.6l5.6 -5.2" fill="none" stroke="#2cc8d2" stroke-width="1.300" stroke-linejoin="round"/><path d="M12 15.500l2 .800" stroke="#0a3036" stroke-width="1.800" stroke-linecap="round"/></svg>
<div class="sep" style="left:353px;top:91px;height:24px;"></div>
<svg class="ic" style="left:359px;top:91px" width="24" height="24" viewBox="0 0 24 24"><path d="M2.200 5.200L8 1.100 21 14.600 15 18.100z" fill="url(#cy)" stroke="#0c7a82" stroke-width=".900" stroke-linejoin="round"/><path d="M15 18.100L21 14.600V19.300L15.700 22.200z" fill="#1aa8b2" stroke="#0c7a82" stroke-width=".900" stroke-linejoin="round"/><path d="M10.300 3.500l-2 1.400M12.700 6l-2.800 2M15.100 8.500l-2 1.400M17.500 11l-2.800 2M19.800 13.400l-2 1.400" stroke="#0c7a82" stroke-width="1"/></svg>
<div class="tbsep" style="left:389px;top:88px;height:30px;"></div>
<div class="grip" style="left:394px;top:90px;height:27px;"></div>
<svg class="ic" style="left:403px;top:91px" width="24" height="24" viewBox="0 0 24 24"><path d="M3.500 6l7-3.500 5 2.300v4.400l5 2.300v7l-7 3.500-10-4.800z" fill="#e6d630" stroke="#86760c" stroke-width="1"/><path d="M3.500 6l5 2.300 7-3.500M8.500 8.300v4.600l5 2.300 7-3.700M13.500 15.200v6.800M3.500 12.600l5 .3" fill="none" stroke="#86760c" stroke-width=".9"/><path d="M3.500 6l7-3.500 5 2.300-7 3.500zM8.500 12.900l7-3.700 5 2.300-7 3.700z" fill="#f6ec60" stroke="#86760c" stroke-width=".8"/></svg>
<svg class="ic" style="left:434px;top:91px" width="24" height="24" viewBox="0 0 24 24"><path d="M1.800 3.500h7.500l1.500 2.500h10.500v15H1.800z" fill="#8e8e8e" stroke="#7c7c7c" stroke-width=".8"/><path d="M2.800 8.300h19.500v13H2.800z" fill="url(#bl)" stroke="#5a86bc" stroke-width=".8"/></svg>
<div class="tbsep" style="left:464px;top:88px;height:30px;"></div>
<div class="grip" style="left:468px;top:90px;height:27px;"></div>
<svg class="ic" style="left:477px;top:91px" width="24" height="24" viewBox="0 0 24 24"><circle cx="12" cy="12" r="10.600" fill="url(#gl)" stroke="#3a4f9a" stroke-width="1.300"/><path d="M4.500 6.500c1.500-2.200 4-3.600 6-3.800l1.500 1.800-2 1.500.8 2-2.500 1.500-.5 2.500 2.200 1.800-.3 3.200-1.800 2c-2.500-1.200-4.300-3.800-4.600-6.500l1.500-2.500zM14.500 3.500c2 .5 3.800 1.700 5 3.300l-1.500 1.500 1 2.500 2.300.5c.2 2.500-.5 5-2 6.800l-2-1.500.3-3-2.500-2-1.500-3 1.800-2z" fill="#52b82c" stroke="#2e7a14" stroke-width=".5"/></svg>
<svg class="ic" style="left:508.5px;top:91px" width="24" height="24" viewBox="0 0 24 24"><path d="M1.500 7.800h9.500V1.800l11.500 10.200-11.500 10.200V16.200H1.500z" fill="url(#ba)" stroke="#1f467c" stroke-width="1"/></svg>
<div class="sep" style="left:538px;top:91px;height:24px;"></div>
<svg class="ic" style="left:545px;top:91px" width="24" height="24" viewBox="0 0 24 24"><path d="M22 8.200h-8.800V1.800L1.800 12l11.400 10.200V15.800H22z" fill="url(#gy)" stroke="#9c9c9c" stroke-width="1"/></svg>
<svg class="ic" style="left:576px;top:91px" width="24" height="24" viewBox="0 0 24 24"><path d="M2 8.200h8.800V1.800L22.200 12 10.800 22.200V15.800H2z" fill="url(#gy)" stroke="#9c9c9c" stroke-width="1"/></svg>
<svg class="ic" style="left:607.5px;top:90.5px" width="24" height="24" viewBox="0 0 24 24"><path d="M3 10.500c.5-7 11-9.500 15.500-4.500l2.800-2.800v8.300h-8.300l2.800-2.800c-3-3-8-2-9 1.800z" fill="url(#gy)" stroke="#9a9a9a" stroke-width=".8"/><path d="M21 13.500c-.5 7-11 9.500-15.500 4.500l-2.800 2.800v-8.300h8.300l-2.800 2.800c3 3 8 2 9-1.800z" fill="url(#gy)" stroke="#9a9a9a" stroke-width=".8"/></svg>
<svg class="ic" style="left:638px;top:91px" width="24" height="24" viewBox="0 0 24 24"><path d="M7.200 .800h9.600l6.400 6.400v9.600l-6.400 6.400H7.200L.800 16.800V7.200z" fill="#a6a6a6" stroke="#949494" stroke-width="1"/><path d="M7.800 7.800l8.400 8.400M16.200 7.800l-8.400 8.400" stroke="#f4f4f4" stroke-width="2.600" stroke-linecap="round"/></svg>
<div class="sep" style="left:668px;top:91px;height:24px;"></div>
<svg class="ic" style="left:675px;top:91px" width="24" height="24" viewBox="0 0 24 24"><path d="M9.300 1.500h5.400v7.800h7.800v5.400h-7.800v7.800H9.300v-7.800H1.500V9.300h7.800z" fill="#b2b2b2" stroke="#9c9c9c" stroke-width="1"/></svg>
<svg class="ic" style="left:706px;top:91px" width="24" height="24" viewBox="0 0 24 24"><path d="M1.500 9.300h21v5.400h-21z" fill="#b2b2b2" stroke="#9c9c9c" stroke-width="1"/></svg>
<!-- left docks -->
<div class="dock" style="top:121px;"></div>
<div class="t" id="d1" style="letter-spacing:-0.145px;font-size:11px;left:5px;top:125px;">Selection view</div>
<svg class="a" style="left:239px;top:125px" width="28" height="12" viewBox="0 0 28 12"><path d="M3.5 0.8h5.2v4.5M3.5 0.8v2.2" stroke="#000" stroke-width="1.6" fill="none"/><rect x="1.3" y="3.8" width="5.4" height="5" fill="#fff" stroke="#000" stroke-width="1.6"/><path d="M18 1.5l7 7M25 1.5l-7 7" stroke="#000" stroke-width="1.7"/></svg>
<div class="frame" style="left:1px;top:142px;width:240px;height:20px;border-color:#7a7a7a #a8a8a8 #a8a8a8 #7a7a7a;"></div>
<div class="t" id="srch" style="letter-spacing:-0.343px;font-size:11px;left:4px;top:146px;color:#9c9c9c;">Search</div>
<svg class="a" style="left:245px;top:146px" width="15" height="12" viewBox="0 0 15 12"><path d="M5.2 0.6h8.6v10.4H5.2L0.8 5.8z" fill="#a8c0dc" stroke="#6f93c0" stroke-width="0.9"/><path d="M6.3 2.9l5.2 5.6M11.5 2.9l-5.2 5.6" stroke="#eef3fa" stroke-width="1.9"/></svg>
<div class="t" style="left:262.5px;top:146px;font-size:11.5px;">0</div>
<div class="frame" style="left:1px;top:163px;width:268px;height:152px;"></div>
<div class="dock" style="top:321px;"></div>
<div class="t" id="d2" style="letter-spacing:-0.387px;font-size:11px;left:5px;top:324px;">Combo View</div>
<svg class="a" style="left:239px;top:324px" width="28" height="12" viewBox="0 0 28 12"><path d="M3.5 0.8h5.2v4.5M3.5 0.8v2.2" stroke="#000" stroke-width="1.6" fill="none"/><rect x="1.3" y="3.8" width="5.4" height="5" fill="#fff" stroke="#000" stroke-width="1.6"/><path d="M18 1.5l7 7M25 1.5l-7 7" stroke="#000" stroke-width="1.7"/></svg>
<div class="a" style="left:1px;top:341px;width:53px;height:23px;background:#fff;border:1px solid #d9d9d9;border-bottom:none;box-sizing:border-box;"></div>
<div class="a" style="left:54px;top:343px;width:48px;height:19px;background:#f0f0f0;border:1px solid #d9d9d9;box-sizing:border-box;"></div>
<div class="a" style="left:1px;top:363px;width:268px;height:770px;background:#fff;"></div>
<div class="a" style="left:102px;top:362px;width:167px;height:1px;background:#d9d9d9;"></div>
<div class="a" style="left:3px;top:733px;width:263px;height:7px;background:#f0f0f0;"></div>
<div class="a" style="left:262px;top:733px;width:7px;height:400px;background:#f0f0f0;"></div>
<div class="a" style="left:266px;top:363px;width:3px;height:770px;background:#f0f0f0;"></div>
<div class="a" style="left:265px;top:364px;width:1px;height:769px;background:#fdfdfd;"></div><div class="a" style="left:266px;top:364px;width:1px;height:769px;background:#e6e6e6;"></div><div class="a" style="left:3px;top:738px;width:260px;height:1px;background:#fbfbfb;"></div><div class="a" style="left:262px;top:738px;width:1px;height:395px;background:#fbfbfb;"></div><div class="a" style="left:263px;top:738px;width:1px;height:395px;background:#e6e6e6;"></div>
<div class="t" id="tb1" style="letter-spacing:-0.334px;font-size:11px;left:12.5px;top:345px;">Model</div>
<div class="t" id="tb2" style="letter-spacing:-0.165px;font-size:11px;left:64.5px;top:346px;">Tasks</div>
<div class="frame" style="left:3px;top:363px;width:262px;height:370px;"></div>
<div class="a" style="left:193px;top:365px;width:1px;height:22px;background:#d8d8d8;"></div>
<div class="t" id="la" style="letter-spacing:0.091px;left:8px;top:369px;">Labels &amp; Attributes</div>
<div class="t" id="ap" style="letter-spacing:0.235px;left:7px;top:389px;">Application</div>
<svg class="a" style="left:8px;top:410px" width="10" height="8" viewBox="0 0 10 8"><path d="M1.2 1.8L5 5.6L8.8 1.8" fill="none" stroke="#262626" stroke-width="1.5"/></svg>
<svg class="a" style="left:28px;top:406px" width="16" height="16" viewBox="0 0 16 16"><rect x="0.5" y="0.5" width="13.5" height="15" rx="1.5" fill="#f4f4f4" stroke="#9a9a9a" stroke-width="0.8"/><circle cx="10" cy="5" r="3.2" fill="#d8131c"/><path d="M2.8 8l4-2.3l4 1.6v4.6l-4.4 2.4l-3.6-1.8z" fill="#3b6fb5" stroke="#274f8a" stroke-width="0.5"/><path d="M2.8 8l3.7 1.7l4.3-2.4M6.5 9.7v4.6" stroke="#274f8a" stroke-width="0.5" fill="none"/><path d="M2.8 8l4-2.3l4 1.6l-4.3 2.4z" fill="#6d9ad6"/></svg>
<div class="t" id="tr0" style="letter-spacing:-0.051px;left:49.5px;top:407px;font-weight:bold;">fan duct v3</div>
<svg class="a" style="left:28px;top:428px" width="10" height="8" viewBox="0 0 10 8"><path d="M1.2 1.8L5 5.6L8.8 1.8" fill="none" stroke="#262626" stroke-width="1.5"/></svg>
<svg class="a" style="left:47px;top:424px" width="16" height="16"><use href="#cutc"/></svg>
<div class="t" id="tr1" style="letter-spacing:-0.234px;left:69.5px;top:425px;">Cut002</div>
<svg class="a" style="left:48px;top:446px" width="10" height="8" viewBox="0 0 10 8"><path d="M1.2 1.8L5 5.6L8.8 1.8" fill="none" stroke="#262626" stroke-width="1.5"/></svg>
<svg class="a" style="left:67px;top:442px" width="16" height="16"><use href="#cutg"/></svg>
<div class="t g" id="tr2" style="letter-spacing:-0.401px;left:89.5px;top:443px;">Cut001</div>
<svg class="a" style="left:70px;top:463px" width="8" height="10" viewBox="0 0 8 10"><path d="M1.8 1.2L5.6 5L1.8 8.8" fill="none" stroke="#a6a6a6" stroke-width="1.5"/></svg>
<svg class="a" style="left:87px;top:460px" width="16" height="16"><use href="#cutg"/></svg>
<div class="t g" id="tr3" style="letter-spacing:0.204px;left:109.5px;top:461px;">Cut</div>
<svg class="a" style="left:68px;top:482px" width="10" height="8" viewBox="0 0 10 8"><path d="M1.2 1.8L5 5.6L8.8 1.8" fill="none" stroke="#262626" stroke-width="1.5"/></svg>
<svg class="a" style="left:87px;top:478px" width="16" height="16"><use href="#fus"/></svg>
<div class="t g" id="tr4" style="letter-spacing:-0.305px;left:109.5px;top:479px;">Fusion002</div>
<svg class="a" style="left:107px;top:496px" width="16" height="16"><use href="#cyl"/></svg>
<div class="t g" id="tr5" style="letter-spacing:-0.250px;left:129.5px;top:497px;">Cylinder001</div>
<svg class="a" style="left:107px;top:514px" width="16" height="16"><use href="#cyl"/></svg>
<div class="t g" id="tr6" style="letter-spacing:-0.204px;left:129.5px;top:515px;">Cylinder004</div>
<svg class="a" style="left:107px;top:532px" width="16" height="16"><use href="#cyl"/></svg>
<div class="t g" id="tr7" style="letter-spacing:-0.204px;left:129.5px;top:533px;">Cylinder002</div>
<svg class="a" style="left:107px;top:550px" width="16" height="16"><use href="#cyl"/></svg>
<div class="t g" id="tr8" style="letter-spacing:-0.204px;left:129.5px;top:551px;">Cylinder003</div>
<svg class="a" style="left:48px;top:572px" width="10" height="8" viewBox="0 0 10 8"><path d="M1.2 1.8L5 5.6L8.8 1.8" fill="none" stroke="#262626" stroke-width="1.5"/></svg>
<svg class="a" style="left:67px;top:568px" width="16" height="16"><use href="#fus"/></svg>
<div class="t g" id="tr9" style="letter-spacing:-0.305px;left:89.5px;top:569px;">Fusion003</div>
<svg class="a" style="left:87px;top:586px" width="16" height="16"><use href="#cyl"/></svg>
<div class="t g" id="tr10" style="letter-spacing:-0.159px;left:109.5px;top:587px;">Cylinder005</div>
<svg class="a" style="left:87px;top:604px" width="16" height="16"><use href="#cyl"/></svg>
<div class="t g" id="tr11" style="letter-spacing:-0.159px;left:109.5px;top:605px;">Cylinder006</div>
<svg class="a" style="left:87px;top:622px" width="16" height="16"><use href="#cyl"/></svg>
<div class="t g" id="tr12" style="letter-spacing:-0.159px;left:109.5px;top:623px;">Cylinder007</div>
<svg class="a" style="left:87px;top:640px" width="16" height="16"><use href="#cyl"/></svg>
<div class="t g" id="tr13" style="letter-spacing:-0.159px;left:109.5px;top:641px;">Cylinder008</div>
<div class="frame" style="left:5px;top:740px;width:256px;height:391px;"></div>
<div class="a" style="left:105px;top:742px;width:1px;height:22px;background:#d8d8d8;"></div>
<div class="a" style="left:258px;top:742px;width:1px;height:22px;background:#d8d8d8;"></div>
<div class="t" id="pr" style="letter-spacing:-0.070px;left:10.5px;top:746px;">Property</div>
<div class="t" id="va" style="letter-spacing:-0.202px;left:110px;top:746px;">Value</div>
<svg class="a" style="left:1px;top:1131px" width="268" height="17" viewBox="0 0 268 17"><path d="M2 2.5H262" stroke="#fdfdfd" stroke-width="1.5"/><path d="M3 3.5C5 8 4.5 14 9 14.5H40C44.5 14 44 8 46.5 3.5" fill="#f0f0f0" stroke="#1a1a1a" stroke-width="1"/><path d="M46.5 3.5C49 8 48.5 15 53 15.8H87C91.5 15 91 8 94 3.5" fill="#fff" stroke="#1a1a1a" stroke-width="1"/><path d="M47.5 3.2H93" stroke="#fff" stroke-width="1.6"/></svg><div class="t" id="bv" style="letter-spacing:-0.464px;font-size:11px;left:15px;top:1133px;">View</div><div class="t" id="bd" style="letter-spacing:0.138px;font-size:11px;left:60px;top:1134px;">Data</div>
<!-- mdi tabs -->
<div class="a" style="left:273px;top:1128px;width:1006px;height:1px;background:#a0a0a0;"></div><div class="a" style="left:273px;top:1129px;width:1006px;height:1px;background:#fcfcfc;"></div><div class="a" style="left:273px;top:1130px;width:1006px;height:18px;background:#f0f0f0;"></div>
<div class="a" style="left:274px;top:1131px;width:114px;height:17px;background:#f0f0f0;border:1px solid #d9d9d9;border-bottom:none;box-sizing:border-box;"></div>
<svg class="a" style="left:285px;top:1131px" width="16" height="16"><use href="#fc"/></svg>
<div class="t" id="md0" style="letter-spacing:0.103px;font-size:11px;left:304px;top:1133px;">Start page</div>
<svg class="a" style="left:360px;top:1132px" width="14" height="14" viewBox="0 0 14 14"><rect x="0.5" y="0.5" width="13" height="13" rx="2" fill="#c6c6c6" stroke="#9c9c9c"/><path d="M4 4l6 6M10 4l-6 6" stroke="#f4f4f4" stroke-width="2"/></svg>
<div class="a" style="left:388px;top:1131px;width:131px;height:17px;background:#f0f0f0;border:1px solid #d9d9d9;border-bottom:none;box-sizing:border-box;"></div>
<svg class="a" style="left:400px;top:1131px" width="16" height="16"><use href="#fc"/></svg>
<div class="t" id="md1" style="letter-spacing:0.128px;font-size:11px;left:419px;top:1133px;">Unnamed : 1*</div>
<svg class="a" style="left:491px;top:1132px" width="14" height="14" viewBox="0 0 14 14"><rect x="0.5" y="0.5" width="13" height="13" rx="2" fill="#c6c6c6" stroke="#9c9c9c"/><path d="M4 4l6 6M10 4l-6 6" stroke="#f4f4f4" stroke-width="2"/></svg>
<div class="a" style="left:519px;top:1131px;width:120px;height:17px;background:#f0f0f0;border:1px solid #d9d9d9;border-bottom:none;box-sizing:border-box;"></div>
<svg class="a" style="left:530px;top:1131px" width="16" height="16"><use href="#fc"/></svg>
<div class="t" id="md2" style="letter-spacing:0.197px;font-size:11px;left:551px;top:1133px;">fan duct : 1</div>
<svg class="a" style="left:611px;top:1132px" width="14" height="14" viewBox="0 0 14 14"><rect x="0.5" y="0.5" width="13" height="13" rx="2" fill="#c6c6c6" stroke="#9c9c9c"/><path d="M4 4l6 6M10 4l-6 6" stroke="#f4f4f4" stroke-width="2"/></svg>
<div class="a" style="left:639px;top:1131px;width:133px;height:17px;background:#f0f0f0;border:1px solid #d9d9d9;border-bottom:none;box-sizing:border-box;"></div>
<svg class="a" style="left:651px;top:1131px" width="16" height="16"><use href="#fc"/></svg>
<div class="t" id="md3" style="letter-spacing:0.179px;font-size:11px;left:671px;top:1133px;">fan duct v2 : 1</div>
<svg class="a" style="left:746px;top:1132px" width="14" height="14" viewBox="0 0 14 14"><rect x="0.5" y="0.5" width="13" height="13" rx="2" fill="#c6c6c6" stroke="#9c9c9c"/><path d="M4 4l6 6M10 4l-6 6" stroke="#f4f4f4" stroke-width="2"/></svg>
<div class="a" style="left:772px;top:1129px;width:137px;height:19px;background:#fff;border:1px solid #d9d9d9;border-bottom:none;box-sizing:border-box;"></div>
<svg class="a" style="left:786px;top:1131px" width="16" height="16"><use href="#fc"/></svg>
<div class="t" id="md4" style="letter-spacing:0.179px;font-size:11px;left:806px;top:1134px;">fan duct v3 : 1</div>
<svg class="a" style="left:881px;top:1133px" width="14" height="14" viewBox="0 0 14 14"><rect x="0.5" y="0.5" width="13" height="13" rx="2" fill="#e0653a" stroke="#b7421c"/><path d="M4 4l6 6M10 4l-6 6" stroke="#fff" stroke-width="2"/></svg>
</body></html>
